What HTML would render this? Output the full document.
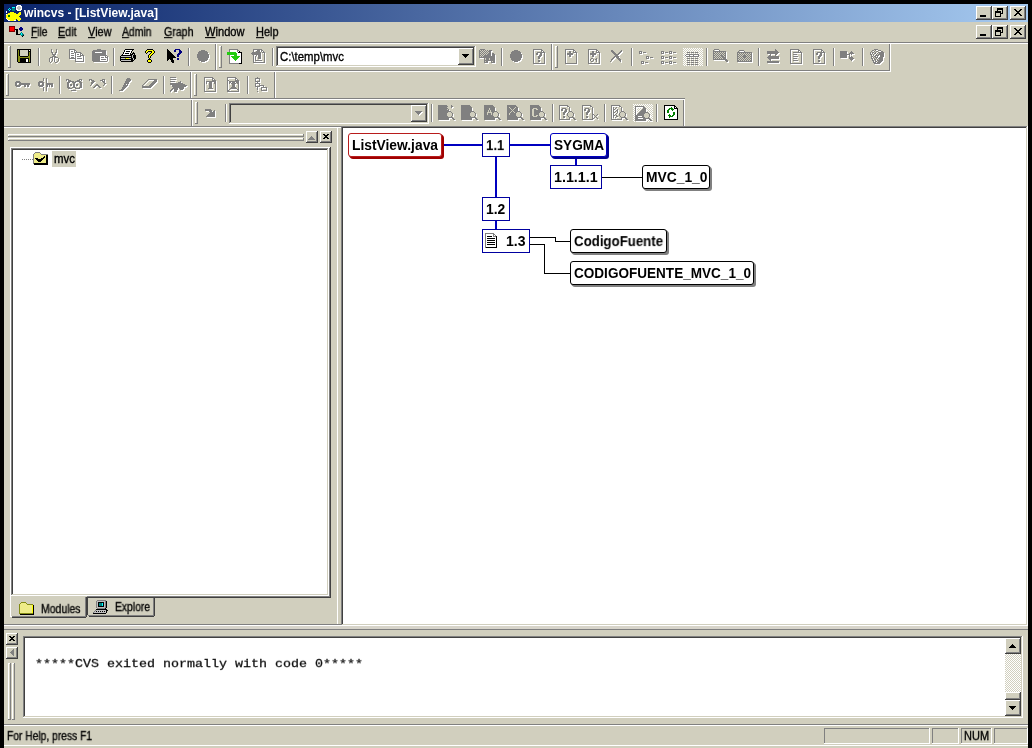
<!DOCTYPE html>
<html><head><meta charset="utf-8"><title>wincvs - [ListView.java]</title>
<style>
html,body{margin:0;padding:0}
body{width:1032px;height:748px;background:#d1cfbe;position:relative;overflow:hidden;font:11px/1 "Liberation Sans",sans-serif}
div{position:absolute;box-sizing:border-box}
svg{position:absolute;overflow:visible}
u{text-decoration:underline}
.t{will-change:transform}
.s{-webkit-text-stroke:0.3px currentColor}
</style></head><body>
<div style="left:0px;top:0px;width:1032px;height:4px;background:#000;"></div>
<div style="left:0px;top:0px;width:4px;height:748px;background:#000;"></div>
<div style="left:1028px;top:0px;width:4px;height:748px;background:#000;"></div>
<div style="left:4px;top:4px;width:1024px;height:18px;background:linear-gradient(to right,#0a246a,#a6caf0);"></div>
<div class="t" style="left:24px;top:6.69px;font:bold 11px/13px 'Liberation Sans',sans-serif;color:#fff;white-space:pre;transform:scale(1.0959,1.0900);transform-origin:0 10.31px;">wincvs - [ListView.java]</div>
<svg style="left:6px;top:5px" width="16" height="16" viewBox="0 0 16 16" shape-rendering="crispEdges" ><rect x="11" y="0" width="4" height="1" fill="#fff"/><rect x="10" y="1" width="2" height="1" fill="#fff"/><rect x="12" y="1" width="2" height="1" fill="#c0c0c0"/><rect x="14" y="1" width="2" height="1" fill="#fff"/><rect x="6" y="2" width="3" height="1" fill="#00ffff"/><rect x="10" y="2" width="1" height="1" fill="#fff"/><rect x="11" y="2" width="4" height="1" fill="#c0c0c0"/><rect x="15" y="2" width="1" height="1" fill="#fff"/><rect x="3" y="3" width="1" height="1" fill="#00ffff"/><rect x="6" y="3" width="3" height="1" fill="#008080"/><rect x="10" y="3" width="1" height="1" fill="#fff"/><rect x="11" y="3" width="4" height="1" fill="#c0c0c0"/><rect x="15" y="3" width="1" height="1" fill="#fff"/><rect x="2" y="4" width="1" height="1" fill="#00ffff"/><rect x="4" y="4" width="1" height="1" fill="#00ffff"/><rect x="6" y="4" width="3" height="1" fill="#008080"/><rect x="10" y="4" width="2" height="1" fill="#fff"/><rect x="12" y="4" width="2" height="1" fill="#c0c0c0"/><rect x="14" y="4" width="2" height="1" fill="#fff"/><rect x="3" y="5" width="1" height="1" fill="#00ffff"/><rect x="6" y="5" width="3" height="1" fill="#008080"/><rect x="11" y="5" width="4" height="1" fill="#fff"/><rect x="0" y="6" width="1" height="1" fill="#fff"/><rect x="0" y="7" width="1" height="1" fill="#fff"/><rect x="4" y="7" width="4" height="1" fill="#ffff00"/><rect x="13" y="7" width="2" height="1" fill="#ffff00"/><rect x="2" y="8" width="8" height="1" fill="#ffff00"/><rect x="12" y="8" width="3" height="1" fill="#ffff00"/><rect x="0" y="9" width="1" height="1" fill="#fff"/><rect x="1" y="9" width="14" height="1" fill="#ffff00"/><rect x="0" y="10" width="2" height="1" fill="#ffff00"/><rect x="2" y="10" width="2" height="1" fill="#008000"/><rect x="4" y="10" width="10" height="1" fill="#ffff00"/><rect x="0" y="11" width="2" height="1" fill="#ffff00"/><rect x="2" y="11" width="2" height="1" fill="#008000"/><rect x="4" y="11" width="9" height="1" fill="#ffff00"/><rect x="0" y="12" width="14" height="1" fill="#ffff00"/><rect x="0" y="13" width="1" height="1" fill="#fff"/><rect x="1" y="13" width="14" height="1" fill="#ffff00"/><rect x="1" y="14" width="1" height="1" fill="#fff"/><rect x="2" y="14" width="8" height="1" fill="#ffff00"/><rect x="11" y="14" width="4" height="1" fill="#ffff00"/><rect x="2" y="15" width="2" height="1" fill="#fff"/><rect x="4" y="15" width="4" height="1" fill="#ffff00"/><rect x="8" y="15" width="2" height="1" fill="#fff"/><rect x="12" y="15" width="2" height="1" fill="#ffff00"/></svg>
<div style="left:976px;top:6px;width:16px;height:14px;background:#d1cfbe;"></div>
<div style="left:976px;top:6px;width:15px;height:1px;background:#ffffff;"></div>
<div style="left:976px;top:6px;width:1px;height:13px;background:#ffffff;"></div>
<div style="left:976px;top:19px;width:16px;height:1px;background:#404040;"></div>
<div style="left:991px;top:6px;width:1px;height:14px;background:#404040;"></div>
<div style="left:977px;top:18px;width:14px;height:1px;background:#808080;"></div>
<div style="left:990px;top:7px;width:1px;height:12px;background:#808080;"></div>
<div style="left:980px;top:15px;width:6px;height:2px;background:#000;"></div>
<div style="left:992px;top:6px;width:16px;height:14px;background:#d1cfbe;"></div>
<div style="left:992px;top:6px;width:15px;height:1px;background:#ffffff;"></div>
<div style="left:992px;top:6px;width:1px;height:13px;background:#ffffff;"></div>
<div style="left:992px;top:19px;width:16px;height:1px;background:#404040;"></div>
<div style="left:1007px;top:6px;width:1px;height:14px;background:#404040;"></div>
<div style="left:993px;top:18px;width:14px;height:1px;background:#808080;"></div>
<div style="left:1006px;top:7px;width:1px;height:12px;background:#808080;"></div>
<svg style="left:995px;top:8px" width="8" height="9" viewBox="0 0 8 9" shape-rendering="crispEdges" ><rect x="2" y="0" width="6" height="1" fill="#000"/><rect x="2" y="1" width="6" height="1" fill="#000"/><rect x="2" y="2" width="1" height="1" fill="#000"/><rect x="7" y="2" width="1" height="1" fill="#000"/><rect x="0" y="3" width="6" height="1" fill="#000"/><rect x="7" y="3" width="1" height="1" fill="#000"/><rect x="0" y="4" width="6" height="1" fill="#000"/><rect x="7" y="4" width="1" height="1" fill="#000"/><rect x="0" y="5" width="1" height="1" fill="#000"/><rect x="5" y="5" width="3" height="1" fill="#000"/><rect x="0" y="6" width="1" height="1" fill="#000"/><rect x="5" y="6" width="1" height="1" fill="#000"/><rect x="0" y="7" width="1" height="1" fill="#000"/><rect x="5" y="7" width="1" height="1" fill="#000"/><rect x="0" y="8" width="6" height="1" fill="#000"/></svg>
<div style="left:1010px;top:6px;width:16px;height:14px;background:#d1cfbe;"></div>
<div style="left:1010px;top:6px;width:15px;height:1px;background:#ffffff;"></div>
<div style="left:1010px;top:6px;width:1px;height:13px;background:#ffffff;"></div>
<div style="left:1010px;top:19px;width:16px;height:1px;background:#404040;"></div>
<div style="left:1025px;top:6px;width:1px;height:14px;background:#404040;"></div>
<div style="left:1011px;top:18px;width:14px;height:1px;background:#808080;"></div>
<div style="left:1024px;top:7px;width:1px;height:12px;background:#808080;"></div>
<svg style="left:1014px;top:9px" width="8" height="7" viewBox="0 0 8 7" shape-rendering="crispEdges" ><rect x="0" y="0" width="2" height="1" fill="#000"/><rect x="6" y="0" width="2" height="1" fill="#000"/><rect x="1" y="1" width="2" height="1" fill="#000"/><rect x="5" y="1" width="2" height="1" fill="#000"/><rect x="2" y="2" width="4" height="1" fill="#000"/><rect x="3" y="3" width="2" height="1" fill="#000"/><rect x="2" y="4" width="4" height="1" fill="#000"/><rect x="1" y="5" width="2" height="1" fill="#000"/><rect x="5" y="5" width="2" height="1" fill="#000"/><rect x="0" y="6" width="2" height="1" fill="#000"/><rect x="6" y="6" width="2" height="1" fill="#000"/></svg>
<div style="left:976px;top:25px;width:16px;height:14px;background:#d1cfbe;"></div>
<div style="left:976px;top:25px;width:15px;height:1px;background:#ffffff;"></div>
<div style="left:976px;top:25px;width:1px;height:13px;background:#ffffff;"></div>
<div style="left:976px;top:38px;width:16px;height:1px;background:#404040;"></div>
<div style="left:991px;top:25px;width:1px;height:14px;background:#404040;"></div>
<div style="left:977px;top:37px;width:14px;height:1px;background:#808080;"></div>
<div style="left:990px;top:26px;width:1px;height:12px;background:#808080;"></div>
<div style="left:980px;top:34px;width:6px;height:2px;background:#000;"></div>
<div style="left:992px;top:25px;width:16px;height:14px;background:#d1cfbe;"></div>
<div style="left:992px;top:25px;width:15px;height:1px;background:#ffffff;"></div>
<div style="left:992px;top:25px;width:1px;height:13px;background:#ffffff;"></div>
<div style="left:992px;top:38px;width:16px;height:1px;background:#404040;"></div>
<div style="left:1007px;top:25px;width:1px;height:14px;background:#404040;"></div>
<div style="left:993px;top:37px;width:14px;height:1px;background:#808080;"></div>
<div style="left:1006px;top:26px;width:1px;height:12px;background:#808080;"></div>
<svg style="left:995px;top:27px" width="8" height="9" viewBox="0 0 8 9" shape-rendering="crispEdges" ><rect x="2" y="0" width="6" height="1" fill="#000"/><rect x="2" y="1" width="6" height="1" fill="#000"/><rect x="2" y="2" width="1" height="1" fill="#000"/><rect x="7" y="2" width="1" height="1" fill="#000"/><rect x="0" y="3" width="6" height="1" fill="#000"/><rect x="7" y="3" width="1" height="1" fill="#000"/><rect x="0" y="4" width="6" height="1" fill="#000"/><rect x="7" y="4" width="1" height="1" fill="#000"/><rect x="0" y="5" width="1" height="1" fill="#000"/><rect x="5" y="5" width="3" height="1" fill="#000"/><rect x="0" y="6" width="1" height="1" fill="#000"/><rect x="5" y="6" width="1" height="1" fill="#000"/><rect x="0" y="7" width="1" height="1" fill="#000"/><rect x="5" y="7" width="1" height="1" fill="#000"/><rect x="0" y="8" width="6" height="1" fill="#000"/></svg>
<div style="left:1010px;top:25px;width:16px;height:14px;background:#d1cfbe;"></div>
<div style="left:1010px;top:25px;width:15px;height:1px;background:#ffffff;"></div>
<div style="left:1010px;top:25px;width:1px;height:13px;background:#ffffff;"></div>
<div style="left:1010px;top:38px;width:16px;height:1px;background:#404040;"></div>
<div style="left:1025px;top:25px;width:1px;height:14px;background:#404040;"></div>
<div style="left:1011px;top:37px;width:14px;height:1px;background:#808080;"></div>
<div style="left:1024px;top:26px;width:1px;height:12px;background:#808080;"></div>
<svg style="left:1014px;top:28px" width="8" height="7" viewBox="0 0 8 7" shape-rendering="crispEdges" ><rect x="0" y="0" width="2" height="1" fill="#000"/><rect x="6" y="0" width="2" height="1" fill="#000"/><rect x="1" y="1" width="2" height="1" fill="#000"/><rect x="5" y="1" width="2" height="1" fill="#000"/><rect x="2" y="2" width="4" height="1" fill="#000"/><rect x="3" y="3" width="2" height="1" fill="#000"/><rect x="2" y="4" width="4" height="1" fill="#000"/><rect x="1" y="5" width="2" height="1" fill="#000"/><rect x="5" y="5" width="2" height="1" fill="#000"/><rect x="0" y="6" width="2" height="1" fill="#000"/><rect x="6" y="6" width="2" height="1" fill="#000"/></svg>
<svg style="left:8px;top:25px" width="16" height="12" viewBox="0 0 16 12" shape-rendering="crispEdges" ><rect x="1" y="1" width="6" height="1" fill="#800000"/><rect x="1" y="2" width="1" height="1" fill="#800000"/><rect x="2" y="2" width="4" height="1" fill="#ff0000"/><rect x="6" y="2" width="1" height="1" fill="#800000"/><rect x="12" y="2" width="2" height="1" fill="#000080"/><rect x="1" y="3" width="1" height="1" fill="#800000"/><rect x="2" y="3" width="4" height="1" fill="#ff0000"/><rect x="6" y="3" width="1" height="1" fill="#800000"/><rect x="11" y="3" width="4" height="1" fill="#000080"/><rect x="1" y="4" width="1" height="1" fill="#800000"/><rect x="2" y="4" width="4" height="1" fill="#ff0000"/><rect x="6" y="4" width="1" height="1" fill="#800000"/><rect x="7" y="4" width="3" height="1" fill="#000"/><rect x="11" y="4" width="4" height="1" fill="#000080"/><rect x="1" y="5" width="1" height="1" fill="#800000"/><rect x="2" y="5" width="4" height="1" fill="#ff0000"/><rect x="6" y="5" width="1" height="1" fill="#800000"/><rect x="8" y="5" width="2" height="1" fill="#000"/><rect x="12" y="5" width="2" height="1" fill="#000080"/><rect x="1" y="6" width="6" height="1" fill="#800000"/><rect x="8" y="6" width="2" height="1" fill="#000"/><rect x="8" y="7" width="2" height="1" fill="#000"/><rect x="13" y="7" width="1" height="1" fill="#008080"/><rect x="8" y="8" width="2" height="1" fill="#000"/><rect x="12" y="8" width="1" height="1" fill="#008080"/><rect x="13" y="8" width="1" height="1" fill="#00ffff"/><rect x="14" y="8" width="1" height="1" fill="#008080"/><rect x="8" y="9" width="4" height="1" fill="#000"/><rect x="12" y="9" width="1" height="1" fill="#008080"/><rect x="13" y="9" width="1" height="1" fill="#00ffff"/><rect x="14" y="9" width="2" height="1" fill="#008080"/><rect x="13" y="10" width="2" height="1" fill="#008080"/><rect x="15" y="10" width="1" height="1" fill="#000"/><rect x="14" y="11" width="1" height="1" fill="#000"/></svg>
<div class="t s" style="left:31px;top:25.69px;font:11px/13px 'Liberation Sans',sans-serif;color:#000;white-space:pre;transform:scale(0.9310,1.0900);transform-origin:0 10.31px;"><u>F</u>ile</div>
<div class="t s" style="left:58px;top:25.69px;font:11px/13px 'Liberation Sans',sans-serif;color:#000;white-space:pre;transform:scale(0.9760,1.0900);transform-origin:0 10.31px;"><u>E</u>dit</div>
<div class="t s" style="left:88px;top:25.69px;font:11px/13px 'Liberation Sans',sans-serif;color:#000;white-space:pre;transform:scale(0.9940,1.0900);transform-origin:0 10.31px;"><u>V</u>iew</div>
<div class="t s" style="left:122px;top:25.69px;font:11px/13px 'Liberation Sans',sans-serif;color:#000;white-space:pre;transform:scale(0.9461,1.0900);transform-origin:0 10.31px;"><u>A</u>dmin</div>
<div class="t s" style="left:164px;top:25.69px;font:11px/13px 'Liberation Sans',sans-serif;color:#000;white-space:pre;transform:scale(0.9649,1.0900);transform-origin:0 10.31px;"><u>G</u>raph</div>
<div class="t s" style="left:205px;top:25.69px;font:11px/13px 'Liberation Sans',sans-serif;color:#000;white-space:pre;transform:scale(1.0097,1.0900);transform-origin:0 10.31px;"><u>W</u>indow</div>
<div class="t s" style="left:256px;top:25.69px;font:11px/13px 'Liberation Sans',sans-serif;color:#000;white-space:pre;transform:scale(0.9946,1.0900);transform-origin:0 10.31px;"><u>H</u>elp</div>
<div style="left:4px;top:42px;width:1024px;height:1px;background:#808080;"></div>
<div style="left:4px;top:43px;width:1024px;height:1px;background:#ffffff;"></div>
<div style="left:4px;top:70px;width:887px;height:1px;background:#808080;"></div>
<div style="left:4px;top:71px;width:887px;height:1px;background:#ffffff;"></div>
<div style="left:4px;top:98px;width:681px;height:1px;background:#808080;"></div>
<div style="left:4px;top:99px;width:681px;height:1px;background:#ffffff;"></div>
<div style="left:4px;top:126px;width:1024px;height:1px;background:#808080;"></div>
<div style="left:4px;top:127px;width:1024px;height:1px;background:#ffffff;"></div>
<div style="left:8px;top:46px;width:3px;height:1px;background:#ffffff;"></div>
<div style="left:8px;top:46px;width:1px;height:22px;background:#ffffff;"></div>
<div style="left:8px;top:67px;width:3px;height:1px;background:#808080;"></div>
<div style="left:10px;top:46px;width:1px;height:22px;background:#808080;"></div>
<svg style="left:16px;top:49px" width="15" height="14" viewBox="0 0 15 14" shape-rendering="crispEdges" ><rect x="1" y="0" width="14" height="1" fill="#000"/><rect x="1" y="1" width="1" height="1" fill="#000"/><rect x="2" y="1" width="1" height="1" fill="#848c14"/><rect x="3" y="1" width="1" height="1" fill="#000"/><rect x="4" y="1" width="8" height="1" fill="#d1cfbe"/><rect x="12" y="1" width="1" height="1" fill="#000"/><rect x="13" y="1" width="1" height="1" fill="#fff"/><rect x="14" y="1" width="1" height="1" fill="#000"/><rect x="1" y="2" width="1" height="1" fill="#000"/><rect x="2" y="2" width="1" height="1" fill="#848c14"/><rect x="3" y="2" width="1" height="1" fill="#000"/><rect x="4" y="2" width="8" height="1" fill="#d1cfbe"/><rect x="12" y="2" width="3" height="1" fill="#000"/><rect x="1" y="3" width="1" height="1" fill="#000"/><rect x="2" y="3" width="1" height="1" fill="#848c14"/><rect x="3" y="3" width="1" height="1" fill="#000"/><rect x="4" y="3" width="8" height="1" fill="#d1cfbe"/><rect x="12" y="3" width="1" height="1" fill="#000"/><rect x="13" y="3" width="1" height="1" fill="#848c14"/><rect x="14" y="3" width="1" height="1" fill="#000"/><rect x="1" y="4" width="1" height="1" fill="#000"/><rect x="2" y="4" width="1" height="1" fill="#848c14"/><rect x="3" y="4" width="1" height="1" fill="#000"/><rect x="4" y="4" width="8" height="1" fill="#d1cfbe"/><rect x="12" y="4" width="1" height="1" fill="#000"/><rect x="13" y="4" width="1" height="1" fill="#848c14"/><rect x="14" y="4" width="1" height="1" fill="#000"/><rect x="1" y="5" width="1" height="1" fill="#000"/><rect x="2" y="5" width="1" height="1" fill="#848c14"/><rect x="3" y="5" width="1" height="1" fill="#000"/><rect x="4" y="5" width="8" height="1" fill="#d1cfbe"/><rect x="12" y="5" width="1" height="1" fill="#000"/><rect x="13" y="5" width="1" height="1" fill="#848c14"/><rect x="14" y="5" width="1" height="1" fill="#000"/><rect x="1" y="6" width="1" height="1" fill="#000"/><rect x="2" y="6" width="1" height="1" fill="#848c14"/><rect x="3" y="6" width="1" height="1" fill="#000"/><rect x="4" y="6" width="8" height="1" fill="#d1cfbe"/><rect x="12" y="6" width="1" height="1" fill="#000"/><rect x="13" y="6" width="1" height="1" fill="#848c14"/><rect x="14" y="6" width="1" height="1" fill="#000"/><rect x="1" y="7" width="1" height="1" fill="#000"/><rect x="2" y="7" width="2" height="1" fill="#848c14"/><rect x="4" y="7" width="8" height="1" fill="#000"/><rect x="12" y="7" width="2" height="1" fill="#848c14"/><rect x="14" y="7" width="1" height="1" fill="#000"/><rect x="1" y="8" width="1" height="1" fill="#000"/><rect x="2" y="8" width="12" height="1" fill="#848c14"/><rect x="14" y="8" width="1" height="1" fill="#000"/><rect x="1" y="9" width="1" height="1" fill="#000"/><rect x="2" y="9" width="2" height="1" fill="#848c14"/><rect x="4" y="9" width="9" height="1" fill="#000"/><rect x="13" y="9" width="1" height="1" fill="#848c14"/><rect x="14" y="9" width="1" height="1" fill="#000"/><rect x="1" y="10" width="1" height="1" fill="#000"/><rect x="2" y="10" width="2" height="1" fill="#848c14"/><rect x="4" y="10" width="6" height="1" fill="#000"/><rect x="10" y="10" width="2" height="1" fill="#fff"/><rect x="12" y="10" width="1" height="1" fill="#000"/><rect x="13" y="10" width="1" height="1" fill="#848c14"/><rect x="14" y="10" width="1" height="1" fill="#000"/><rect x="1" y="11" width="1" height="1" fill="#000"/><rect x="2" y="11" width="2" height="1" fill="#848c14"/><rect x="4" y="11" width="6" height="1" fill="#000"/><rect x="10" y="11" width="2" height="1" fill="#fff"/><rect x="12" y="11" width="1" height="1" fill="#000"/><rect x="13" y="11" width="1" height="1" fill="#848c14"/><rect x="14" y="11" width="1" height="1" fill="#000"/><rect x="1" y="12" width="1" height="1" fill="#000"/><rect x="2" y="12" width="2" height="1" fill="#848c14"/><rect x="4" y="12" width="6" height="1" fill="#000"/><rect x="10" y="12" width="2" height="1" fill="#fff"/><rect x="12" y="12" width="1" height="1" fill="#000"/><rect x="13" y="12" width="1" height="1" fill="#848c14"/><rect x="14" y="12" width="1" height="1" fill="#000"/><rect x="2" y="13" width="13" height="1" fill="#000"/></svg>
<div style="left:38px;top:48px;width:1px;height:18px;background:#808080;"></div>
<div style="left:39px;top:48px;width:1px;height:18px;background:#ffffff;"></div>
<svg style="left:45px;top:49px" width="15" height="15" viewBox="0 0 15 15" shape-rendering="crispEdges" ><rect x="6" y="0" width="1" height="1" fill="#808080"/><rect x="11" y="0" width="1" height="1" fill="#808080"/><rect x="6" y="1" width="1" height="1" fill="#808080"/><rect x="7" y="1" width="1" height="1" fill="#fff"/><rect x="11" y="1" width="1" height="1" fill="#808080"/><rect x="12" y="1" width="1" height="1" fill="#fff"/><rect x="6" y="2" width="1" height="1" fill="#808080"/><rect x="7" y="2" width="1" height="1" fill="#fff"/><rect x="11" y="2" width="1" height="1" fill="#808080"/><rect x="12" y="2" width="1" height="1" fill="#fff"/><rect x="6" y="3" width="2" height="1" fill="#808080"/><rect x="10" y="3" width="2" height="1" fill="#808080"/><rect x="12" y="3" width="1" height="1" fill="#fff"/><rect x="7" y="4" width="1" height="1" fill="#808080"/><rect x="8" y="4" width="1" height="1" fill="#fff"/><rect x="10" y="4" width="1" height="1" fill="#808080"/><rect x="11" y="4" width="2" height="1" fill="#fff"/><rect x="7" y="5" width="4" height="1" fill="#808080"/><rect x="11" y="5" width="1" height="1" fill="#fff"/><rect x="8" y="6" width="2" height="1" fill="#808080"/><rect x="10" y="6" width="2" height="1" fill="#fff"/><rect x="7" y="7" width="4" height="1" fill="#808080"/><rect x="5" y="8" width="3" height="1" fill="#808080"/><rect x="8" y="8" width="1" height="1" fill="#fff"/><rect x="9" y="8" width="4" height="1" fill="#808080"/><rect x="4" y="9" width="1" height="1" fill="#808080"/><rect x="6" y="9" width="1" height="1" fill="#fff"/><rect x="7" y="9" width="1" height="1" fill="#808080"/><rect x="8" y="9" width="1" height="1" fill="#fff"/><rect x="9" y="9" width="1" height="1" fill="#808080"/><rect x="10" y="9" width="3" height="1" fill="#fff"/><rect x="13" y="9" width="1" height="1" fill="#808080"/><rect x="4" y="10" width="1" height="1" fill="#808080"/><rect x="5" y="10" width="1" height="1" fill="#fff"/><rect x="7" y="10" width="1" height="1" fill="#808080"/><rect x="8" y="10" width="1" height="1" fill="#fff"/><rect x="9" y="10" width="1" height="1" fill="#808080"/><rect x="10" y="10" width="1" height="1" fill="#fff"/><rect x="13" y="10" width="1" height="1" fill="#808080"/><rect x="14" y="10" width="1" height="1" fill="#fff"/><rect x="4" y="11" width="1" height="1" fill="#808080"/><rect x="5" y="11" width="1" height="1" fill="#fff"/><rect x="7" y="11" width="1" height="1" fill="#808080"/><rect x="8" y="11" width="1" height="1" fill="#fff"/><rect x="9" y="11" width="1" height="1" fill="#808080"/><rect x="10" y="11" width="1" height="1" fill="#fff"/><rect x="13" y="11" width="1" height="1" fill="#808080"/><rect x="14" y="11" width="1" height="1" fill="#fff"/><rect x="4" y="12" width="1" height="1" fill="#808080"/><rect x="5" y="12" width="1" height="1" fill="#fff"/><rect x="6" y="12" width="1" height="1" fill="#808080"/><rect x="8" y="12" width="1" height="1" fill="#fff"/><rect x="9" y="12" width="1" height="1" fill="#808080"/><rect x="10" y="12" width="1" height="1" fill="#fff"/><rect x="12" y="12" width="1" height="1" fill="#808080"/><rect x="14" y="12" width="1" height="1" fill="#fff"/><rect x="5" y="13" width="1" height="1" fill="#808080"/><rect x="7" y="13" width="1" height="1" fill="#fff"/><rect x="10" y="13" width="2" height="1" fill="#808080"/><rect x="13" y="13" width="1" height="1" fill="#fff"/><rect x="6" y="14" width="1" height="1" fill="#fff"/><rect x="11" y="14" width="2" height="1" fill="#fff"/></svg>
<svg style="left:68px;top:49px" width="17" height="14" viewBox="0 0 17 14" shape-rendering="crispEdges" ><rect x="1" y="0" width="6" height="1" fill="#808080"/><rect x="1" y="1" width="1" height="1" fill="#808080"/><rect x="2" y="1" width="4" height="1" fill="#fff"/><rect x="6" y="1" width="2" height="1" fill="#808080"/><rect x="1" y="2" width="1" height="1" fill="#808080"/><rect x="2" y="2" width="1" height="1" fill="#fff"/><rect x="3" y="2" width="2" height="1" fill="#808080"/><rect x="5" y="2" width="1" height="1" fill="#fff"/><rect x="6" y="2" width="1" height="1" fill="#808080"/><rect x="7" y="2" width="1" height="1" fill="#fff"/><rect x="8" y="2" width="1" height="1" fill="#808080"/><rect x="1" y="3" width="1" height="1" fill="#808080"/><rect x="2" y="3" width="4" height="1" fill="#fff"/><rect x="6" y="3" width="7" height="1" fill="#808080"/><rect x="1" y="4" width="1" height="1" fill="#808080"/><rect x="2" y="4" width="1" height="1" fill="#fff"/><rect x="3" y="4" width="3" height="1" fill="#808080"/><rect x="6" y="4" width="1" height="1" fill="#fff"/><rect x="7" y="4" width="1" height="1" fill="#808080"/><rect x="8" y="4" width="4" height="1" fill="#fff"/><rect x="12" y="4" width="2" height="1" fill="#808080"/><rect x="1" y="5" width="1" height="1" fill="#808080"/><rect x="2" y="5" width="5" height="1" fill="#fff"/><rect x="7" y="5" width="1" height="1" fill="#808080"/><rect x="8" y="5" width="1" height="1" fill="#fff"/><rect x="9" y="5" width="2" height="1" fill="#808080"/><rect x="11" y="5" width="1" height="1" fill="#fff"/><rect x="12" y="5" width="1" height="1" fill="#808080"/><rect x="13" y="5" width="1" height="1" fill="#fff"/><rect x="14" y="5" width="1" height="1" fill="#808080"/><rect x="1" y="6" width="1" height="1" fill="#808080"/><rect x="2" y="6" width="1" height="1" fill="#fff"/><rect x="3" y="6" width="3" height="1" fill="#808080"/><rect x="6" y="6" width="1" height="1" fill="#fff"/><rect x="7" y="6" width="1" height="1" fill="#808080"/><rect x="8" y="6" width="4" height="1" fill="#fff"/><rect x="12" y="6" width="4" height="1" fill="#808080"/><rect x="1" y="7" width="1" height="1" fill="#808080"/><rect x="2" y="7" width="5" height="1" fill="#fff"/><rect x="7" y="7" width="1" height="1" fill="#808080"/><rect x="8" y="7" width="1" height="1" fill="#fff"/><rect x="9" y="7" width="4" height="1" fill="#808080"/><rect x="13" y="7" width="2" height="1" fill="#fff"/><rect x="15" y="7" width="1" height="1" fill="#808080"/><rect x="16" y="7" width="1" height="1" fill="#fff"/><rect x="1" y="8" width="1" height="1" fill="#808080"/><rect x="2" y="8" width="1" height="1" fill="#fff"/><rect x="3" y="8" width="3" height="1" fill="#808080"/><rect x="6" y="8" width="1" height="1" fill="#fff"/><rect x="7" y="8" width="1" height="1" fill="#808080"/><rect x="8" y="8" width="7" height="1" fill="#fff"/><rect x="15" y="8" width="1" height="1" fill="#808080"/><rect x="16" y="8" width="1" height="1" fill="#fff"/><rect x="1" y="9" width="7" height="1" fill="#808080"/><rect x="8" y="9" width="1" height="1" fill="#fff"/><rect x="9" y="9" width="5" height="1" fill="#808080"/><rect x="14" y="9" width="1" height="1" fill="#fff"/><rect x="15" y="9" width="1" height="1" fill="#808080"/><rect x="16" y="9" width="1" height="1" fill="#fff"/><rect x="2" y="10" width="5" height="1" fill="#fff"/><rect x="7" y="10" width="1" height="1" fill="#808080"/><rect x="8" y="10" width="7" height="1" fill="#fff"/><rect x="15" y="10" width="1" height="1" fill="#808080"/><rect x="16" y="10" width="1" height="1" fill="#fff"/><rect x="7" y="11" width="1" height="1" fill="#808080"/><rect x="8" y="11" width="7" height="1" fill="#fff"/><rect x="15" y="11" width="1" height="1" fill="#808080"/><rect x="16" y="11" width="1" height="1" fill="#fff"/><rect x="7" y="12" width="9" height="1" fill="#808080"/><rect x="16" y="12" width="1" height="1" fill="#fff"/><rect x="8" y="13" width="9" height="1" fill="#fff"/></svg>
<svg style="left:91px;top:49px" width="18" height="14" viewBox="0 0 18 14" shape-rendering="crispEdges" ><rect x="6" y="0" width="4" height="1" fill="#808080"/><rect x="2" y="1" width="13" height="1" fill="#808080"/><rect x="1" y="2" width="14" height="1" fill="#808080"/><rect x="15" y="2" width="1" height="1" fill="#fff"/><rect x="1" y="3" width="3" height="1" fill="#808080"/><rect x="4" y="3" width="7" height="1" fill="#fff"/><rect x="11" y="3" width="4" height="1" fill="#808080"/><rect x="15" y="3" width="1" height="1" fill="#fff"/><rect x="1" y="4" width="14" height="1" fill="#808080"/><rect x="15" y="4" width="1" height="1" fill="#fff"/><rect x="1" y="5" width="14" height="1" fill="#808080"/><rect x="15" y="5" width="1" height="1" fill="#fff"/><rect x="1" y="6" width="15" height="1" fill="#808080"/><rect x="1" y="7" width="8" height="1" fill="#808080"/><rect x="9" y="7" width="5" height="1" fill="#fff"/><rect x="14" y="7" width="1" height="1" fill="#808080"/><rect x="15" y="7" width="1" height="1" fill="#fff"/><rect x="16" y="7" width="1" height="1" fill="#808080"/><rect x="1" y="8" width="8" height="1" fill="#808080"/><rect x="9" y="8" width="1" height="1" fill="#fff"/><rect x="10" y="8" width="3" height="1" fill="#808080"/><rect x="13" y="8" width="1" height="1" fill="#fff"/><rect x="14" y="8" width="3" height="1" fill="#808080"/><rect x="17" y="8" width="1" height="1" fill="#fff"/><rect x="1" y="9" width="8" height="1" fill="#808080"/><rect x="9" y="9" width="7" height="1" fill="#fff"/><rect x="16" y="9" width="1" height="1" fill="#808080"/><rect x="17" y="9" width="1" height="1" fill="#fff"/><rect x="1" y="10" width="8" height="1" fill="#808080"/><rect x="9" y="10" width="1" height="1" fill="#fff"/><rect x="10" y="10" width="5" height="1" fill="#808080"/><rect x="15" y="10" width="1" height="1" fill="#fff"/><rect x="16" y="10" width="1" height="1" fill="#808080"/><rect x="17" y="10" width="1" height="1" fill="#fff"/><rect x="1" y="11" width="8" height="1" fill="#808080"/><rect x="9" y="11" width="7" height="1" fill="#fff"/><rect x="16" y="11" width="1" height="1" fill="#808080"/><rect x="17" y="11" width="1" height="1" fill="#fff"/><rect x="2" y="12" width="14" height="1" fill="#808080"/><rect x="17" y="12" width="1" height="1" fill="#fff"/><rect x="3" y="13" width="14" height="1" fill="#fff"/></svg>
<div style="left:113px;top:48px;width:1px;height:18px;background:#808080;"></div>
<div style="left:114px;top:48px;width:1px;height:18px;background:#ffffff;"></div>
<svg style="left:120px;top:49px" width="16" height="13" viewBox="0 0 16 13" shape-rendering="crispEdges" ><rect x="5" y="0" width="9" height="1" fill="#000"/><rect x="4" y="1" width="1" height="1" fill="#000"/><rect x="5" y="1" width="7" height="1" fill="#fff"/><rect x="12" y="1" width="1" height="1" fill="#000"/><rect x="4" y="2" width="1" height="1" fill="#000"/><rect x="5" y="2" width="1" height="1" fill="#fff"/><rect x="6" y="2" width="4" height="1" fill="#000"/><rect x="10" y="2" width="1" height="1" fill="#fff"/><rect x="11" y="2" width="1" height="1" fill="#000"/><rect x="3" y="3" width="1" height="1" fill="#000"/><rect x="4" y="3" width="7" height="1" fill="#fff"/><rect x="11" y="3" width="1" height="1" fill="#000"/><rect x="13" y="3" width="1" height="1" fill="#000"/><rect x="3" y="4" width="1" height="1" fill="#000"/><rect x="4" y="4" width="1" height="1" fill="#fff"/><rect x="5" y="4" width="4" height="1" fill="#000"/><rect x="9" y="4" width="1" height="1" fill="#fff"/><rect x="10" y="4" width="1" height="1" fill="#000"/><rect x="12" y="4" width="3" height="1" fill="#000"/><rect x="2" y="5" width="1" height="1" fill="#000"/><rect x="3" y="5" width="7" height="1" fill="#fff"/><rect x="10" y="5" width="3" height="1" fill="#000"/><rect x="13" y="5" width="1" height="1" fill="#c0c0c0"/><rect x="14" y="5" width="1" height="1" fill="#000"/><rect x="1" y="6" width="11" height="1" fill="#000"/><rect x="12" y="6" width="1" height="1" fill="#c0c0c0"/><rect x="13" y="6" width="3" height="1" fill="#000"/><rect x="0" y="7" width="1" height="1" fill="#000"/><rect x="1" y="7" width="10" height="1" fill="#c0c0c0"/><rect x="11" y="7" width="1" height="1" fill="#000"/><rect x="12" y="7" width="1" height="1" fill="#c0c0c0"/><rect x="13" y="7" width="3" height="1" fill="#000"/><rect x="0" y="8" width="12" height="1" fill="#000"/><rect x="12" y="8" width="1" height="1" fill="#c0c0c0"/><rect x="13" y="8" width="3" height="1" fill="#000"/><rect x="0" y="9" width="1" height="1" fill="#000"/><rect x="1" y="9" width="4" height="1" fill="#c0c0c0"/><rect x="5" y="9" width="1" height="1" fill="#848c14"/><rect x="6" y="9" width="3" height="1" fill="#ffff00"/><rect x="9" y="9" width="2" height="1" fill="#c0c0c0"/><rect x="11" y="9" width="2" height="1" fill="#000"/><rect x="13" y="9" width="1" height="1" fill="#c0c0c0"/><rect x="14" y="9" width="2" height="1" fill="#000"/><rect x="0" y="10" width="13" height="1" fill="#000"/><rect x="13" y="10" width="1" height="1" fill="#c0c0c0"/><rect x="14" y="10" width="1" height="1" fill="#000"/><rect x="0" y="11" width="1" height="1" fill="#000"/><rect x="1" y="11" width="10" height="1" fill="#c0c0c0"/><rect x="11" y="11" width="3" height="1" fill="#000"/><rect x="1" y="12" width="12" height="1" fill="#000"/></svg>
<svg style="left:143px;top:49px" width="12" height="14" viewBox="0 0 12 14" shape-rendering="crispEdges" ><rect x="4" y="0" width="6" height="1" fill="#000"/><rect x="3" y="1" width="1" height="1" fill="#000"/><rect x="4" y="1" width="6" height="1" fill="#ffff00"/><rect x="10" y="1" width="1" height="1" fill="#000"/><rect x="2" y="2" width="1" height="1" fill="#000"/><rect x="3" y="2" width="2" height="1" fill="#ffff00"/><rect x="5" y="2" width="4" height="1" fill="#000"/><rect x="9" y="2" width="2" height="1" fill="#ffff00"/><rect x="11" y="2" width="1" height="1" fill="#000"/><rect x="2" y="3" width="1" height="1" fill="#000"/><rect x="3" y="3" width="1" height="1" fill="#ffff00"/><rect x="4" y="3" width="1" height="1" fill="#000"/><rect x="8" y="3" width="1" height="1" fill="#000"/><rect x="9" y="3" width="2" height="1" fill="#ffff00"/><rect x="11" y="3" width="1" height="1" fill="#000"/><rect x="3" y="4" width="1" height="1" fill="#000"/><rect x="7" y="4" width="1" height="1" fill="#000"/><rect x="8" y="4" width="2" height="1" fill="#ffff00"/><rect x="10" y="4" width="1" height="1" fill="#000"/><rect x="6" y="5" width="1" height="1" fill="#000"/><rect x="7" y="5" width="2" height="1" fill="#ffff00"/><rect x="9" y="5" width="1" height="1" fill="#000"/><rect x="5" y="6" width="1" height="1" fill="#000"/><rect x="6" y="6" width="2" height="1" fill="#ffff00"/><rect x="8" y="6" width="1" height="1" fill="#000"/><rect x="5" y="7" width="1" height="1" fill="#000"/><rect x="6" y="7" width="1" height="1" fill="#ffff00"/><rect x="7" y="7" width="1" height="1" fill="#000"/><rect x="5" y="8" width="1" height="1" fill="#000"/><rect x="6" y="8" width="1" height="1" fill="#ffff00"/><rect x="7" y="8" width="1" height="1" fill="#000"/><rect x="6" y="9" width="1" height="1" fill="#000"/><rect x="5" y="10" width="3" height="1" fill="#000"/><rect x="4" y="11" width="1" height="1" fill="#000"/><rect x="5" y="11" width="3" height="1" fill="#ffff00"/><rect x="8" y="11" width="1" height="1" fill="#000"/><rect x="4" y="12" width="1" height="1" fill="#000"/><rect x="5" y="12" width="3" height="1" fill="#ffff00"/><rect x="8" y="12" width="1" height="1" fill="#000"/><rect x="5" y="13" width="3" height="1" fill="#000"/></svg>
<svg style="left:166px;top:49px" width="16" height="14" viewBox="0 0 16 14" shape-rendering="crispEdges" ><rect x="1" y="0" width="1" height="1" fill="#000"/><rect x="9" y="0" width="5" height="1" fill="#000080"/><rect x="1" y="1" width="2" height="1" fill="#000"/><rect x="8" y="1" width="2" height="1" fill="#000080"/><rect x="13" y="1" width="2" height="1" fill="#000080"/><rect x="1" y="2" width="3" height="1" fill="#000"/><rect x="8" y="2" width="2" height="1" fill="#000080"/><rect x="13" y="2" width="3" height="1" fill="#000080"/><rect x="1" y="3" width="4" height="1" fill="#000"/><rect x="13" y="3" width="3" height="1" fill="#000080"/><rect x="1" y="4" width="5" height="1" fill="#000"/><rect x="12" y="4" width="3" height="1" fill="#000080"/><rect x="1" y="5" width="6" height="1" fill="#000"/><rect x="11" y="5" width="3" height="1" fill="#000080"/><rect x="1" y="6" width="7" height="1" fill="#000"/><rect x="11" y="6" width="2" height="1" fill="#000080"/><rect x="1" y="7" width="8" height="1" fill="#000"/><rect x="11" y="7" width="2" height="1" fill="#000080"/><rect x="1" y="8" width="9" height="1" fill="#000"/><rect x="1" y="9" width="6" height="1" fill="#000"/><rect x="11" y="9" width="2" height="1" fill="#000080"/><rect x="1" y="10" width="2" height="1" fill="#000"/><rect x="4" y="10" width="3" height="1" fill="#000"/><rect x="11" y="10" width="2" height="1" fill="#000080"/><rect x="1" y="11" width="1" height="1" fill="#000"/><rect x="5" y="11" width="3" height="1" fill="#000"/><rect x="5" y="12" width="3" height="1" fill="#000"/><rect x="6" y="13" width="2" height="1" fill="#000"/></svg>
<div style="left:188px;top:48px;width:1px;height:18px;background:#808080;"></div>
<div style="left:189px;top:48px;width:1px;height:18px;background:#ffffff;"></div>
<svg style="left:195px;top:49px" width="15" height="14" viewBox="0 0 15 14" shape-rendering="crispEdges" ><rect x="6" y="1" width="4" height="1" fill="#808080"/><rect x="4" y="2" width="8" height="1" fill="#808080"/><rect x="3" y="3" width="10" height="1" fill="#808080"/><rect x="3" y="4" width="10" height="1" fill="#808080"/><rect x="13" y="4" width="1" height="1" fill="#fff"/><rect x="2" y="5" width="12" height="1" fill="#808080"/><rect x="2" y="6" width="12" height="1" fill="#808080"/><rect x="14" y="6" width="1" height="1" fill="#fff"/><rect x="2" y="7" width="12" height="1" fill="#808080"/><rect x="14" y="7" width="1" height="1" fill="#fff"/><rect x="2" y="8" width="12" height="1" fill="#808080"/><rect x="14" y="8" width="1" height="1" fill="#fff"/><rect x="3" y="9" width="10" height="1" fill="#808080"/><rect x="13" y="9" width="2" height="1" fill="#fff"/><rect x="3" y="10" width="10" height="1" fill="#808080"/><rect x="13" y="10" width="1" height="1" fill="#fff"/><rect x="4" y="11" width="8" height="1" fill="#808080"/><rect x="12" y="11" width="2" height="1" fill="#fff"/><rect x="5" y="12" width="1" height="1" fill="#fff"/><rect x="6" y="12" width="4" height="1" fill="#808080"/><rect x="10" y="12" width="3" height="1" fill="#fff"/><rect x="7" y="13" width="4" height="1" fill="#fff"/></svg>
<div style="left:215px;top:44px;width:1px;height:26px;background:#808080;"></div>
<div style="left:216px;top:44px;width:1px;height:26px;background:#ffffff;"></div>
<div style="left:219px;top:46px;width:3px;height:1px;background:#ffffff;"></div>
<div style="left:219px;top:46px;width:1px;height:22px;background:#ffffff;"></div>
<div style="left:219px;top:67px;width:3px;height:1px;background:#808080;"></div>
<div style="left:221px;top:46px;width:1px;height:22px;background:#808080;"></div>
<svg style="left:227px;top:49px" width="15" height="15" viewBox="0 0 15 15" shape-rendering="crispEdges" ><rect x="2" y="0" width="9" height="1" fill="#808080"/><rect x="2" y="1" width="1" height="1" fill="#808080"/><rect x="3" y="1" width="7" height="1" fill="#fff"/><rect x="10" y="1" width="2" height="1" fill="#808080"/><rect x="2" y="2" width="1" height="1" fill="#808080"/><rect x="3" y="2" width="7" height="1" fill="#fff"/><rect x="10" y="2" width="1" height="1" fill="#808080"/><rect x="11" y="2" width="1" height="1" fill="#fff"/><rect x="12" y="2" width="1" height="1" fill="#000"/><rect x="0" y="3" width="9" height="1" fill="#22cc10"/><rect x="9" y="3" width="2" height="1" fill="#fff"/><rect x="11" y="3" width="4" height="1" fill="#000"/><rect x="0" y="4" width="10" height="1" fill="#22cc10"/><rect x="10" y="4" width="4" height="1" fill="#fff"/><rect x="14" y="4" width="1" height="1" fill="#000"/><rect x="0" y="5" width="10" height="1" fill="#22cc10"/><rect x="10" y="5" width="4" height="1" fill="#fff"/><rect x="14" y="5" width="1" height="1" fill="#000"/><rect x="2" y="6" width="1" height="1" fill="#808080"/><rect x="3" y="6" width="4" height="1" fill="#fff"/><rect x="7" y="6" width="3" height="1" fill="#22cc10"/><rect x="10" y="6" width="4" height="1" fill="#fff"/><rect x="14" y="6" width="1" height="1" fill="#000"/><rect x="2" y="7" width="1" height="1" fill="#808080"/><rect x="3" y="7" width="1" height="1" fill="#fff"/><rect x="4" y="7" width="9" height="1" fill="#22cc10"/><rect x="13" y="7" width="1" height="1" fill="#fff"/><rect x="14" y="7" width="1" height="1" fill="#000"/><rect x="2" y="8" width="1" height="1" fill="#808080"/><rect x="3" y="8" width="2" height="1" fill="#fff"/><rect x="5" y="8" width="7" height="1" fill="#22cc10"/><rect x="12" y="8" width="2" height="1" fill="#fff"/><rect x="14" y="8" width="1" height="1" fill="#000"/><rect x="2" y="9" width="1" height="1" fill="#808080"/><rect x="3" y="9" width="3" height="1" fill="#fff"/><rect x="6" y="9" width="5" height="1" fill="#22cc10"/><rect x="11" y="9" width="3" height="1" fill="#fff"/><rect x="14" y="9" width="1" height="1" fill="#000"/><rect x="2" y="10" width="1" height="1" fill="#808080"/><rect x="3" y="10" width="4" height="1" fill="#fff"/><rect x="7" y="10" width="3" height="1" fill="#22cc10"/><rect x="10" y="10" width="4" height="1" fill="#fff"/><rect x="14" y="10" width="1" height="1" fill="#000"/><rect x="2" y="11" width="1" height="1" fill="#808080"/><rect x="3" y="11" width="5" height="1" fill="#fff"/><rect x="8" y="11" width="1" height="1" fill="#22cc10"/><rect x="9" y="11" width="5" height="1" fill="#fff"/><rect x="14" y="11" width="1" height="1" fill="#000"/><rect x="2" y="12" width="1" height="1" fill="#808080"/><rect x="3" y="12" width="11" height="1" fill="#fff"/><rect x="14" y="12" width="1" height="1" fill="#000"/><rect x="2" y="13" width="1" height="1" fill="#808080"/><rect x="3" y="13" width="11" height="1" fill="#fff"/><rect x="14" y="13" width="1" height="1" fill="#000"/><rect x="2" y="14" width="10" height="1" fill="#808080"/><rect x="12" y="14" width="3" height="1" fill="#000"/></svg>
<svg style="left:250px;top:49px" width="16" height="15" viewBox="0 0 16 15" shape-rendering="crispEdges" ><rect x="3" y="0" width="9" height="1" fill="#808080"/><rect x="3" y="1" width="1" height="1" fill="#808080"/><rect x="4" y="1" width="3" height="1" fill="#fff"/><rect x="7" y="1" width="3" height="1" fill="#808080"/><rect x="10" y="1" width="1" height="1" fill="#fff"/><rect x="11" y="1" width="2" height="1" fill="#808080"/><rect x="3" y="2" width="1" height="1" fill="#808080"/><rect x="4" y="2" width="1" height="1" fill="#fff"/><rect x="6" y="2" width="4" height="1" fill="#808080"/><rect x="10" y="2" width="1" height="1" fill="#fff"/><rect x="11" y="2" width="1" height="1" fill="#808080"/><rect x="12" y="2" width="1" height="1" fill="#fff"/><rect x="13" y="2" width="1" height="1" fill="#808080"/><rect x="2" y="3" width="9" height="1" fill="#808080"/><rect x="12" y="3" width="3" height="1" fill="#808080"/><rect x="1" y="4" width="10" height="1" fill="#808080"/><rect x="11" y="4" width="1" height="1" fill="#fff"/><rect x="13" y="4" width="1" height="1" fill="#fff"/><rect x="14" y="4" width="1" height="1" fill="#808080"/><rect x="15" y="4" width="1" height="1" fill="#fff"/><rect x="2" y="5" width="9" height="1" fill="#808080"/><rect x="11" y="5" width="1" height="1" fill="#fff"/><rect x="14" y="5" width="1" height="1" fill="#808080"/><rect x="15" y="5" width="1" height="1" fill="#fff"/><rect x="3" y="6" width="1" height="1" fill="#808080"/><rect x="4" y="6" width="2" height="1" fill="#fff"/><rect x="6" y="6" width="1" height="1" fill="#808080"/><rect x="7" y="6" width="1" height="1" fill="#fff"/><rect x="8" y="6" width="3" height="1" fill="#808080"/><rect x="11" y="6" width="1" height="1" fill="#fff"/><rect x="14" y="6" width="1" height="1" fill="#808080"/><rect x="15" y="6" width="1" height="1" fill="#fff"/><rect x="3" y="7" width="1" height="1" fill="#808080"/><rect x="4" y="7" width="1" height="1" fill="#fff"/><rect x="5" y="7" width="1" height="1" fill="#808080"/><rect x="7" y="7" width="1" height="1" fill="#fff"/><rect x="8" y="7" width="3" height="1" fill="#808080"/><rect x="11" y="7" width="1" height="1" fill="#fff"/><rect x="14" y="7" width="1" height="1" fill="#808080"/><rect x="15" y="7" width="1" height="1" fill="#fff"/><rect x="3" y="8" width="1" height="1" fill="#808080"/><rect x="4" y="8" width="1" height="1" fill="#fff"/><rect x="5" y="8" width="1" height="1" fill="#808080"/><rect x="6" y="8" width="1" height="1" fill="#fff"/><rect x="8" y="8" width="3" height="1" fill="#808080"/><rect x="11" y="8" width="1" height="1" fill="#fff"/><rect x="14" y="8" width="1" height="1" fill="#808080"/><rect x="15" y="8" width="1" height="1" fill="#fff"/><rect x="3" y="9" width="1" height="1" fill="#808080"/><rect x="4" y="9" width="1" height="1" fill="#fff"/><rect x="5" y="9" width="1" height="1" fill="#808080"/><rect x="6" y="9" width="1" height="1" fill="#fff"/><rect x="8" y="9" width="3" height="1" fill="#808080"/><rect x="11" y="9" width="1" height="1" fill="#fff"/><rect x="14" y="9" width="1" height="1" fill="#808080"/><rect x="15" y="9" width="1" height="1" fill="#fff"/><rect x="3" y="10" width="1" height="1" fill="#808080"/><rect x="4" y="10" width="1" height="1" fill="#fff"/><rect x="5" y="10" width="1" height="1" fill="#808080"/><rect x="6" y="10" width="1" height="1" fill="#fff"/><rect x="9" y="10" width="3" height="1" fill="#fff"/><rect x="14" y="10" width="1" height="1" fill="#808080"/><rect x="15" y="10" width="1" height="1" fill="#fff"/><rect x="3" y="11" width="1" height="1" fill="#808080"/><rect x="4" y="11" width="1" height="1" fill="#fff"/><rect x="5" y="11" width="7" height="1" fill="#808080"/><rect x="14" y="11" width="1" height="1" fill="#808080"/><rect x="15" y="11" width="1" height="1" fill="#fff"/><rect x="3" y="12" width="1" height="1" fill="#808080"/><rect x="4" y="12" width="1" height="1" fill="#fff"/><rect x="6" y="12" width="7" height="1" fill="#fff"/><rect x="14" y="12" width="1" height="1" fill="#808080"/><rect x="15" y="12" width="1" height="1" fill="#fff"/><rect x="3" y="13" width="12" height="1" fill="#808080"/><rect x="15" y="13" width="1" height="1" fill="#fff"/><rect x="4" y="14" width="12" height="1" fill="#fff"/></svg>
<div style="left:272px;top:48px;width:1px;height:18px;background:#808080;"></div>
<div style="left:273px;top:48px;width:1px;height:18px;background:#ffffff;"></div>
<div style="left:276px;top:46px;width:200px;height:21px;background:#fff;"></div>
<div style="left:276px;top:46px;width:200px;height:1px;background:#808080;"></div>
<div style="left:276px;top:46px;width:1px;height:21px;background:#808080;"></div>
<div style="left:276px;top:66px;width:200px;height:1px;background:#ffffff;"></div>
<div style="left:475px;top:46px;width:1px;height:21px;background:#ffffff;"></div>
<div style="left:277px;top:47px;width:198px;height:1px;background:#404040;"></div>
<div style="left:277px;top:47px;width:1px;height:19px;background:#404040;"></div>
<div style="left:277px;top:65px;width:198px;height:1px;background:#d1cfbe;"></div>
<div style="left:474px;top:47px;width:1px;height:19px;background:#d1cfbe;"></div>
<div style="left:458px;top:48px;width:16px;height:17px;background:#d1cfbe;"></div>
<div style="left:458px;top:48px;width:15px;height:1px;background:#ffffff;"></div>
<div style="left:458px;top:48px;width:1px;height:16px;background:#ffffff;"></div>
<div style="left:458px;top:64px;width:16px;height:1px;background:#404040;"></div>
<div style="left:473px;top:48px;width:1px;height:17px;background:#404040;"></div>
<div style="left:459px;top:63px;width:14px;height:1px;background:#808080;"></div>
<div style="left:472px;top:49px;width:1px;height:15px;background:#808080;"></div>
<svg style="left:462px;top:54px" width="7" height="4" viewBox="0 0 7 4" shape-rendering="crispEdges" ><rect x="0" y="0" width="7" height="1" fill="#000"/><rect x="1" y="1" width="5" height="1" fill="#000"/><rect x="2" y="2" width="3" height="1" fill="#000"/><rect x="3" y="3" width="1" height="1" fill="#000"/></svg>
<div class="t s" style="left:280px;top:50.69px;font:11px/13px 'Liberation Sans',sans-serif;color:#000;white-space:pre;transform:scale(1.0367,1.0900);transform-origin:0 10.31px;">C:\temp\mvc</div>
<svg style="left:479px;top:49px" width="17" height="15" viewBox="0 0 17 15" shape-rendering="crispEdges" ><rect x="1" y="0" width="5" height="1" fill="#808080"/><rect x="0" y="1" width="1" height="1" fill="#808080"/><rect x="1" y="1" width="1" height="1" fill="#d1cfbe"/><rect x="2" y="1" width="1" height="1" fill="#808080"/><rect x="3" y="1" width="1" height="1" fill="#d1cfbe"/><rect x="4" y="1" width="1" height="1" fill="#808080"/><rect x="5" y="1" width="1" height="1" fill="#d1cfbe"/><rect x="6" y="1" width="1" height="1" fill="#808080"/><rect x="7" y="1" width="1" height="1" fill="#d1cfbe"/><rect x="8" y="1" width="1" height="1" fill="#808080"/><rect x="9" y="1" width="1" height="1" fill="#d1cfbe"/><rect x="10" y="1" width="3" height="1" fill="#808080"/><rect x="0" y="2" width="2" height="1" fill="#808080"/><rect x="2" y="2" width="1" height="1" fill="#d1cfbe"/><rect x="3" y="2" width="1" height="1" fill="#808080"/><rect x="4" y="2" width="1" height="1" fill="#d1cfbe"/><rect x="5" y="2" width="1" height="1" fill="#808080"/><rect x="6" y="2" width="1" height="1" fill="#d1cfbe"/><rect x="7" y="2" width="1" height="1" fill="#808080"/><rect x="8" y="2" width="1" height="1" fill="#d1cfbe"/><rect x="9" y="2" width="3" height="1" fill="#808080"/><rect x="12" y="2" width="2" height="1" fill="#fff"/><rect x="0" y="3" width="1" height="1" fill="#808080"/><rect x="1" y="3" width="1" height="1" fill="#d1cfbe"/><rect x="2" y="3" width="1" height="1" fill="#808080"/><rect x="3" y="3" width="1" height="1" fill="#d1cfbe"/><rect x="4" y="3" width="1" height="1" fill="#808080"/><rect x="5" y="3" width="1" height="1" fill="#d1cfbe"/><rect x="6" y="3" width="1" height="1" fill="#808080"/><rect x="7" y="3" width="1" height="1" fill="#d1cfbe"/><rect x="8" y="3" width="1" height="1" fill="#808080"/><rect x="9" y="3" width="1" height="1" fill="#d1cfbe"/><rect x="10" y="3" width="2" height="1" fill="#808080"/><rect x="12" y="3" width="1" height="1" fill="#fff"/><rect x="0" y="4" width="2" height="1" fill="#808080"/><rect x="2" y="4" width="1" height="1" fill="#d1cfbe"/><rect x="3" y="4" width="1" height="1" fill="#808080"/><rect x="4" y="4" width="1" height="1" fill="#d1cfbe"/><rect x="5" y="4" width="1" height="1" fill="#808080"/><rect x="6" y="4" width="1" height="1" fill="#d1cfbe"/><rect x="7" y="4" width="1" height="1" fill="#808080"/><rect x="8" y="4" width="1" height="1" fill="#d1cfbe"/><rect x="9" y="4" width="3" height="1" fill="#808080"/><rect x="12" y="4" width="1" height="1" fill="#fff"/><rect x="13" y="4" width="2" height="1" fill="#808080"/><rect x="0" y="5" width="1" height="1" fill="#808080"/><rect x="1" y="5" width="1" height="1" fill="#d1cfbe"/><rect x="2" y="5" width="1" height="1" fill="#808080"/><rect x="3" y="5" width="1" height="1" fill="#d1cfbe"/><rect x="4" y="5" width="1" height="1" fill="#808080"/><rect x="5" y="5" width="1" height="1" fill="#d1cfbe"/><rect x="6" y="5" width="1" height="1" fill="#808080"/><rect x="7" y="5" width="1" height="1" fill="#d1cfbe"/><rect x="8" y="5" width="4" height="1" fill="#808080"/><rect x="12" y="5" width="1" height="1" fill="#fff"/><rect x="13" y="5" width="3" height="1" fill="#808080"/><rect x="0" y="6" width="2" height="1" fill="#808080"/><rect x="2" y="6" width="1" height="1" fill="#d1cfbe"/><rect x="3" y="6" width="1" height="1" fill="#808080"/><rect x="4" y="6" width="1" height="1" fill="#d1cfbe"/><rect x="5" y="6" width="7" height="1" fill="#808080"/><rect x="12" y="6" width="1" height="1" fill="#fff"/><rect x="13" y="6" width="3" height="1" fill="#808080"/><rect x="16" y="6" width="1" height="1" fill="#fff"/><rect x="0" y="7" width="1" height="1" fill="#808080"/><rect x="1" y="7" width="1" height="1" fill="#d1cfbe"/><rect x="2" y="7" width="1" height="1" fill="#808080"/><rect x="3" y="7" width="1" height="1" fill="#d1cfbe"/><rect x="4" y="7" width="12" height="1" fill="#808080"/><rect x="16" y="7" width="1" height="1" fill="#fff"/><rect x="0" y="8" width="16" height="1" fill="#808080"/><rect x="16" y="8" width="1" height="1" fill="#fff"/><rect x="1" y="9" width="4" height="1" fill="#fff"/><rect x="5" y="9" width="1" height="1" fill="#808080"/><rect x="6" y="9" width="1" height="1" fill="#d1cfbe"/><rect x="7" y="9" width="3" height="1" fill="#808080"/><rect x="10" y="9" width="1" height="1" fill="#d1cfbe"/><rect x="11" y="9" width="5" height="1" fill="#808080"/><rect x="16" y="9" width="1" height="1" fill="#fff"/><rect x="5" y="10" width="1" height="1" fill="#808080"/><rect x="6" y="10" width="1" height="1" fill="#d1cfbe"/><rect x="7" y="10" width="3" height="1" fill="#808080"/><rect x="10" y="10" width="1" height="1" fill="#d1cfbe"/><rect x="11" y="10" width="5" height="1" fill="#808080"/><rect x="16" y="10" width="1" height="1" fill="#fff"/><rect x="5" y="11" width="11" height="1" fill="#808080"/><rect x="16" y="11" width="1" height="1" fill="#fff"/><rect x="5" y="12" width="1" height="1" fill="#808080"/><rect x="6" y="12" width="1" height="1" fill="#d1cfbe"/><rect x="7" y="12" width="2" height="1" fill="#808080"/><rect x="9" y="12" width="3" height="1" fill="#fff"/><rect x="12" y="12" width="1" height="1" fill="#808080"/><rect x="13" y="12" width="1" height="1" fill="#d1cfbe"/><rect x="14" y="12" width="2" height="1" fill="#808080"/><rect x="16" y="12" width="1" height="1" fill="#fff"/><rect x="5" y="13" width="4" height="1" fill="#808080"/><rect x="9" y="13" width="1" height="1" fill="#fff"/><rect x="12" y="13" width="4" height="1" fill="#808080"/><rect x="16" y="13" width="1" height="1" fill="#fff"/><rect x="6" y="14" width="4" height="1" fill="#fff"/><rect x="13" y="14" width="4" height="1" fill="#fff"/></svg>
<div style="left:501px;top:48px;width:1px;height:18px;background:#808080;"></div>
<div style="left:502px;top:48px;width:1px;height:18px;background:#ffffff;"></div>
<svg style="left:508px;top:49px" width="15" height="14" viewBox="0 0 15 14" shape-rendering="crispEdges" ><rect x="6" y="1" width="4" height="1" fill="#808080"/><rect x="4" y="2" width="8" height="1" fill="#808080"/><rect x="3" y="3" width="10" height="1" fill="#808080"/><rect x="3" y="4" width="10" height="1" fill="#808080"/><rect x="13" y="4" width="1" height="1" fill="#fff"/><rect x="2" y="5" width="12" height="1" fill="#808080"/><rect x="2" y="6" width="12" height="1" fill="#808080"/><rect x="14" y="6" width="1" height="1" fill="#fff"/><rect x="2" y="7" width="12" height="1" fill="#808080"/><rect x="14" y="7" width="1" height="1" fill="#fff"/><rect x="2" y="8" width="12" height="1" fill="#808080"/><rect x="14" y="8" width="1" height="1" fill="#fff"/><rect x="3" y="9" width="10" height="1" fill="#808080"/><rect x="13" y="9" width="2" height="1" fill="#fff"/><rect x="3" y="10" width="10" height="1" fill="#808080"/><rect x="13" y="10" width="1" height="1" fill="#fff"/><rect x="4" y="11" width="8" height="1" fill="#808080"/><rect x="12" y="11" width="2" height="1" fill="#fff"/><rect x="5" y="12" width="1" height="1" fill="#fff"/><rect x="6" y="12" width="4" height="1" fill="#808080"/><rect x="10" y="12" width="3" height="1" fill="#fff"/><rect x="7" y="13" width="4" height="1" fill="#fff"/></svg>
<svg style="left:531px;top:49px" width="15" height="16" viewBox="0 0 15 16" shape-rendering="crispEdges" ><rect x="2" y="0" width="9" height="1" fill="#808080"/><rect x="2" y="1" width="1" height="1" fill="#808080"/><rect x="3" y="1" width="7" height="1" fill="#fff"/><rect x="10" y="1" width="2" height="1" fill="#808080"/><rect x="2" y="2" width="1" height="1" fill="#808080"/><rect x="3" y="2" width="1" height="1" fill="#fff"/><rect x="10" y="2" width="1" height="1" fill="#808080"/><rect x="11" y="2" width="1" height="1" fill="#fff"/><rect x="12" y="2" width="1" height="1" fill="#808080"/><rect x="2" y="3" width="1" height="1" fill="#808080"/><rect x="3" y="3" width="1" height="1" fill="#fff"/><rect x="6" y="3" width="8" height="1" fill="#808080"/><rect x="2" y="4" width="1" height="1" fill="#808080"/><rect x="3" y="4" width="1" height="1" fill="#fff"/><rect x="5" y="4" width="2" height="1" fill="#808080"/><rect x="7" y="4" width="2" height="1" fill="#fff"/><rect x="9" y="4" width="2" height="1" fill="#808080"/><rect x="11" y="4" width="2" height="1" fill="#fff"/><rect x="13" y="4" width="1" height="1" fill="#808080"/><rect x="14" y="4" width="1" height="1" fill="#fff"/><rect x="2" y="5" width="1" height="1" fill="#808080"/><rect x="3" y="5" width="1" height="1" fill="#fff"/><rect x="5" y="5" width="2" height="1" fill="#808080"/><rect x="7" y="5" width="1" height="1" fill="#fff"/><rect x="9" y="5" width="2" height="1" fill="#808080"/><rect x="11" y="5" width="1" height="1" fill="#fff"/><rect x="13" y="5" width="1" height="1" fill="#808080"/><rect x="14" y="5" width="1" height="1" fill="#fff"/><rect x="2" y="6" width="1" height="1" fill="#808080"/><rect x="3" y="6" width="1" height="1" fill="#fff"/><rect x="6" y="6" width="2" height="1" fill="#fff"/><rect x="8" y="6" width="3" height="1" fill="#808080"/><rect x="11" y="6" width="1" height="1" fill="#fff"/><rect x="13" y="6" width="1" height="1" fill="#808080"/><rect x="14" y="6" width="1" height="1" fill="#fff"/><rect x="2" y="7" width="1" height="1" fill="#808080"/><rect x="3" y="7" width="1" height="1" fill="#fff"/><rect x="7" y="7" width="3" height="1" fill="#808080"/><rect x="10" y="7" width="2" height="1" fill="#fff"/><rect x="13" y="7" width="1" height="1" fill="#808080"/><rect x="14" y="7" width="1" height="1" fill="#fff"/><rect x="2" y="8" width="1" height="1" fill="#808080"/><rect x="3" y="8" width="1" height="1" fill="#fff"/><rect x="7" y="8" width="2" height="1" fill="#808080"/><rect x="9" y="8" width="2" height="1" fill="#fff"/><rect x="13" y="8" width="1" height="1" fill="#808080"/><rect x="14" y="8" width="1" height="1" fill="#fff"/><rect x="2" y="9" width="1" height="1" fill="#808080"/><rect x="3" y="9" width="1" height="1" fill="#fff"/><rect x="7" y="9" width="2" height="1" fill="#808080"/><rect x="9" y="9" width="1" height="1" fill="#fff"/><rect x="13" y="9" width="1" height="1" fill="#808080"/><rect x="14" y="9" width="1" height="1" fill="#fff"/><rect x="2" y="10" width="1" height="1" fill="#808080"/><rect x="3" y="10" width="1" height="1" fill="#fff"/><rect x="8" y="10" width="2" height="1" fill="#fff"/><rect x="13" y="10" width="1" height="1" fill="#808080"/><rect x="14" y="10" width="1" height="1" fill="#fff"/><rect x="2" y="11" width="1" height="1" fill="#808080"/><rect x="3" y="11" width="1" height="1" fill="#fff"/><rect x="7" y="11" width="2" height="1" fill="#808080"/><rect x="13" y="11" width="1" height="1" fill="#808080"/><rect x="14" y="11" width="1" height="1" fill="#fff"/><rect x="2" y="12" width="1" height="1" fill="#808080"/><rect x="3" y="12" width="1" height="1" fill="#fff"/><rect x="7" y="12" width="2" height="1" fill="#808080"/><rect x="9" y="12" width="1" height="1" fill="#fff"/><rect x="13" y="12" width="1" height="1" fill="#808080"/><rect x="14" y="12" width="1" height="1" fill="#fff"/><rect x="2" y="13" width="1" height="1" fill="#808080"/><rect x="3" y="13" width="1" height="1" fill="#fff"/><rect x="8" y="13" width="2" height="1" fill="#fff"/><rect x="13" y="13" width="1" height="1" fill="#808080"/><rect x="14" y="13" width="1" height="1" fill="#fff"/><rect x="2" y="14" width="12" height="1" fill="#808080"/><rect x="14" y="14" width="1" height="1" fill="#fff"/><rect x="3" y="15" width="12" height="1" fill="#fff"/></svg>
<div style="left:551px;top:44px;width:1px;height:26px;background:#808080;"></div>
<div style="left:552px;top:44px;width:1px;height:26px;background:#ffffff;"></div>
<div style="left:555px;top:46px;width:3px;height:1px;background:#ffffff;"></div>
<div style="left:555px;top:46px;width:1px;height:22px;background:#ffffff;"></div>
<div style="left:555px;top:67px;width:3px;height:1px;background:#808080;"></div>
<div style="left:557px;top:46px;width:1px;height:22px;background:#808080;"></div>
<svg style="left:563px;top:49px" width="15" height="16" viewBox="0 0 15 16" shape-rendering="crispEdges" ><rect x="2" y="0" width="9" height="1" fill="#808080"/><rect x="2" y="1" width="1" height="1" fill="#808080"/><rect x="3" y="1" width="7" height="1" fill="#fff"/><rect x="10" y="1" width="2" height="1" fill="#808080"/><rect x="2" y="2" width="1" height="1" fill="#808080"/><rect x="3" y="2" width="1" height="1" fill="#fff"/><rect x="6" y="2" width="2" height="1" fill="#808080"/><rect x="10" y="2" width="1" height="1" fill="#808080"/><rect x="11" y="2" width="1" height="1" fill="#fff"/><rect x="12" y="2" width="1" height="1" fill="#808080"/><rect x="2" y="3" width="1" height="1" fill="#808080"/><rect x="3" y="3" width="1" height="1" fill="#fff"/><rect x="6" y="3" width="2" height="1" fill="#808080"/><rect x="8" y="3" width="1" height="1" fill="#fff"/><rect x="10" y="3" width="4" height="1" fill="#808080"/><rect x="2" y="4" width="1" height="1" fill="#808080"/><rect x="3" y="4" width="1" height="1" fill="#fff"/><rect x="4" y="4" width="6" height="1" fill="#808080"/><rect x="11" y="4" width="2" height="1" fill="#fff"/><rect x="13" y="4" width="1" height="1" fill="#808080"/><rect x="14" y="4" width="1" height="1" fill="#fff"/><rect x="2" y="5" width="1" height="1" fill="#808080"/><rect x="3" y="5" width="1" height="1" fill="#fff"/><rect x="4" y="5" width="6" height="1" fill="#808080"/><rect x="10" y="5" width="1" height="1" fill="#fff"/><rect x="13" y="5" width="1" height="1" fill="#808080"/><rect x="14" y="5" width="1" height="1" fill="#fff"/><rect x="2" y="6" width="1" height="1" fill="#808080"/><rect x="3" y="6" width="1" height="1" fill="#fff"/><rect x="5" y="6" width="1" height="1" fill="#fff"/><rect x="6" y="6" width="2" height="1" fill="#808080"/><rect x="8" y="6" width="3" height="1" fill="#fff"/><rect x="13" y="6" width="1" height="1" fill="#808080"/><rect x="14" y="6" width="1" height="1" fill="#fff"/><rect x="2" y="7" width="1" height="1" fill="#808080"/><rect x="3" y="7" width="1" height="1" fill="#fff"/><rect x="6" y="7" width="2" height="1" fill="#808080"/><rect x="8" y="7" width="1" height="1" fill="#fff"/><rect x="13" y="7" width="1" height="1" fill="#808080"/><rect x="14" y="7" width="1" height="1" fill="#fff"/><rect x="2" y="8" width="1" height="1" fill="#808080"/><rect x="3" y="8" width="1" height="1" fill="#fff"/><rect x="7" y="8" width="2" height="1" fill="#fff"/><rect x="13" y="8" width="1" height="1" fill="#808080"/><rect x="14" y="8" width="1" height="1" fill="#fff"/><rect x="2" y="9" width="1" height="1" fill="#808080"/><rect x="3" y="9" width="1" height="1" fill="#fff"/><rect x="13" y="9" width="1" height="1" fill="#808080"/><rect x="14" y="9" width="1" height="1" fill="#fff"/><rect x="2" y="10" width="1" height="1" fill="#808080"/><rect x="3" y="10" width="1" height="1" fill="#fff"/><rect x="13" y="10" width="1" height="1" fill="#808080"/><rect x="14" y="10" width="1" height="1" fill="#fff"/><rect x="2" y="11" width="1" height="1" fill="#808080"/><rect x="3" y="11" width="1" height="1" fill="#fff"/><rect x="13" y="11" width="1" height="1" fill="#808080"/><rect x="14" y="11" width="1" height="1" fill="#fff"/><rect x="2" y="12" width="1" height="1" fill="#808080"/><rect x="3" y="12" width="1" height="1" fill="#fff"/><rect x="13" y="12" width="1" height="1" fill="#808080"/><rect x="14" y="12" width="1" height="1" fill="#fff"/><rect x="2" y="13" width="1" height="1" fill="#808080"/><rect x="3" y="13" width="1" height="1" fill="#fff"/><rect x="13" y="13" width="1" height="1" fill="#808080"/><rect x="14" y="13" width="1" height="1" fill="#fff"/><rect x="2" y="14" width="12" height="1" fill="#808080"/><rect x="14" y="14" width="1" height="1" fill="#fff"/><rect x="3" y="15" width="12" height="1" fill="#fff"/></svg>
<svg style="left:586px;top:49px" width="15" height="16" viewBox="0 0 15 16" shape-rendering="crispEdges" ><rect x="2" y="0" width="9" height="1" fill="#808080"/><rect x="2" y="1" width="1" height="1" fill="#808080"/><rect x="3" y="1" width="7" height="1" fill="#fff"/><rect x="10" y="1" width="2" height="1" fill="#808080"/><rect x="2" y="2" width="1" height="1" fill="#808080"/><rect x="3" y="2" width="1" height="1" fill="#fff"/><rect x="6" y="2" width="2" height="1" fill="#808080"/><rect x="10" y="2" width="1" height="1" fill="#808080"/><rect x="11" y="2" width="1" height="1" fill="#fff"/><rect x="12" y="2" width="1" height="1" fill="#808080"/><rect x="2" y="3" width="1" height="1" fill="#808080"/><rect x="3" y="3" width="1" height="1" fill="#fff"/><rect x="6" y="3" width="2" height="1" fill="#808080"/><rect x="8" y="3" width="1" height="1" fill="#fff"/><rect x="10" y="3" width="4" height="1" fill="#808080"/><rect x="2" y="4" width="1" height="1" fill="#808080"/><rect x="3" y="4" width="1" height="1" fill="#fff"/><rect x="4" y="4" width="6" height="1" fill="#808080"/><rect x="11" y="4" width="2" height="1" fill="#fff"/><rect x="13" y="4" width="1" height="1" fill="#808080"/><rect x="14" y="4" width="1" height="1" fill="#fff"/><rect x="2" y="5" width="1" height="1" fill="#808080"/><rect x="3" y="5" width="1" height="1" fill="#fff"/><rect x="4" y="5" width="6" height="1" fill="#808080"/><rect x="10" y="5" width="1" height="1" fill="#fff"/><rect x="13" y="5" width="1" height="1" fill="#808080"/><rect x="14" y="5" width="1" height="1" fill="#fff"/><rect x="2" y="6" width="1" height="1" fill="#808080"/><rect x="3" y="6" width="1" height="1" fill="#fff"/><rect x="5" y="6" width="1" height="1" fill="#fff"/><rect x="6" y="6" width="2" height="1" fill="#808080"/><rect x="8" y="6" width="3" height="1" fill="#fff"/><rect x="13" y="6" width="1" height="1" fill="#808080"/><rect x="14" y="6" width="1" height="1" fill="#fff"/><rect x="2" y="7" width="1" height="1" fill="#808080"/><rect x="3" y="7" width="1" height="1" fill="#fff"/><rect x="6" y="7" width="2" height="1" fill="#808080"/><rect x="8" y="7" width="1" height="1" fill="#fff"/><rect x="13" y="7" width="1" height="1" fill="#808080"/><rect x="14" y="7" width="1" height="1" fill="#fff"/><rect x="2" y="8" width="1" height="1" fill="#808080"/><rect x="3" y="8" width="1" height="1" fill="#fff"/><rect x="7" y="8" width="2" height="1" fill="#fff"/><rect x="13" y="8" width="1" height="1" fill="#808080"/><rect x="14" y="8" width="1" height="1" fill="#fff"/><rect x="2" y="9" width="1" height="1" fill="#808080"/><rect x="3" y="9" width="1" height="1" fill="#fff"/><rect x="5" y="9" width="2" height="1" fill="#808080"/><rect x="10" y="9" width="1" height="1" fill="#808080"/><rect x="13" y="9" width="1" height="1" fill="#808080"/><rect x="14" y="9" width="1" height="1" fill="#fff"/><rect x="2" y="10" width="1" height="1" fill="#808080"/><rect x="3" y="10" width="1" height="1" fill="#fff"/><rect x="4" y="10" width="1" height="1" fill="#808080"/><rect x="6" y="10" width="1" height="1" fill="#fff"/><rect x="7" y="10" width="1" height="1" fill="#808080"/><rect x="9" y="10" width="2" height="1" fill="#808080"/><rect x="11" y="10" width="1" height="1" fill="#fff"/><rect x="13" y="10" width="1" height="1" fill="#808080"/><rect x="14" y="10" width="1" height="1" fill="#fff"/><rect x="2" y="11" width="1" height="1" fill="#808080"/><rect x="3" y="11" width="1" height="1" fill="#fff"/><rect x="4" y="11" width="1" height="1" fill="#808080"/><rect x="5" y="11" width="1" height="1" fill="#fff"/><rect x="7" y="11" width="1" height="1" fill="#808080"/><rect x="8" y="11" width="1" height="1" fill="#fff"/><rect x="10" y="11" width="1" height="1" fill="#808080"/><rect x="11" y="11" width="1" height="1" fill="#fff"/><rect x="13" y="11" width="1" height="1" fill="#808080"/><rect x="14" y="11" width="1" height="1" fill="#fff"/><rect x="2" y="12" width="1" height="1" fill="#808080"/><rect x="3" y="12" width="1" height="1" fill="#fff"/><rect x="5" y="12" width="2" height="1" fill="#808080"/><rect x="8" y="12" width="1" height="1" fill="#fff"/><rect x="10" y="12" width="1" height="1" fill="#808080"/><rect x="11" y="12" width="1" height="1" fill="#fff"/><rect x="13" y="12" width="1" height="1" fill="#808080"/><rect x="14" y="12" width="1" height="1" fill="#fff"/><rect x="2" y="13" width="1" height="1" fill="#808080"/><rect x="3" y="13" width="1" height="1" fill="#fff"/><rect x="6" y="13" width="2" height="1" fill="#fff"/><rect x="11" y="13" width="1" height="1" fill="#fff"/><rect x="13" y="13" width="1" height="1" fill="#808080"/><rect x="14" y="13" width="1" height="1" fill="#fff"/><rect x="2" y="14" width="12" height="1" fill="#808080"/><rect x="14" y="14" width="1" height="1" fill="#fff"/><rect x="3" y="15" width="12" height="1" fill="#fff"/></svg>
<svg style="left:609px;top:49px" width="14" height="14" viewBox="0 0 14 14" shape-rendering="crispEdges" ><rect x="2" y="1" width="2" height="1" fill="#808080"/><rect x="12" y="1" width="1" height="1" fill="#808080"/><rect x="2" y="2" width="3" height="1" fill="#808080"/><rect x="11" y="2" width="2" height="1" fill="#808080"/><rect x="13" y="2" width="1" height="1" fill="#fff"/><rect x="3" y="3" width="3" height="1" fill="#808080"/><rect x="10" y="3" width="2" height="1" fill="#808080"/><rect x="12" y="3" width="2" height="1" fill="#fff"/><rect x="4" y="4" width="3" height="1" fill="#808080"/><rect x="9" y="4" width="2" height="1" fill="#808080"/><rect x="11" y="4" width="2" height="1" fill="#fff"/><rect x="5" y="5" width="5" height="1" fill="#808080"/><rect x="10" y="5" width="2" height="1" fill="#fff"/><rect x="6" y="6" width="3" height="1" fill="#808080"/><rect x="9" y="6" width="2" height="1" fill="#fff"/><rect x="5" y="7" width="5" height="1" fill="#808080"/><rect x="4" y="8" width="2" height="1" fill="#808080"/><rect x="6" y="8" width="1" height="1" fill="#fff"/><rect x="7" y="8" width="3" height="1" fill="#808080"/><rect x="10" y="8" width="1" height="1" fill="#fff"/><rect x="3" y="9" width="2" height="1" fill="#808080"/><rect x="5" y="9" width="2" height="1" fill="#fff"/><rect x="8" y="9" width="3" height="1" fill="#808080"/><rect x="2" y="10" width="2" height="1" fill="#808080"/><rect x="4" y="10" width="2" height="1" fill="#fff"/><rect x="9" y="10" width="3" height="1" fill="#808080"/><rect x="2" y="11" width="1" height="1" fill="#808080"/><rect x="3" y="11" width="2" height="1" fill="#fff"/><rect x="10" y="11" width="2" height="1" fill="#808080"/><rect x="12" y="11" width="1" height="1" fill="#fff"/><rect x="1" y="12" width="1" height="1" fill="#808080"/><rect x="3" y="12" width="1" height="1" fill="#fff"/><rect x="11" y="12" width="1" height="1" fill="#808080"/><rect x="12" y="12" width="1" height="1" fill="#fff"/><rect x="2" y="13" width="1" height="1" fill="#fff"/><rect x="12" y="13" width="1" height="1" fill="#fff"/></svg>
<div style="left:631px;top:48px;width:1px;height:18px;background:#808080;"></div>
<div style="left:632px;top:48px;width:1px;height:18px;background:#ffffff;"></div>
<svg style="left:638px;top:49px" width="16" height="16" viewBox="0 0 16 16" shape-rendering="crispEdges" ><rect x="1" y="2" width="3" height="1" fill="#808080"/><rect x="1" y="3" width="1" height="1" fill="#808080"/><rect x="2" y="3" width="1" height="1" fill="#fff"/><rect x="3" y="3" width="1" height="1" fill="#808080"/><rect x="4" y="3" width="1" height="1" fill="#fff"/><rect x="5" y="3" width="3" height="1" fill="#808080"/><rect x="1" y="4" width="3" height="1" fill="#808080"/><rect x="4" y="4" width="1" height="1" fill="#fff"/><rect x="6" y="4" width="3" height="1" fill="#fff"/><rect x="2" y="5" width="3" height="1" fill="#fff"/><rect x="8" y="7" width="3" height="1" fill="#808080"/><rect x="8" y="8" width="1" height="1" fill="#808080"/><rect x="9" y="8" width="1" height="1" fill="#fff"/><rect x="10" y="8" width="1" height="1" fill="#808080"/><rect x="11" y="8" width="1" height="1" fill="#fff"/><rect x="12" y="8" width="3" height="1" fill="#808080"/><rect x="8" y="9" width="3" height="1" fill="#808080"/><rect x="11" y="9" width="1" height="1" fill="#fff"/><rect x="13" y="9" width="3" height="1" fill="#fff"/><rect x="9" y="10" width="3" height="1" fill="#fff"/><rect x="3" y="12" width="3" height="1" fill="#808080"/><rect x="3" y="13" width="1" height="1" fill="#808080"/><rect x="4" y="13" width="1" height="1" fill="#fff"/><rect x="5" y="13" width="1" height="1" fill="#808080"/><rect x="6" y="13" width="1" height="1" fill="#fff"/><rect x="7" y="13" width="3" height="1" fill="#808080"/><rect x="3" y="14" width="3" height="1" fill="#808080"/><rect x="6" y="14" width="1" height="1" fill="#fff"/><rect x="8" y="14" width="3" height="1" fill="#fff"/><rect x="4" y="15" width="3" height="1" fill="#fff"/></svg>
<svg style="left:661px;top:49px" width="16" height="16" viewBox="0 0 16 16" shape-rendering="crispEdges" ><rect x="0" y="2" width="3" height="1" fill="#808080"/><rect x="8" y="2" width="3" height="1" fill="#808080"/><rect x="0" y="3" width="1" height="1" fill="#808080"/><rect x="1" y="3" width="1" height="1" fill="#fff"/><rect x="2" y="3" width="1" height="1" fill="#808080"/><rect x="3" y="3" width="1" height="1" fill="#fff"/><rect x="4" y="3" width="3" height="1" fill="#808080"/><rect x="8" y="3" width="1" height="1" fill="#808080"/><rect x="9" y="3" width="1" height="1" fill="#fff"/><rect x="10" y="3" width="1" height="1" fill="#808080"/><rect x="11" y="3" width="1" height="1" fill="#fff"/><rect x="12" y="3" width="3" height="1" fill="#808080"/><rect x="0" y="4" width="3" height="1" fill="#808080"/><rect x="3" y="4" width="1" height="1" fill="#fff"/><rect x="5" y="4" width="3" height="1" fill="#fff"/><rect x="8" y="4" width="3" height="1" fill="#808080"/><rect x="11" y="4" width="1" height="1" fill="#fff"/><rect x="13" y="4" width="3" height="1" fill="#fff"/><rect x="1" y="5" width="3" height="1" fill="#fff"/><rect x="9" y="5" width="3" height="1" fill="#fff"/><rect x="0" y="7" width="3" height="1" fill="#808080"/><rect x="8" y="7" width="3" height="1" fill="#808080"/><rect x="0" y="8" width="1" height="1" fill="#808080"/><rect x="1" y="8" width="1" height="1" fill="#fff"/><rect x="2" y="8" width="1" height="1" fill="#808080"/><rect x="3" y="8" width="1" height="1" fill="#fff"/><rect x="4" y="8" width="3" height="1" fill="#808080"/><rect x="8" y="8" width="1" height="1" fill="#808080"/><rect x="9" y="8" width="1" height="1" fill="#fff"/><rect x="10" y="8" width="1" height="1" fill="#808080"/><rect x="11" y="8" width="1" height="1" fill="#fff"/><rect x="12" y="8" width="3" height="1" fill="#808080"/><rect x="0" y="9" width="3" height="1" fill="#808080"/><rect x="3" y="9" width="1" height="1" fill="#fff"/><rect x="5" y="9" width="3" height="1" fill="#fff"/><rect x="8" y="9" width="3" height="1" fill="#808080"/><rect x="11" y="9" width="1" height="1" fill="#fff"/><rect x="13" y="9" width="3" height="1" fill="#fff"/><rect x="1" y="10" width="3" height="1" fill="#fff"/><rect x="9" y="10" width="3" height="1" fill="#fff"/><rect x="0" y="12" width="3" height="1" fill="#808080"/><rect x="8" y="12" width="3" height="1" fill="#808080"/><rect x="0" y="13" width="1" height="1" fill="#808080"/><rect x="1" y="13" width="1" height="1" fill="#fff"/><rect x="2" y="13" width="1" height="1" fill="#808080"/><rect x="3" y="13" width="1" height="1" fill="#fff"/><rect x="4" y="13" width="3" height="1" fill="#808080"/><rect x="8" y="13" width="1" height="1" fill="#808080"/><rect x="9" y="13" width="1" height="1" fill="#fff"/><rect x="10" y="13" width="1" height="1" fill="#808080"/><rect x="11" y="13" width="1" height="1" fill="#fff"/><rect x="12" y="13" width="3" height="1" fill="#808080"/><rect x="0" y="14" width="3" height="1" fill="#808080"/><rect x="3" y="14" width="1" height="1" fill="#fff"/><rect x="5" y="14" width="3" height="1" fill="#fff"/><rect x="8" y="14" width="3" height="1" fill="#808080"/><rect x="11" y="14" width="1" height="1" fill="#fff"/><rect x="13" y="14" width="3" height="1" fill="#fff"/><rect x="1" y="15" width="3" height="1" fill="#fff"/><rect x="9" y="15" width="3" height="1" fill="#fff"/></svg>
<svg style="left:683px;top:48px" width="20" height="18" shape-rendering="crispEdges"><defs><pattern id="dz681" width="2" height="2" patternUnits="userSpaceOnUse"><rect width="2" height="2" fill="#d1cfbe"/><rect width="1" height="1" fill="#fff"/><rect x="1" y="1" width="1" height="1" fill="#fff"/></pattern></defs><rect width="20" height="18" fill="url(#dz681)"/></svg>
<svg style="left:685px;top:50px" width="14" height="15" viewBox="0 0 14 15" shape-rendering="crispEdges" ><rect x="2" y="2" width="3" height="1" fill="#808080"/><rect x="6" y="2" width="3" height="1" fill="#808080"/><rect x="10" y="2" width="3" height="1" fill="#808080"/><rect x="1" y="4" width="13" height="1" fill="#808080"/><rect x="0" y="5" width="1" height="1" fill="#808080"/><rect x="1" y="5" width="3" height="1" fill="#fff"/><rect x="4" y="5" width="1" height="1" fill="#808080"/><rect x="5" y="5" width="3" height="1" fill="#fff"/><rect x="8" y="5" width="1" height="1" fill="#808080"/><rect x="9" y="5" width="4" height="1" fill="#fff"/><rect x="13" y="5" width="1" height="1" fill="#808080"/><rect x="1" y="6" width="13" height="1" fill="#808080"/><rect x="2" y="8" width="3" height="1" fill="#808080"/><rect x="6" y="8" width="3" height="1" fill="#808080"/><rect x="10" y="8" width="3" height="1" fill="#808080"/><rect x="2" y="10" width="3" height="1" fill="#808080"/><rect x="6" y="10" width="3" height="1" fill="#808080"/><rect x="10" y="10" width="3" height="1" fill="#808080"/><rect x="2" y="12" width="3" height="1" fill="#808080"/><rect x="6" y="12" width="3" height="1" fill="#808080"/><rect x="10" y="12" width="3" height="1" fill="#808080"/><rect x="2" y="14" width="3" height="1" fill="#808080"/><rect x="6" y="14" width="3" height="1" fill="#808080"/><rect x="10" y="14" width="3" height="1" fill="#808080"/></svg>
<div style="left:706px;top:48px;width:1px;height:18px;background:#808080;"></div>
<div style="left:707px;top:48px;width:1px;height:18px;background:#ffffff;"></div>
<svg style="left:713px;top:49px" width="16" height="14" viewBox="0 0 16 14" shape-rendering="crispEdges" ><rect x="1" y="0" width="5" height="1" fill="#808080"/><rect x="0" y="1" width="1" height="1" fill="#808080"/><rect x="2" y="1" width="4" height="1" fill="#fff"/><rect x="6" y="1" width="1" height="1" fill="#808080"/><rect x="0" y="2" width="13" height="1" fill="#808080"/><rect x="0" y="3" width="1" height="1" fill="#808080"/><rect x="1" y="3" width="1" height="1" fill="#d1cfbe"/><rect x="2" y="3" width="1" height="1" fill="#808080"/><rect x="3" y="3" width="1" height="1" fill="#d1cfbe"/><rect x="4" y="3" width="1" height="1" fill="#808080"/><rect x="5" y="3" width="1" height="1" fill="#d1cfbe"/><rect x="6" y="3" width="1" height="1" fill="#808080"/><rect x="7" y="3" width="1" height="1" fill="#d1cfbe"/><rect x="8" y="3" width="1" height="1" fill="#808080"/><rect x="9" y="3" width="1" height="1" fill="#d1cfbe"/><rect x="10" y="3" width="1" height="1" fill="#808080"/><rect x="11" y="3" width="1" height="1" fill="#d1cfbe"/><rect x="12" y="3" width="1" height="1" fill="#808080"/><rect x="13" y="3" width="1" height="1" fill="#fff"/><rect x="0" y="4" width="2" height="1" fill="#808080"/><rect x="2" y="4" width="1" height="1" fill="#d1cfbe"/><rect x="3" y="4" width="1" height="1" fill="#808080"/><rect x="4" y="4" width="1" height="1" fill="#d1cfbe"/><rect x="5" y="4" width="1" height="1" fill="#808080"/><rect x="6" y="4" width="1" height="1" fill="#d1cfbe"/><rect x="7" y="4" width="1" height="1" fill="#808080"/><rect x="8" y="4" width="1" height="1" fill="#d1cfbe"/><rect x="9" y="4" width="1" height="1" fill="#808080"/><rect x="10" y="4" width="1" height="1" fill="#d1cfbe"/><rect x="11" y="4" width="2" height="1" fill="#808080"/><rect x="13" y="4" width="1" height="1" fill="#fff"/><rect x="0" y="5" width="1" height="1" fill="#808080"/><rect x="1" y="5" width="1" height="1" fill="#d1cfbe"/><rect x="2" y="5" width="1" height="1" fill="#808080"/><rect x="3" y="5" width="1" height="1" fill="#d1cfbe"/><rect x="4" y="5" width="1" height="1" fill="#808080"/><rect x="5" y="5" width="1" height="1" fill="#d1cfbe"/><rect x="6" y="5" width="1" height="1" fill="#808080"/><rect x="7" y="5" width="1" height="1" fill="#d1cfbe"/><rect x="8" y="5" width="1" height="1" fill="#808080"/><rect x="9" y="5" width="1" height="1" fill="#d1cfbe"/><rect x="10" y="5" width="1" height="1" fill="#808080"/><rect x="11" y="5" width="1" height="1" fill="#d1cfbe"/><rect x="12" y="5" width="1" height="1" fill="#808080"/><rect x="13" y="5" width="1" height="1" fill="#fff"/><rect x="0" y="6" width="2" height="1" fill="#808080"/><rect x="2" y="6" width="1" height="1" fill="#d1cfbe"/><rect x="3" y="6" width="1" height="1" fill="#808080"/><rect x="4" y="6" width="1" height="1" fill="#d1cfbe"/><rect x="5" y="6" width="1" height="1" fill="#808080"/><rect x="6" y="6" width="1" height="1" fill="#d1cfbe"/><rect x="7" y="6" width="3" height="1" fill="#808080"/><rect x="10" y="6" width="1" height="1" fill="#d1cfbe"/><rect x="11" y="6" width="2" height="1" fill="#808080"/><rect x="13" y="6" width="1" height="1" fill="#fff"/><rect x="0" y="7" width="1" height="1" fill="#808080"/><rect x="1" y="7" width="1" height="1" fill="#d1cfbe"/><rect x="2" y="7" width="1" height="1" fill="#808080"/><rect x="3" y="7" width="1" height="1" fill="#d1cfbe"/><rect x="4" y="7" width="1" height="1" fill="#808080"/><rect x="5" y="7" width="1" height="1" fill="#d1cfbe"/><rect x="6" y="7" width="1" height="1" fill="#808080"/><rect x="7" y="7" width="1" height="1" fill="#d1cfbe"/><rect x="8" y="7" width="3" height="1" fill="#808080"/><rect x="11" y="7" width="1" height="1" fill="#d1cfbe"/><rect x="12" y="7" width="1" height="1" fill="#808080"/><rect x="13" y="7" width="1" height="1" fill="#fff"/><rect x="0" y="8" width="2" height="1" fill="#808080"/><rect x="2" y="8" width="1" height="1" fill="#d1cfbe"/><rect x="3" y="8" width="1" height="1" fill="#808080"/><rect x="4" y="8" width="1" height="1" fill="#d1cfbe"/><rect x="5" y="8" width="1" height="1" fill="#808080"/><rect x="6" y="8" width="1" height="1" fill="#d1cfbe"/><rect x="7" y="8" width="1" height="1" fill="#808080"/><rect x="8" y="8" width="1" height="1" fill="#d1cfbe"/><rect x="9" y="8" width="4" height="1" fill="#808080"/><rect x="13" y="8" width="1" height="1" fill="#fff"/><rect x="0" y="9" width="1" height="1" fill="#808080"/><rect x="1" y="9" width="1" height="1" fill="#d1cfbe"/><rect x="2" y="9" width="1" height="1" fill="#808080"/><rect x="3" y="9" width="1" height="1" fill="#d1cfbe"/><rect x="4" y="9" width="1" height="1" fill="#808080"/><rect x="5" y="9" width="1" height="1" fill="#d1cfbe"/><rect x="6" y="9" width="1" height="1" fill="#808080"/><rect x="7" y="9" width="1" height="1" fill="#d1cfbe"/><rect x="8" y="9" width="1" height="1" fill="#808080"/><rect x="9" y="9" width="1" height="1" fill="#d1cfbe"/><rect x="10" y="9" width="3" height="1" fill="#808080"/><rect x="13" y="9" width="1" height="1" fill="#fff"/><rect x="0" y="10" width="14" height="1" fill="#808080"/><rect x="1" y="11" width="11" height="1" fill="#fff"/><rect x="12" y="11" width="3" height="1" fill="#808080"/><rect x="13" y="12" width="2" height="1" fill="#808080"/><rect x="15" y="12" width="1" height="1" fill="#fff"/><rect x="14" y="13" width="2" height="1" fill="#fff"/></svg>
<svg style="left:736px;top:49px" width="17" height="14" viewBox="0 0 17 14" shape-rendering="crispEdges" ><rect x="3" y="1" width="5" height="1" fill="#808080"/><rect x="2" y="2" width="1" height="1" fill="#808080"/><rect x="4" y="2" width="4" height="1" fill="#fff"/><rect x="8" y="2" width="1" height="1" fill="#808080"/><rect x="1" y="3" width="15" height="1" fill="#808080"/><rect x="1" y="4" width="1" height="1" fill="#808080"/><rect x="2" y="4" width="1" height="1" fill="#d1cfbe"/><rect x="3" y="4" width="1" height="1" fill="#808080"/><rect x="4" y="4" width="1" height="1" fill="#d1cfbe"/><rect x="5" y="4" width="1" height="1" fill="#808080"/><rect x="6" y="4" width="1" height="1" fill="#d1cfbe"/><rect x="7" y="4" width="1" height="1" fill="#808080"/><rect x="8" y="4" width="1" height="1" fill="#d1cfbe"/><rect x="9" y="4" width="1" height="1" fill="#808080"/><rect x="10" y="4" width="1" height="1" fill="#d1cfbe"/><rect x="11" y="4" width="1" height="1" fill="#808080"/><rect x="12" y="4" width="1" height="1" fill="#d1cfbe"/><rect x="13" y="4" width="1" height="1" fill="#808080"/><rect x="14" y="4" width="1" height="1" fill="#d1cfbe"/><rect x="15" y="4" width="1" height="1" fill="#808080"/><rect x="16" y="4" width="1" height="1" fill="#fff"/><rect x="1" y="5" width="2" height="1" fill="#808080"/><rect x="3" y="5" width="1" height="1" fill="#d1cfbe"/><rect x="4" y="5" width="1" height="1" fill="#808080"/><rect x="5" y="5" width="1" height="1" fill="#d1cfbe"/><rect x="6" y="5" width="1" height="1" fill="#808080"/><rect x="7" y="5" width="1" height="1" fill="#d1cfbe"/><rect x="8" y="5" width="1" height="1" fill="#808080"/><rect x="9" y="5" width="1" height="1" fill="#d1cfbe"/><rect x="10" y="5" width="1" height="1" fill="#808080"/><rect x="11" y="5" width="1" height="1" fill="#d1cfbe"/><rect x="12" y="5" width="1" height="1" fill="#808080"/><rect x="13" y="5" width="1" height="1" fill="#d1cfbe"/><rect x="14" y="5" width="2" height="1" fill="#808080"/><rect x="16" y="5" width="1" height="1" fill="#fff"/><rect x="1" y="6" width="1" height="1" fill="#808080"/><rect x="2" y="6" width="1" height="1" fill="#d1cfbe"/><rect x="3" y="6" width="1" height="1" fill="#808080"/><rect x="4" y="6" width="1" height="1" fill="#d1cfbe"/><rect x="5" y="6" width="1" height="1" fill="#808080"/><rect x="6" y="6" width="1" height="1" fill="#d1cfbe"/><rect x="7" y="6" width="3" height="1" fill="#808080"/><rect x="10" y="6" width="1" height="1" fill="#d1cfbe"/><rect x="11" y="6" width="1" height="1" fill="#808080"/><rect x="12" y="6" width="1" height="1" fill="#d1cfbe"/><rect x="13" y="6" width="1" height="1" fill="#808080"/><rect x="14" y="6" width="1" height="1" fill="#d1cfbe"/><rect x="15" y="6" width="1" height="1" fill="#808080"/><rect x="16" y="6" width="1" height="1" fill="#fff"/><rect x="1" y="7" width="2" height="1" fill="#808080"/><rect x="3" y="7" width="1" height="1" fill="#d1cfbe"/><rect x="4" y="7" width="1" height="1" fill="#808080"/><rect x="5" y="7" width="1" height="1" fill="#d1cfbe"/><rect x="6" y="7" width="5" height="1" fill="#808080"/><rect x="11" y="7" width="1" height="1" fill="#d1cfbe"/><rect x="12" y="7" width="1" height="1" fill="#808080"/><rect x="13" y="7" width="1" height="1" fill="#d1cfbe"/><rect x="14" y="7" width="2" height="1" fill="#808080"/><rect x="16" y="7" width="1" height="1" fill="#fff"/><rect x="1" y="8" width="1" height="1" fill="#808080"/><rect x="2" y="8" width="1" height="1" fill="#d1cfbe"/><rect x="3" y="8" width="1" height="1" fill="#808080"/><rect x="4" y="8" width="1" height="1" fill="#d1cfbe"/><rect x="5" y="8" width="1" height="1" fill="#808080"/><rect x="6" y="8" width="1" height="1" fill="#d1cfbe"/><rect x="7" y="8" width="3" height="1" fill="#808080"/><rect x="10" y="8" width="1" height="1" fill="#d1cfbe"/><rect x="11" y="8" width="1" height="1" fill="#808080"/><rect x="12" y="8" width="1" height="1" fill="#d1cfbe"/><rect x="13" y="8" width="1" height="1" fill="#808080"/><rect x="14" y="8" width="1" height="1" fill="#d1cfbe"/><rect x="15" y="8" width="1" height="1" fill="#808080"/><rect x="16" y="8" width="1" height="1" fill="#fff"/><rect x="1" y="9" width="2" height="1" fill="#808080"/><rect x="3" y="9" width="1" height="1" fill="#d1cfbe"/><rect x="4" y="9" width="1" height="1" fill="#808080"/><rect x="5" y="9" width="1" height="1" fill="#d1cfbe"/><rect x="6" y="9" width="1" height="1" fill="#808080"/><rect x="7" y="9" width="1" height="1" fill="#d1cfbe"/><rect x="8" y="9" width="1" height="1" fill="#808080"/><rect x="9" y="9" width="1" height="1" fill="#d1cfbe"/><rect x="10" y="9" width="1" height="1" fill="#808080"/><rect x="11" y="9" width="1" height="1" fill="#d1cfbe"/><rect x="12" y="9" width="1" height="1" fill="#808080"/><rect x="13" y="9" width="1" height="1" fill="#d1cfbe"/><rect x="14" y="9" width="2" height="1" fill="#808080"/><rect x="16" y="9" width="1" height="1" fill="#fff"/><rect x="1" y="10" width="1" height="1" fill="#808080"/><rect x="2" y="10" width="1" height="1" fill="#d1cfbe"/><rect x="3" y="10" width="1" height="1" fill="#808080"/><rect x="4" y="10" width="1" height="1" fill="#d1cfbe"/><rect x="5" y="10" width="1" height="1" fill="#808080"/><rect x="6" y="10" width="1" height="1" fill="#d1cfbe"/><rect x="7" y="10" width="1" height="1" fill="#808080"/><rect x="8" y="10" width="1" height="1" fill="#d1cfbe"/><rect x="9" y="10" width="1" height="1" fill="#808080"/><rect x="10" y="10" width="1" height="1" fill="#d1cfbe"/><rect x="11" y="10" width="1" height="1" fill="#808080"/><rect x="12" y="10" width="1" height="1" fill="#d1cfbe"/><rect x="13" y="10" width="1" height="1" fill="#808080"/><rect x="14" y="10" width="1" height="1" fill="#d1cfbe"/><rect x="15" y="10" width="1" height="1" fill="#808080"/><rect x="16" y="10" width="1" height="1" fill="#fff"/><rect x="1" y="11" width="2" height="1" fill="#808080"/><rect x="3" y="11" width="1" height="1" fill="#d1cfbe"/><rect x="4" y="11" width="1" height="1" fill="#808080"/><rect x="5" y="11" width="1" height="1" fill="#d1cfbe"/><rect x="6" y="11" width="1" height="1" fill="#808080"/><rect x="7" y="11" width="1" height="1" fill="#d1cfbe"/><rect x="8" y="11" width="1" height="1" fill="#808080"/><rect x="9" y="11" width="1" height="1" fill="#d1cfbe"/><rect x="10" y="11" width="1" height="1" fill="#808080"/><rect x="11" y="11" width="1" height="1" fill="#d1cfbe"/><rect x="12" y="11" width="1" height="1" fill="#808080"/><rect x="13" y="11" width="1" height="1" fill="#d1cfbe"/><rect x="14" y="11" width="2" height="1" fill="#808080"/><rect x="16" y="11" width="1" height="1" fill="#fff"/><rect x="1" y="12" width="15" height="1" fill="#808080"/><rect x="16" y="12" width="1" height="1" fill="#fff"/><rect x="2" y="13" width="15" height="1" fill="#fff"/></svg>
<div style="left:758px;top:48px;width:1px;height:18px;background:#808080;"></div>
<div style="left:759px;top:48px;width:1px;height:18px;background:#ffffff;"></div>
<svg style="left:765px;top:49px" width="15" height="15" viewBox="0 0 15 15" shape-rendering="crispEdges" ><rect x="10" y="0" width="1" height="1" fill="#808080"/><rect x="10" y="1" width="2" height="1" fill="#808080"/><rect x="2" y="2" width="11" height="1" fill="#808080"/><rect x="2" y="3" width="12" height="1" fill="#808080"/><rect x="2" y="4" width="11" height="1" fill="#808080"/><rect x="13" y="4" width="2" height="1" fill="#fff"/><rect x="3" y="5" width="2" height="1" fill="#fff"/><rect x="5" y="5" width="1" height="1" fill="#808080"/><rect x="6" y="5" width="4" height="1" fill="#fff"/><rect x="10" y="5" width="2" height="1" fill="#808080"/><rect x="12" y="5" width="2" height="1" fill="#fff"/><rect x="4" y="6" width="2" height="1" fill="#808080"/><rect x="6" y="6" width="1" height="1" fill="#fff"/><rect x="10" y="6" width="1" height="1" fill="#808080"/><rect x="11" y="6" width="2" height="1" fill="#fff"/><rect x="3" y="7" width="11" height="1" fill="#808080"/><rect x="2" y="8" width="12" height="1" fill="#808080"/><rect x="14" y="8" width="1" height="1" fill="#fff"/><rect x="3" y="9" width="11" height="1" fill="#808080"/><rect x="14" y="9" width="1" height="1" fill="#fff"/><rect x="4" y="10" width="2" height="1" fill="#808080"/><rect x="6" y="10" width="9" height="1" fill="#fff"/><rect x="5" y="11" width="1" height="1" fill="#808080"/><rect x="6" y="11" width="1" height="1" fill="#fff"/><rect x="2" y="12" width="12" height="1" fill="#808080"/><rect x="2" y="13" width="12" height="1" fill="#808080"/><rect x="14" y="13" width="1" height="1" fill="#fff"/><rect x="3" y="14" width="12" height="1" fill="#fff"/></svg>
<svg style="left:788px;top:49px" width="15" height="16" viewBox="0 0 15 16" shape-rendering="crispEdges" ><rect x="2" y="0" width="9" height="1" fill="#808080"/><rect x="2" y="1" width="1" height="1" fill="#808080"/><rect x="3" y="1" width="7" height="1" fill="#fff"/><rect x="10" y="1" width="2" height="1" fill="#808080"/><rect x="2" y="2" width="1" height="1" fill="#808080"/><rect x="3" y="2" width="1" height="1" fill="#fff"/><rect x="10" y="2" width="1" height="1" fill="#808080"/><rect x="11" y="2" width="1" height="1" fill="#fff"/><rect x="12" y="2" width="1" height="1" fill="#808080"/><rect x="2" y="3" width="1" height="1" fill="#808080"/><rect x="3" y="3" width="1" height="1" fill="#fff"/><rect x="5" y="3" width="9" height="1" fill="#808080"/><rect x="2" y="4" width="1" height="1" fill="#808080"/><rect x="3" y="4" width="1" height="1" fill="#fff"/><rect x="6" y="4" width="7" height="1" fill="#fff"/><rect x="13" y="4" width="1" height="1" fill="#808080"/><rect x="14" y="4" width="1" height="1" fill="#fff"/><rect x="2" y="5" width="1" height="1" fill="#808080"/><rect x="3" y="5" width="1" height="1" fill="#fff"/><rect x="5" y="5" width="4" height="1" fill="#808080"/><rect x="13" y="5" width="1" height="1" fill="#808080"/><rect x="14" y="5" width="1" height="1" fill="#fff"/><rect x="2" y="6" width="1" height="1" fill="#808080"/><rect x="3" y="6" width="1" height="1" fill="#fff"/><rect x="6" y="6" width="4" height="1" fill="#fff"/><rect x="13" y="6" width="1" height="1" fill="#808080"/><rect x="14" y="6" width="1" height="1" fill="#fff"/><rect x="2" y="7" width="1" height="1" fill="#808080"/><rect x="3" y="7" width="1" height="1" fill="#fff"/><rect x="5" y="7" width="5" height="1" fill="#808080"/><rect x="13" y="7" width="1" height="1" fill="#808080"/><rect x="14" y="7" width="1" height="1" fill="#fff"/><rect x="2" y="8" width="1" height="1" fill="#808080"/><rect x="3" y="8" width="1" height="1" fill="#fff"/><rect x="6" y="8" width="5" height="1" fill="#fff"/><rect x="13" y="8" width="1" height="1" fill="#808080"/><rect x="14" y="8" width="1" height="1" fill="#fff"/><rect x="2" y="9" width="1" height="1" fill="#808080"/><rect x="3" y="9" width="1" height="1" fill="#fff"/><rect x="5" y="9" width="4" height="1" fill="#808080"/><rect x="13" y="9" width="1" height="1" fill="#808080"/><rect x="14" y="9" width="1" height="1" fill="#fff"/><rect x="2" y="10" width="1" height="1" fill="#808080"/><rect x="3" y="10" width="1" height="1" fill="#fff"/><rect x="6" y="10" width="4" height="1" fill="#fff"/><rect x="13" y="10" width="1" height="1" fill="#808080"/><rect x="14" y="10" width="1" height="1" fill="#fff"/><rect x="2" y="11" width="1" height="1" fill="#808080"/><rect x="3" y="11" width="1" height="1" fill="#fff"/><rect x="5" y="11" width="5" height="1" fill="#808080"/><rect x="13" y="11" width="1" height="1" fill="#808080"/><rect x="14" y="11" width="1" height="1" fill="#fff"/><rect x="2" y="12" width="1" height="1" fill="#808080"/><rect x="3" y="12" width="1" height="1" fill="#fff"/><rect x="6" y="12" width="5" height="1" fill="#fff"/><rect x="13" y="12" width="1" height="1" fill="#808080"/><rect x="14" y="12" width="1" height="1" fill="#fff"/><rect x="2" y="13" width="1" height="1" fill="#808080"/><rect x="3" y="13" width="1" height="1" fill="#fff"/><rect x="13" y="13" width="1" height="1" fill="#808080"/><rect x="14" y="13" width="1" height="1" fill="#fff"/><rect x="2" y="14" width="12" height="1" fill="#808080"/><rect x="14" y="14" width="1" height="1" fill="#fff"/><rect x="3" y="15" width="12" height="1" fill="#fff"/></svg>
<svg style="left:811px;top:49px" width="15" height="16" viewBox="0 0 15 16" shape-rendering="crispEdges" ><rect x="2" y="0" width="9" height="1" fill="#808080"/><rect x="2" y="1" width="1" height="1" fill="#808080"/><rect x="3" y="1" width="7" height="1" fill="#fff"/><rect x="10" y="1" width="2" height="1" fill="#808080"/><rect x="2" y="2" width="1" height="1" fill="#808080"/><rect x="3" y="2" width="1" height="1" fill="#fff"/><rect x="10" y="2" width="1" height="1" fill="#808080"/><rect x="11" y="2" width="1" height="1" fill="#fff"/><rect x="12" y="2" width="1" height="1" fill="#808080"/><rect x="2" y="3" width="1" height="1" fill="#808080"/><rect x="3" y="3" width="1" height="1" fill="#fff"/><rect x="6" y="3" width="8" height="1" fill="#808080"/><rect x="2" y="4" width="1" height="1" fill="#808080"/><rect x="3" y="4" width="1" height="1" fill="#fff"/><rect x="5" y="4" width="2" height="1" fill="#808080"/><rect x="7" y="4" width="2" height="1" fill="#fff"/><rect x="9" y="4" width="2" height="1" fill="#808080"/><rect x="11" y="4" width="2" height="1" fill="#fff"/><rect x="13" y="4" width="1" height="1" fill="#808080"/><rect x="14" y="4" width="1" height="1" fill="#fff"/><rect x="2" y="5" width="1" height="1" fill="#808080"/><rect x="3" y="5" width="1" height="1" fill="#fff"/><rect x="5" y="5" width="2" height="1" fill="#808080"/><rect x="7" y="5" width="1" height="1" fill="#fff"/><rect x="9" y="5" width="2" height="1" fill="#808080"/><rect x="11" y="5" width="1" height="1" fill="#fff"/><rect x="13" y="5" width="1" height="1" fill="#808080"/><rect x="14" y="5" width="1" height="1" fill="#fff"/><rect x="2" y="6" width="1" height="1" fill="#808080"/><rect x="3" y="6" width="1" height="1" fill="#fff"/><rect x="6" y="6" width="2" height="1" fill="#fff"/><rect x="8" y="6" width="3" height="1" fill="#808080"/><rect x="11" y="6" width="1" height="1" fill="#fff"/><rect x="13" y="6" width="1" height="1" fill="#808080"/><rect x="14" y="6" width="1" height="1" fill="#fff"/><rect x="2" y="7" width="1" height="1" fill="#808080"/><rect x="3" y="7" width="1" height="1" fill="#fff"/><rect x="7" y="7" width="3" height="1" fill="#808080"/><rect x="10" y="7" width="2" height="1" fill="#fff"/><rect x="13" y="7" width="1" height="1" fill="#808080"/><rect x="14" y="7" width="1" height="1" fill="#fff"/><rect x="2" y="8" width="1" height="1" fill="#808080"/><rect x="3" y="8" width="1" height="1" fill="#fff"/><rect x="7" y="8" width="2" height="1" fill="#808080"/><rect x="9" y="8" width="2" height="1" fill="#fff"/><rect x="13" y="8" width="1" height="1" fill="#808080"/><rect x="14" y="8" width="1" height="1" fill="#fff"/><rect x="2" y="9" width="1" height="1" fill="#808080"/><rect x="3" y="9" width="1" height="1" fill="#fff"/><rect x="7" y="9" width="2" height="1" fill="#808080"/><rect x="9" y="9" width="1" height="1" fill="#fff"/><rect x="13" y="9" width="1" height="1" fill="#808080"/><rect x="14" y="9" width="1" height="1" fill="#fff"/><rect x="2" y="10" width="1" height="1" fill="#808080"/><rect x="3" y="10" width="1" height="1" fill="#fff"/><rect x="8" y="10" width="2" height="1" fill="#fff"/><rect x="13" y="10" width="1" height="1" fill="#808080"/><rect x="14" y="10" width="1" height="1" fill="#fff"/><rect x="2" y="11" width="1" height="1" fill="#808080"/><rect x="3" y="11" width="1" height="1" fill="#fff"/><rect x="7" y="11" width="2" height="1" fill="#808080"/><rect x="13" y="11" width="1" height="1" fill="#808080"/><rect x="14" y="11" width="1" height="1" fill="#fff"/><rect x="2" y="12" width="1" height="1" fill="#808080"/><rect x="3" y="12" width="1" height="1" fill="#fff"/><rect x="7" y="12" width="2" height="1" fill="#808080"/><rect x="9" y="12" width="1" height="1" fill="#fff"/><rect x="13" y="12" width="1" height="1" fill="#808080"/><rect x="14" y="12" width="1" height="1" fill="#fff"/><rect x="2" y="13" width="1" height="1" fill="#808080"/><rect x="3" y="13" width="1" height="1" fill="#fff"/><rect x="8" y="13" width="2" height="1" fill="#fff"/><rect x="13" y="13" width="1" height="1" fill="#808080"/><rect x="14" y="13" width="1" height="1" fill="#fff"/><rect x="2" y="14" width="12" height="1" fill="#808080"/><rect x="14" y="14" width="1" height="1" fill="#fff"/><rect x="3" y="15" width="12" height="1" fill="#fff"/></svg>
<div style="left:833px;top:48px;width:1px;height:18px;background:#808080;"></div>
<div style="left:834px;top:48px;width:1px;height:18px;background:#ffffff;"></div>
<svg style="left:840px;top:49px" width="15" height="13" viewBox="0 0 15 13" shape-rendering="crispEdges" ><rect x="0" y="2" width="7" height="1" fill="#808080"/><rect x="11" y="2" width="1" height="1" fill="#808080"/><rect x="0" y="3" width="7" height="1" fill="#808080"/><rect x="7" y="3" width="1" height="1" fill="#fff"/><rect x="10" y="3" width="3" height="1" fill="#808080"/><rect x="0" y="4" width="7" height="1" fill="#808080"/><rect x="7" y="4" width="1" height="1" fill="#fff"/><rect x="9" y="4" width="5" height="1" fill="#808080"/><rect x="0" y="5" width="10" height="1" fill="#808080"/><rect x="10" y="5" width="1" height="1" fill="#fff"/><rect x="11" y="5" width="1" height="1" fill="#808080"/><rect x="12" y="5" width="3" height="1" fill="#fff"/><rect x="0" y="6" width="7" height="1" fill="#808080"/><rect x="7" y="6" width="2" height="1" fill="#fff"/><rect x="9" y="6" width="1" height="1" fill="#808080"/><rect x="10" y="6" width="1" height="1" fill="#fff"/><rect x="12" y="6" width="1" height="1" fill="#fff"/><rect x="0" y="7" width="7" height="1" fill="#808080"/><rect x="7" y="7" width="1" height="1" fill="#fff"/><rect x="9" y="7" width="1" height="1" fill="#808080"/><rect x="10" y="7" width="1" height="1" fill="#fff"/><rect x="11" y="7" width="1" height="1" fill="#808080"/><rect x="0" y="8" width="7" height="1" fill="#808080"/><rect x="7" y="8" width="1" height="1" fill="#fff"/><rect x="9" y="8" width="4" height="1" fill="#808080"/><rect x="1" y="9" width="7" height="1" fill="#fff"/><rect x="9" y="9" width="5" height="1" fill="#808080"/><rect x="10" y="10" width="3" height="1" fill="#808080"/><rect x="13" y="10" width="2" height="1" fill="#fff"/><rect x="11" y="11" width="1" height="1" fill="#808080"/><rect x="12" y="11" width="2" height="1" fill="#fff"/><rect x="12" y="12" width="1" height="1" fill="#fff"/></svg>
<div style="left:862px;top:48px;width:1px;height:18px;background:#808080;"></div>
<div style="left:863px;top:48px;width:1px;height:18px;background:#ffffff;"></div>
<svg style="left:869px;top:49px" width="16" height="16" viewBox="0 0 16 16" shape-rendering="crispEdges" ><rect x="5" y="0" width="4" height="1" fill="#808080"/><rect x="3" y="1" width="2" height="1" fill="#808080"/><rect x="6" y="1" width="1" height="1" fill="#808080"/><rect x="7" y="1" width="2" height="1" fill="#fff"/><rect x="9" y="1" width="3" height="1" fill="#808080"/><rect x="2" y="2" width="1" height="1" fill="#808080"/><rect x="4" y="2" width="1" height="1" fill="#fff"/><rect x="5" y="2" width="1" height="1" fill="#808080"/><rect x="7" y="2" width="2" height="1" fill="#808080"/><rect x="10" y="2" width="2" height="1" fill="#fff"/><rect x="12" y="2" width="2" height="1" fill="#808080"/><rect x="1" y="3" width="1" height="1" fill="#808080"/><rect x="3" y="3" width="2" height="1" fill="#808080"/><rect x="6" y="3" width="1" height="1" fill="#808080"/><rect x="8" y="3" width="1" height="1" fill="#fff"/><rect x="9" y="3" width="6" height="1" fill="#808080"/><rect x="1" y="4" width="1" height="1" fill="#808080"/><rect x="2" y="4" width="1" height="1" fill="#fff"/><rect x="3" y="4" width="1" height="1" fill="#808080"/><rect x="4" y="4" width="1" height="1" fill="#fff"/><rect x="5" y="4" width="2" height="1" fill="#808080"/><rect x="7" y="4" width="1" height="1" fill="#fff"/><rect x="8" y="4" width="1" height="1" fill="#808080"/><rect x="10" y="4" width="5" height="1" fill="#808080"/><rect x="15" y="4" width="1" height="1" fill="#fff"/><rect x="1" y="5" width="2" height="1" fill="#808080"/><rect x="4" y="5" width="1" height="1" fill="#808080"/><rect x="6" y="5" width="1" height="1" fill="#fff"/><rect x="7" y="5" width="1" height="1" fill="#808080"/><rect x="9" y="5" width="6" height="1" fill="#808080"/><rect x="15" y="5" width="1" height="1" fill="#fff"/><rect x="2" y="6" width="1" height="1" fill="#808080"/><rect x="3" y="6" width="1" height="1" fill="#fff"/><rect x="4" y="6" width="1" height="1" fill="#808080"/><rect x="5" y="6" width="1" height="1" fill="#fff"/><rect x="6" y="6" width="4" height="1" fill="#808080"/><rect x="10" y="6" width="1" height="1" fill="#fff"/><rect x="11" y="6" width="4" height="1" fill="#808080"/><rect x="15" y="6" width="1" height="1" fill="#fff"/><rect x="2" y="7" width="2" height="1" fill="#808080"/><rect x="5" y="7" width="2" height="1" fill="#808080"/><rect x="7" y="7" width="1" height="1" fill="#fff"/><rect x="8" y="7" width="1" height="1" fill="#808080"/><rect x="9" y="7" width="2" height="1" fill="#fff"/><rect x="11" y="7" width="4" height="1" fill="#808080"/><rect x="15" y="7" width="1" height="1" fill="#fff"/><rect x="2" y="8" width="1" height="1" fill="#808080"/><rect x="3" y="8" width="1" height="1" fill="#fff"/><rect x="4" y="8" width="1" height="1" fill="#808080"/><rect x="6" y="8" width="3" height="1" fill="#808080"/><rect x="9" y="8" width="1" height="1" fill="#fff"/><rect x="10" y="8" width="4" height="1" fill="#808080"/><rect x="14" y="8" width="2" height="1" fill="#fff"/><rect x="2" y="9" width="2" height="1" fill="#808080"/><rect x="5" y="9" width="1" height="1" fill="#808080"/><rect x="7" y="9" width="1" height="1" fill="#808080"/><rect x="8" y="9" width="1" height="1" fill="#fff"/><rect x="9" y="9" width="5" height="1" fill="#808080"/><rect x="14" y="9" width="1" height="1" fill="#fff"/><rect x="3" y="10" width="1" height="1" fill="#808080"/><rect x="4" y="10" width="1" height="1" fill="#fff"/><rect x="5" y="10" width="2" height="1" fill="#808080"/><rect x="8" y="10" width="1" height="1" fill="#808080"/><rect x="10" y="10" width="4" height="1" fill="#808080"/><rect x="14" y="10" width="1" height="1" fill="#fff"/><rect x="3" y="11" width="2" height="1" fill="#808080"/><rect x="6" y="11" width="1" height="1" fill="#808080"/><rect x="7" y="11" width="1" height="1" fill="#fff"/><rect x="8" y="11" width="6" height="1" fill="#808080"/><rect x="14" y="11" width="1" height="1" fill="#fff"/><rect x="4" y="12" width="1" height="1" fill="#808080"/><rect x="5" y="12" width="1" height="1" fill="#fff"/><rect x="6" y="12" width="2" height="1" fill="#808080"/><rect x="9" y="12" width="4" height="1" fill="#808080"/><rect x="13" y="12" width="2" height="1" fill="#fff"/><rect x="4" y="13" width="3" height="1" fill="#808080"/><rect x="7" y="13" width="1" height="1" fill="#fff"/><rect x="8" y="13" width="4" height="1" fill="#808080"/><rect x="12" y="13" width="2" height="1" fill="#fff"/><rect x="5" y="14" width="6" height="1" fill="#808080"/><rect x="11" y="14" width="2" height="1" fill="#fff"/><rect x="6" y="15" width="6" height="1" fill="#fff"/></svg>
<div style="left:889px;top:44px;width:1px;height:27px;background:#808080;"></div>
<div style="left:890px;top:44px;width:1px;height:27px;background:#ffffff;"></div>
<div style="left:6px;top:74px;width:3px;height:1px;background:#ffffff;"></div>
<div style="left:6px;top:74px;width:1px;height:22px;background:#ffffff;"></div>
<div style="left:6px;top:95px;width:3px;height:1px;background:#808080;"></div>
<div style="left:8px;top:74px;width:1px;height:22px;background:#808080;"></div>
<svg style="left:14px;top:77px" width="17" height="11" viewBox="0 0 17 11" shape-rendering="crispEdges" ><rect x="2" y="4" width="4" height="1" fill="#808080"/><rect x="1" y="5" width="6" height="1" fill="#808080"/><rect x="1" y="6" width="2" height="1" fill="#808080"/><rect x="3" y="6" width="2" height="1" fill="#fff"/><rect x="5" y="6" width="11" height="1" fill="#808080"/><rect x="1" y="7" width="2" height="1" fill="#808080"/><rect x="3" y="7" width="1" height="1" fill="#fff"/><rect x="5" y="7" width="11" height="1" fill="#808080"/><rect x="16" y="7" width="1" height="1" fill="#fff"/><rect x="1" y="8" width="6" height="1" fill="#808080"/><rect x="7" y="8" width="3" height="1" fill="#fff"/><rect x="10" y="8" width="2" height="1" fill="#808080"/><rect x="12" y="8" width="1" height="1" fill="#fff"/><rect x="13" y="8" width="2" height="1" fill="#808080"/><rect x="15" y="8" width="2" height="1" fill="#fff"/><rect x="2" y="9" width="4" height="1" fill="#808080"/><rect x="6" y="9" width="2" height="1" fill="#fff"/><rect x="10" y="9" width="2" height="1" fill="#808080"/><rect x="12" y="9" width="1" height="1" fill="#fff"/><rect x="13" y="9" width="2" height="1" fill="#808080"/><rect x="15" y="9" width="1" height="1" fill="#fff"/><rect x="3" y="10" width="4" height="1" fill="#fff"/><rect x="11" y="10" width="2" height="1" fill="#fff"/><rect x="14" y="10" width="2" height="1" fill="#fff"/></svg>
<svg style="left:37px;top:77px" width="17" height="15" viewBox="0 0 17 15" shape-rendering="crispEdges" ><rect x="6" y="1" width="1" height="1" fill="#808080"/><rect x="9" y="1" width="1" height="1" fill="#808080"/><rect x="6" y="2" width="1" height="1" fill="#808080"/><rect x="7" y="2" width="1" height="1" fill="#fff"/><rect x="9" y="2" width="1" height="1" fill="#808080"/><rect x="10" y="2" width="1" height="1" fill="#fff"/><rect x="6" y="3" width="1" height="1" fill="#808080"/><rect x="7" y="3" width="1" height="1" fill="#fff"/><rect x="9" y="3" width="1" height="1" fill="#808080"/><rect x="10" y="3" width="1" height="1" fill="#fff"/><rect x="2" y="4" width="4" height="1" fill="#808080"/><rect x="7" y="4" width="1" height="1" fill="#fff"/><rect x="9" y="4" width="1" height="1" fill="#808080"/><rect x="10" y="4" width="1" height="1" fill="#fff"/><rect x="1" y="5" width="6" height="1" fill="#808080"/><rect x="9" y="5" width="1" height="1" fill="#808080"/><rect x="10" y="5" width="1" height="1" fill="#fff"/><rect x="1" y="6" width="2" height="1" fill="#808080"/><rect x="3" y="6" width="2" height="1" fill="#fff"/><rect x="5" y="6" width="2" height="1" fill="#808080"/><rect x="7" y="6" width="1" height="1" fill="#fff"/><rect x="9" y="6" width="7" height="1" fill="#808080"/><rect x="1" y="7" width="2" height="1" fill="#808080"/><rect x="3" y="7" width="1" height="1" fill="#fff"/><rect x="5" y="7" width="2" height="1" fill="#808080"/><rect x="7" y="7" width="1" height="1" fill="#fff"/><rect x="9" y="7" width="7" height="1" fill="#808080"/><rect x="16" y="7" width="1" height="1" fill="#fff"/><rect x="1" y="8" width="6" height="1" fill="#808080"/><rect x="7" y="8" width="1" height="1" fill="#fff"/><rect x="9" y="8" width="2" height="1" fill="#808080"/><rect x="11" y="8" width="1" height="1" fill="#fff"/><rect x="12" y="8" width="1" height="1" fill="#808080"/><rect x="13" y="8" width="1" height="1" fill="#fff"/><rect x="14" y="8" width="2" height="1" fill="#808080"/><rect x="16" y="8" width="1" height="1" fill="#fff"/><rect x="2" y="9" width="4" height="1" fill="#808080"/><rect x="6" y="9" width="2" height="1" fill="#fff"/><rect x="9" y="9" width="2" height="1" fill="#808080"/><rect x="11" y="9" width="1" height="1" fill="#fff"/><rect x="12" y="9" width="1" height="1" fill="#808080"/><rect x="13" y="9" width="1" height="1" fill="#fff"/><rect x="14" y="9" width="2" height="1" fill="#808080"/><rect x="16" y="9" width="1" height="1" fill="#fff"/><rect x="3" y="10" width="3" height="1" fill="#fff"/><rect x="6" y="10" width="1" height="1" fill="#808080"/><rect x="9" y="10" width="1" height="1" fill="#808080"/><rect x="10" y="10" width="2" height="1" fill="#fff"/><rect x="13" y="10" width="1" height="1" fill="#fff"/><rect x="15" y="10" width="2" height="1" fill="#fff"/><rect x="6" y="11" width="1" height="1" fill="#808080"/><rect x="7" y="11" width="1" height="1" fill="#fff"/><rect x="9" y="11" width="1" height="1" fill="#808080"/><rect x="10" y="11" width="1" height="1" fill="#fff"/><rect x="6" y="12" width="1" height="1" fill="#808080"/><rect x="7" y="12" width="1" height="1" fill="#fff"/><rect x="9" y="12" width="1" height="1" fill="#808080"/><rect x="10" y="12" width="1" height="1" fill="#fff"/><rect x="6" y="13" width="1" height="1" fill="#808080"/><rect x="7" y="13" width="1" height="1" fill="#fff"/><rect x="9" y="13" width="1" height="1" fill="#808080"/><rect x="10" y="13" width="1" height="1" fill="#fff"/><rect x="7" y="14" width="1" height="1" fill="#fff"/><rect x="10" y="14" width="1" height="1" fill="#fff"/></svg>
<div style="left:59px;top:76px;width:1px;height:18px;background:#808080;"></div>
<div style="left:60px;top:76px;width:1px;height:18px;background:#ffffff;"></div>
<svg style="left:66px;top:77px" width="17" height="15" viewBox="0 0 17 15" shape-rendering="crispEdges" ><rect x="0" y="2" width="3" height="1" fill="#808080"/><rect x="13" y="2" width="3" height="1" fill="#808080"/><rect x="0" y="3" width="1" height="1" fill="#808080"/><rect x="1" y="3" width="1" height="1" fill="#fff"/><rect x="2" y="3" width="3" height="1" fill="#808080"/><rect x="11" y="3" width="3" height="1" fill="#808080"/><rect x="14" y="3" width="1" height="1" fill="#fff"/><rect x="15" y="3" width="1" height="1" fill="#808080"/><rect x="16" y="3" width="1" height="1" fill="#fff"/><rect x="1" y="4" width="1" height="1" fill="#fff"/><rect x="2" y="4" width="6" height="1" fill="#808080"/><rect x="9" y="4" width="6" height="1" fill="#808080"/><rect x="16" y="4" width="1" height="1" fill="#fff"/><rect x="1" y="5" width="3" height="1" fill="#808080"/><rect x="4" y="5" width="2" height="1" fill="#fff"/><rect x="6" y="5" width="4" height="1" fill="#808080"/><rect x="10" y="5" width="3" height="1" fill="#fff"/><rect x="13" y="5" width="3" height="1" fill="#808080"/><rect x="1" y="6" width="2" height="1" fill="#808080"/><rect x="3" y="6" width="2" height="1" fill="#fff"/><rect x="7" y="6" width="2" height="1" fill="#808080"/><rect x="9" y="6" width="2" height="1" fill="#fff"/><rect x="14" y="6" width="2" height="1" fill="#808080"/><rect x="16" y="6" width="1" height="1" fill="#fff"/><rect x="1" y="7" width="2" height="1" fill="#808080"/><rect x="3" y="7" width="1" height="1" fill="#fff"/><rect x="4" y="7" width="2" height="1" fill="#808080"/><rect x="7" y="7" width="2" height="1" fill="#808080"/><rect x="9" y="7" width="1" height="1" fill="#fff"/><rect x="10" y="7" width="2" height="1" fill="#808080"/><rect x="14" y="7" width="2" height="1" fill="#808080"/><rect x="16" y="7" width="1" height="1" fill="#fff"/><rect x="1" y="8" width="2" height="1" fill="#808080"/><rect x="3" y="8" width="1" height="1" fill="#fff"/><rect x="4" y="8" width="2" height="1" fill="#808080"/><rect x="6" y="8" width="1" height="1" fill="#fff"/><rect x="7" y="8" width="2" height="1" fill="#808080"/><rect x="9" y="8" width="1" height="1" fill="#fff"/><rect x="10" y="8" width="2" height="1" fill="#808080"/><rect x="12" y="8" width="1" height="1" fill="#fff"/><rect x="14" y="8" width="2" height="1" fill="#808080"/><rect x="16" y="8" width="1" height="1" fill="#fff"/><rect x="1" y="9" width="2" height="1" fill="#808080"/><rect x="3" y="9" width="1" height="1" fill="#fff"/><rect x="5" y="9" width="2" height="1" fill="#fff"/><rect x="7" y="9" width="2" height="1" fill="#808080"/><rect x="9" y="9" width="1" height="1" fill="#fff"/><rect x="11" y="9" width="2" height="1" fill="#fff"/><rect x="14" y="9" width="2" height="1" fill="#808080"/><rect x="16" y="9" width="1" height="1" fill="#fff"/><rect x="1" y="10" width="3" height="1" fill="#808080"/><rect x="6" y="10" width="4" height="1" fill="#808080"/><rect x="13" y="10" width="3" height="1" fill="#808080"/><rect x="16" y="10" width="1" height="1" fill="#fff"/><rect x="2" y="11" width="4" height="1" fill="#808080"/><rect x="7" y="11" width="2" height="1" fill="#fff"/><rect x="9" y="11" width="5" height="1" fill="#808080"/><rect x="14" y="11" width="3" height="1" fill="#fff"/><rect x="3" y="12" width="4" height="1" fill="#fff"/><rect x="10" y="12" width="5" height="1" fill="#fff"/><rect x="5" y="13" width="5" height="1" fill="#808080"/><rect x="6" y="14" width="5" height="1" fill="#fff"/></svg>
<svg style="left:89px;top:77px" width="18" height="12" viewBox="0 0 18 12" shape-rendering="crispEdges" ><rect x="0" y="2" width="3" height="1" fill="#808080"/><rect x="13" y="2" width="3" height="1" fill="#808080"/><rect x="0" y="3" width="1" height="1" fill="#808080"/><rect x="1" y="3" width="1" height="1" fill="#fff"/><rect x="2" y="3" width="3" height="1" fill="#808080"/><rect x="11" y="3" width="3" height="1" fill="#808080"/><rect x="14" y="3" width="1" height="1" fill="#fff"/><rect x="15" y="3" width="1" height="1" fill="#808080"/><rect x="16" y="3" width="1" height="1" fill="#fff"/><rect x="1" y="4" width="1" height="1" fill="#fff"/><rect x="3" y="4" width="3" height="1" fill="#808080"/><rect x="12" y="4" width="1" height="1" fill="#fff"/><rect x="13" y="4" width="3" height="1" fill="#808080"/><rect x="16" y="4" width="1" height="1" fill="#fff"/><rect x="2" y="5" width="3" height="1" fill="#808080"/><rect x="5" y="5" width="2" height="1" fill="#fff"/><rect x="14" y="5" width="2" height="1" fill="#808080"/><rect x="16" y="5" width="1" height="1" fill="#fff"/><rect x="2" y="6" width="2" height="1" fill="#808080"/><rect x="4" y="6" width="2" height="1" fill="#fff"/><rect x="15" y="6" width="2" height="1" fill="#808080"/><rect x="2" y="7" width="1" height="1" fill="#808080"/><rect x="3" y="7" width="2" height="1" fill="#fff"/><rect x="7" y="7" width="2" height="1" fill="#808080"/><rect x="15" y="7" width="1" height="1" fill="#808080"/><rect x="16" y="7" width="2" height="1" fill="#fff"/><rect x="1" y="8" width="1" height="1" fill="#808080"/><rect x="3" y="8" width="1" height="1" fill="#fff"/><rect x="6" y="8" width="4" height="1" fill="#808080"/><rect x="14" y="8" width="1" height="1" fill="#808080"/><rect x="16" y="8" width="1" height="1" fill="#fff"/><rect x="2" y="9" width="1" height="1" fill="#fff"/><rect x="5" y="9" width="2" height="1" fill="#808080"/><rect x="7" y="9" width="2" height="1" fill="#fff"/><rect x="9" y="9" width="2" height="1" fill="#808080"/><rect x="15" y="9" width="1" height="1" fill="#fff"/><rect x="4" y="10" width="2" height="1" fill="#808080"/><rect x="6" y="10" width="2" height="1" fill="#fff"/><rect x="10" y="10" width="2" height="1" fill="#808080"/><rect x="5" y="11" width="2" height="1" fill="#fff"/><rect x="11" y="11" width="2" height="1" fill="#fff"/></svg>
<div style="left:111px;top:76px;width:1px;height:18px;background:#808080;"></div>
<div style="left:112px;top:76px;width:1px;height:18px;background:#ffffff;"></div>
<svg style="left:118px;top:77px" width="14" height="15" viewBox="0 0 14 15" shape-rendering="crispEdges" ><rect x="9" y="1" width="3" height="1" fill="#808080"/><rect x="8" y="2" width="5" height="1" fill="#808080"/><rect x="8" y="3" width="5" height="1" fill="#808080"/><rect x="13" y="3" width="1" height="1" fill="#fff"/><rect x="7" y="4" width="5" height="1" fill="#808080"/><rect x="12" y="4" width="2" height="1" fill="#fff"/><rect x="7" y="5" width="4" height="1" fill="#808080"/><rect x="11" y="5" width="2" height="1" fill="#fff"/><rect x="6" y="6" width="5" height="1" fill="#808080"/><rect x="11" y="6" width="1" height="1" fill="#fff"/><rect x="6" y="7" width="2" height="1" fill="#808080"/><rect x="8" y="7" width="1" height="1" fill="#fff"/><rect x="9" y="7" width="1" height="1" fill="#808080"/><rect x="10" y="7" width="2" height="1" fill="#fff"/><rect x="5" y="8" width="5" height="1" fill="#808080"/><rect x="10" y="8" width="1" height="1" fill="#fff"/><rect x="5" y="9" width="4" height="1" fill="#808080"/><rect x="9" y="9" width="2" height="1" fill="#fff"/><rect x="4" y="10" width="4" height="1" fill="#808080"/><rect x="8" y="10" width="2" height="1" fill="#fff"/><rect x="4" y="11" width="3" height="1" fill="#808080"/><rect x="7" y="11" width="2" height="1" fill="#fff"/><rect x="3" y="12" width="3" height="1" fill="#808080"/><rect x="6" y="12" width="2" height="1" fill="#fff"/><rect x="1" y="13" width="4" height="1" fill="#808080"/><rect x="5" y="13" width="2" height="1" fill="#fff"/><rect x="2" y="14" width="4" height="1" fill="#fff"/></svg>
<svg style="left:141px;top:77px" width="17" height="12" viewBox="0 0 17 12" shape-rendering="crispEdges" ><rect x="7" y="2" width="9" height="1" fill="#808080"/><rect x="6" y="3" width="1" height="1" fill="#808080"/><rect x="8" y="3" width="5" height="1" fill="#fff"/><rect x="13" y="3" width="3" height="1" fill="#808080"/><rect x="16" y="3" width="1" height="1" fill="#fff"/><rect x="5" y="4" width="1" height="1" fill="#808080"/><rect x="7" y="4" width="1" height="1" fill="#fff"/><rect x="12" y="4" width="4" height="1" fill="#808080"/><rect x="16" y="4" width="1" height="1" fill="#fff"/><rect x="4" y="5" width="1" height="1" fill="#808080"/><rect x="6" y="5" width="1" height="1" fill="#fff"/><rect x="11" y="5" width="4" height="1" fill="#808080"/><rect x="15" y="5" width="2" height="1" fill="#fff"/><rect x="3" y="6" width="1" height="1" fill="#808080"/><rect x="5" y="6" width="1" height="1" fill="#fff"/><rect x="10" y="6" width="4" height="1" fill="#808080"/><rect x="14" y="6" width="2" height="1" fill="#fff"/><rect x="2" y="7" width="1" height="1" fill="#808080"/><rect x="4" y="7" width="1" height="1" fill="#fff"/><rect x="9" y="7" width="4" height="1" fill="#808080"/><rect x="13" y="7" width="2" height="1" fill="#fff"/><rect x="1" y="8" width="1" height="1" fill="#808080"/><rect x="3" y="8" width="1" height="1" fill="#fff"/><rect x="8" y="8" width="4" height="1" fill="#808080"/><rect x="12" y="8" width="2" height="1" fill="#fff"/><rect x="1" y="9" width="10" height="1" fill="#808080"/><rect x="11" y="9" width="2" height="1" fill="#fff"/><rect x="1" y="10" width="9" height="1" fill="#808080"/><rect x="10" y="10" width="2" height="1" fill="#fff"/><rect x="2" y="11" width="9" height="1" fill="#fff"/></svg>
<div style="left:163px;top:76px;width:1px;height:18px;background:#808080;"></div>
<div style="left:164px;top:76px;width:1px;height:18px;background:#ffffff;"></div>
<svg style="left:170px;top:77px" width="18" height="16" viewBox="0 0 18 16" shape-rendering="crispEdges" ><rect x="0" y="0" width="6" height="1" fill="#808080"/><rect x="1" y="1" width="6" height="1" fill="#fff"/><rect x="0" y="2" width="6" height="1" fill="#808080"/><rect x="1" y="3" width="6" height="1" fill="#fff"/><rect x="0" y="4" width="5" height="1" fill="#808080"/><rect x="10" y="4" width="1" height="1" fill="#808080"/><rect x="1" y="5" width="5" height="1" fill="#fff"/><rect x="8" y="5" width="3" height="1" fill="#808080"/><rect x="11" y="5" width="1" height="1" fill="#fff"/><rect x="0" y="6" width="13" height="1" fill="#808080"/><rect x="0" y="7" width="15" height="1" fill="#808080"/><rect x="1" y="8" width="1" height="1" fill="#fff"/><rect x="2" y="8" width="15" height="1" fill="#808080"/><rect x="2" y="9" width="14" height="1" fill="#808080"/><rect x="16" y="9" width="2" height="1" fill="#fff"/><rect x="3" y="10" width="11" height="1" fill="#808080"/><rect x="14" y="10" width="3" height="1" fill="#fff"/><rect x="2" y="11" width="6" height="1" fill="#808080"/><rect x="8" y="11" width="1" height="1" fill="#fff"/><rect x="9" y="11" width="5" height="1" fill="#808080"/><rect x="14" y="11" width="1" height="1" fill="#fff"/><rect x="1" y="12" width="2" height="1" fill="#808080"/><rect x="3" y="12" width="1" height="1" fill="#fff"/><rect x="4" y="12" width="4" height="1" fill="#808080"/><rect x="8" y="12" width="1" height="1" fill="#fff"/><rect x="10" y="12" width="3" height="1" fill="#808080"/><rect x="13" y="12" width="2" height="1" fill="#fff"/><rect x="0" y="13" width="2" height="1" fill="#808080"/><rect x="2" y="13" width="2" height="1" fill="#fff"/><rect x="4" y="13" width="3" height="1" fill="#808080"/><rect x="7" y="13" width="2" height="1" fill="#fff"/><rect x="11" y="13" width="3" height="1" fill="#fff"/><rect x="0" y="14" width="1" height="1" fill="#808080"/><rect x="1" y="14" width="2" height="1" fill="#fff"/><rect x="4" y="14" width="3" height="1" fill="#808080"/><rect x="7" y="14" width="1" height="1" fill="#fff"/><rect x="1" y="15" width="1" height="1" fill="#fff"/><rect x="5" y="15" width="3" height="1" fill="#fff"/></svg>
<div style="left:190px;top:72px;width:1px;height:26px;background:#808080;"></div>
<div style="left:191px;top:72px;width:1px;height:26px;background:#ffffff;"></div>
<div style="left:194px;top:74px;width:3px;height:1px;background:#ffffff;"></div>
<div style="left:194px;top:74px;width:1px;height:22px;background:#ffffff;"></div>
<div style="left:194px;top:95px;width:3px;height:1px;background:#808080;"></div>
<div style="left:196px;top:74px;width:1px;height:22px;background:#808080;"></div>
<svg style="left:202px;top:77px" width="15" height="16" viewBox="0 0 15 16" shape-rendering="crispEdges" ><rect x="2" y="0" width="9" height="1" fill="#808080"/><rect x="2" y="1" width="1" height="1" fill="#808080"/><rect x="3" y="1" width="7" height="1" fill="#fff"/><rect x="10" y="1" width="2" height="1" fill="#808080"/><rect x="2" y="2" width="1" height="1" fill="#808080"/><rect x="3" y="2" width="1" height="1" fill="#fff"/><rect x="10" y="2" width="1" height="1" fill="#808080"/><rect x="11" y="2" width="1" height="1" fill="#fff"/><rect x="12" y="2" width="1" height="1" fill="#808080"/><rect x="2" y="3" width="1" height="1" fill="#808080"/><rect x="3" y="3" width="1" height="1" fill="#fff"/><rect x="10" y="3" width="4" height="1" fill="#808080"/><rect x="2" y="4" width="1" height="1" fill="#808080"/><rect x="3" y="4" width="1" height="1" fill="#fff"/><rect x="4" y="4" width="10" height="1" fill="#808080"/><rect x="14" y="4" width="1" height="1" fill="#fff"/><rect x="2" y="5" width="1" height="1" fill="#808080"/><rect x="3" y="5" width="1" height="1" fill="#fff"/><rect x="4" y="5" width="1" height="1" fill="#808080"/><rect x="5" y="5" width="2" height="1" fill="#fff"/><rect x="7" y="5" width="3" height="1" fill="#808080"/><rect x="10" y="5" width="2" height="1" fill="#fff"/><rect x="12" y="5" width="2" height="1" fill="#808080"/><rect x="14" y="5" width="1" height="1" fill="#fff"/><rect x="2" y="6" width="1" height="1" fill="#808080"/><rect x="3" y="6" width="1" height="1" fill="#fff"/><rect x="4" y="6" width="1" height="1" fill="#808080"/><rect x="5" y="6" width="1" height="1" fill="#fff"/><rect x="7" y="6" width="3" height="1" fill="#808080"/><rect x="10" y="6" width="1" height="1" fill="#fff"/><rect x="12" y="6" width="2" height="1" fill="#808080"/><rect x="14" y="6" width="1" height="1" fill="#fff"/><rect x="2" y="7" width="1" height="1" fill="#808080"/><rect x="3" y="7" width="1" height="1" fill="#fff"/><rect x="5" y="7" width="1" height="1" fill="#fff"/><rect x="7" y="7" width="3" height="1" fill="#808080"/><rect x="10" y="7" width="1" height="1" fill="#fff"/><rect x="13" y="7" width="1" height="1" fill="#808080"/><rect x="14" y="7" width="1" height="1" fill="#fff"/><rect x="2" y="8" width="1" height="1" fill="#808080"/><rect x="3" y="8" width="1" height="1" fill="#fff"/><rect x="7" y="8" width="3" height="1" fill="#808080"/><rect x="10" y="8" width="1" height="1" fill="#fff"/><rect x="13" y="8" width="1" height="1" fill="#808080"/><rect x="14" y="8" width="1" height="1" fill="#fff"/><rect x="2" y="9" width="1" height="1" fill="#808080"/><rect x="3" y="9" width="1" height="1" fill="#fff"/><rect x="7" y="9" width="3" height="1" fill="#808080"/><rect x="10" y="9" width="1" height="1" fill="#fff"/><rect x="13" y="9" width="1" height="1" fill="#808080"/><rect x="14" y="9" width="1" height="1" fill="#fff"/><rect x="2" y="10" width="1" height="1" fill="#808080"/><rect x="3" y="10" width="1" height="1" fill="#fff"/><rect x="7" y="10" width="3" height="1" fill="#808080"/><rect x="10" y="10" width="1" height="1" fill="#fff"/><rect x="13" y="10" width="1" height="1" fill="#808080"/><rect x="14" y="10" width="1" height="1" fill="#fff"/><rect x="2" y="11" width="1" height="1" fill="#808080"/><rect x="3" y="11" width="1" height="1" fill="#fff"/><rect x="6" y="11" width="5" height="1" fill="#808080"/><rect x="13" y="11" width="1" height="1" fill="#808080"/><rect x="14" y="11" width="1" height="1" fill="#fff"/><rect x="2" y="12" width="1" height="1" fill="#808080"/><rect x="3" y="12" width="1" height="1" fill="#fff"/><rect x="7" y="12" width="5" height="1" fill="#fff"/><rect x="13" y="12" width="1" height="1" fill="#808080"/><rect x="14" y="12" width="1" height="1" fill="#fff"/><rect x="2" y="13" width="1" height="1" fill="#808080"/><rect x="3" y="13" width="1" height="1" fill="#fff"/><rect x="13" y="13" width="1" height="1" fill="#808080"/><rect x="14" y="13" width="1" height="1" fill="#fff"/><rect x="2" y="14" width="12" height="1" fill="#808080"/><rect x="14" y="14" width="1" height="1" fill="#fff"/><rect x="3" y="15" width="12" height="1" fill="#fff"/></svg>
<svg style="left:225px;top:77px" width="15" height="16" viewBox="0 0 15 16" shape-rendering="crispEdges" ><rect x="2" y="0" width="9" height="1" fill="#808080"/><rect x="2" y="1" width="1" height="1" fill="#808080"/><rect x="3" y="1" width="7" height="1" fill="#fff"/><rect x="10" y="1" width="2" height="1" fill="#808080"/><rect x="2" y="2" width="1" height="1" fill="#808080"/><rect x="3" y="2" width="1" height="1" fill="#fff"/><rect x="10" y="2" width="1" height="1" fill="#808080"/><rect x="11" y="2" width="1" height="1" fill="#fff"/><rect x="12" y="2" width="1" height="1" fill="#808080"/><rect x="2" y="3" width="2" height="1" fill="#808080"/><rect x="10" y="3" width="4" height="1" fill="#808080"/><rect x="2" y="4" width="1" height="1" fill="#808080"/><rect x="3" y="4" width="1" height="1" fill="#fff"/><rect x="4" y="4" width="10" height="1" fill="#808080"/><rect x="14" y="4" width="1" height="1" fill="#fff"/><rect x="2" y="5" width="1" height="1" fill="#808080"/><rect x="3" y="5" width="1" height="1" fill="#fff"/><rect x="4" y="5" width="2" height="1" fill="#808080"/><rect x="6" y="5" width="1" height="1" fill="#fff"/><rect x="7" y="5" width="3" height="1" fill="#808080"/><rect x="10" y="5" width="1" height="1" fill="#fff"/><rect x="11" y="5" width="3" height="1" fill="#808080"/><rect x="14" y="5" width="1" height="1" fill="#fff"/><rect x="2" y="6" width="1" height="1" fill="#808080"/><rect x="3" y="6" width="1" height="1" fill="#fff"/><rect x="4" y="6" width="1" height="1" fill="#808080"/><rect x="5" y="6" width="1" height="1" fill="#fff"/><rect x="6" y="6" width="5" height="1" fill="#808080"/><rect x="12" y="6" width="2" height="1" fill="#808080"/><rect x="14" y="6" width="1" height="1" fill="#fff"/><rect x="2" y="7" width="1" height="1" fill="#808080"/><rect x="3" y="7" width="1" height="1" fill="#fff"/><rect x="5" y="7" width="1" height="1" fill="#fff"/><rect x="7" y="7" width="3" height="1" fill="#808080"/><rect x="10" y="7" width="2" height="1" fill="#fff"/><rect x="13" y="7" width="1" height="1" fill="#808080"/><rect x="14" y="7" width="1" height="1" fill="#fff"/><rect x="2" y="8" width="1" height="1" fill="#808080"/><rect x="3" y="8" width="1" height="1" fill="#fff"/><rect x="7" y="8" width="3" height="1" fill="#808080"/><rect x="10" y="8" width="1" height="1" fill="#fff"/><rect x="13" y="8" width="1" height="1" fill="#808080"/><rect x="14" y="8" width="1" height="1" fill="#fff"/><rect x="2" y="9" width="1" height="1" fill="#808080"/><rect x="3" y="9" width="1" height="1" fill="#fff"/><rect x="7" y="9" width="3" height="1" fill="#808080"/><rect x="10" y="9" width="1" height="1" fill="#fff"/><rect x="13" y="9" width="1" height="1" fill="#808080"/><rect x="14" y="9" width="1" height="1" fill="#fff"/><rect x="2" y="10" width="1" height="1" fill="#808080"/><rect x="3" y="10" width="1" height="1" fill="#fff"/><rect x="6" y="10" width="5" height="1" fill="#808080"/><rect x="13" y="10" width="1" height="1" fill="#808080"/><rect x="14" y="10" width="1" height="1" fill="#fff"/><rect x="2" y="11" width="1" height="1" fill="#808080"/><rect x="3" y="11" width="1" height="1" fill="#fff"/><rect x="5" y="11" width="7" height="1" fill="#808080"/><rect x="13" y="11" width="1" height="1" fill="#808080"/><rect x="14" y="11" width="1" height="1" fill="#fff"/><rect x="2" y="12" width="1" height="1" fill="#808080"/><rect x="3" y="12" width="1" height="1" fill="#fff"/><rect x="4" y="12" width="1" height="1" fill="#808080"/><rect x="6" y="12" width="6" height="1" fill="#fff"/><rect x="12" y="12" width="2" height="1" fill="#808080"/><rect x="14" y="12" width="1" height="1" fill="#fff"/><rect x="2" y="13" width="2" height="1" fill="#808080"/><rect x="5" y="13" width="1" height="1" fill="#fff"/><rect x="13" y="13" width="1" height="1" fill="#808080"/><rect x="14" y="13" width="1" height="1" fill="#fff"/><rect x="2" y="14" width="12" height="1" fill="#808080"/><rect x="14" y="14" width="1" height="1" fill="#fff"/><rect x="3" y="15" width="12" height="1" fill="#fff"/></svg>
<div style="left:247px;top:76px;width:1px;height:18px;background:#808080;"></div>
<div style="left:248px;top:76px;width:1px;height:18px;background:#ffffff;"></div>
<svg style="left:254px;top:77px" width="14" height="16" viewBox="0 0 14 16" shape-rendering="crispEdges" ><rect x="3" y="0" width="1" height="1" fill="#808080"/><rect x="1" y="1" width="5" height="1" fill="#808080"/><rect x="1" y="2" width="1" height="1" fill="#808080"/><rect x="2" y="2" width="3" height="1" fill="#fff"/><rect x="5" y="2" width="1" height="1" fill="#808080"/><rect x="6" y="2" width="1" height="1" fill="#fff"/><rect x="1" y="3" width="1" height="1" fill="#808080"/><rect x="2" y="3" width="1" height="1" fill="#fff"/><rect x="5" y="3" width="1" height="1" fill="#808080"/><rect x="6" y="3" width="1" height="1" fill="#fff"/><rect x="1" y="4" width="5" height="1" fill="#808080"/><rect x="6" y="4" width="1" height="1" fill="#fff"/><rect x="2" y="5" width="1" height="1" fill="#fff"/><rect x="3" y="5" width="1" height="1" fill="#808080"/><rect x="4" y="5" width="3" height="1" fill="#fff"/><rect x="1" y="6" width="5" height="1" fill="#808080"/><rect x="1" y="7" width="1" height="1" fill="#808080"/><rect x="2" y="7" width="3" height="1" fill="#fff"/><rect x="5" y="7" width="1" height="1" fill="#808080"/><rect x="6" y="7" width="1" height="1" fill="#fff"/><rect x="1" y="8" width="1" height="1" fill="#808080"/><rect x="2" y="8" width="1" height="1" fill="#fff"/><rect x="5" y="8" width="5" height="1" fill="#808080"/><rect x="1" y="9" width="5" height="1" fill="#808080"/><rect x="6" y="9" width="3" height="1" fill="#fff"/><rect x="9" y="9" width="1" height="1" fill="#808080"/><rect x="10" y="9" width="1" height="1" fill="#fff"/><rect x="2" y="10" width="1" height="1" fill="#fff"/><rect x="3" y="10" width="1" height="1" fill="#808080"/><rect x="4" y="10" width="3" height="1" fill="#fff"/><rect x="7" y="10" width="6" height="1" fill="#808080"/><rect x="3" y="11" width="1" height="1" fill="#808080"/><rect x="4" y="11" width="1" height="1" fill="#fff"/><rect x="7" y="11" width="1" height="1" fill="#808080"/><rect x="8" y="11" width="4" height="1" fill="#fff"/><rect x="12" y="11" width="1" height="1" fill="#808080"/><rect x="13" y="11" width="1" height="1" fill="#fff"/><rect x="3" y="12" width="1" height="1" fill="#808080"/><rect x="4" y="12" width="1" height="1" fill="#fff"/><rect x="7" y="12" width="1" height="1" fill="#808080"/><rect x="8" y="12" width="1" height="1" fill="#fff"/><rect x="12" y="12" width="1" height="1" fill="#808080"/><rect x="13" y="12" width="1" height="1" fill="#fff"/><rect x="4" y="13" width="1" height="1" fill="#fff"/><rect x="7" y="13" width="6" height="1" fill="#808080"/><rect x="13" y="13" width="1" height="1" fill="#fff"/><rect x="3" y="14" width="1" height="1" fill="#808080"/><rect x="8" y="14" width="6" height="1" fill="#fff"/><rect x="4" y="15" width="1" height="1" fill="#fff"/></svg>
<div style="left:274px;top:72px;width:1px;height:26px;background:#808080;"></div>
<div style="left:275px;top:72px;width:1px;height:26px;background:#ffffff;"></div>
<div style="left:191px;top:100px;width:1px;height:26px;background:#808080;"></div>
<div style="left:192px;top:100px;width:1px;height:26px;background:#ffffff;"></div>
<div style="left:195px;top:102px;width:3px;height:1px;background:#ffffff;"></div>
<div style="left:195px;top:102px;width:1px;height:22px;background:#ffffff;"></div>
<div style="left:195px;top:123px;width:3px;height:1px;background:#808080;"></div>
<div style="left:197px;top:102px;width:1px;height:22px;background:#808080;"></div>
<svg style="left:203px;top:105px" width="13" height="13" viewBox="0 0 13 13" shape-rendering="crispEdges" ><rect x="2" y="4" width="6" height="1" fill="#808080"/><rect x="2" y="5" width="7" height="1" fill="#808080"/><rect x="11" y="5" width="1" height="1" fill="#808080"/><rect x="3" y="6" width="3" height="1" fill="#fff"/><rect x="6" y="6" width="3" height="1" fill="#808080"/><rect x="9" y="6" width="1" height="1" fill="#fff"/><rect x="10" y="6" width="2" height="1" fill="#808080"/><rect x="12" y="6" width="1" height="1" fill="#fff"/><rect x="7" y="7" width="5" height="1" fill="#808080"/><rect x="12" y="7" width="1" height="1" fill="#fff"/><rect x="6" y="8" width="6" height="1" fill="#808080"/><rect x="12" y="8" width="1" height="1" fill="#fff"/><rect x="5" y="9" width="7" height="1" fill="#808080"/><rect x="12" y="9" width="1" height="1" fill="#fff"/><rect x="4" y="10" width="8" height="1" fill="#808080"/><rect x="12" y="10" width="1" height="1" fill="#fff"/><rect x="3" y="11" width="9" height="1" fill="#808080"/><rect x="12" y="11" width="1" height="1" fill="#fff"/><rect x="4" y="12" width="9" height="1" fill="#fff"/></svg>
<div style="left:225px;top:104px;width:1px;height:18px;background:#808080;"></div>
<div style="left:226px;top:104px;width:1px;height:18px;background:#ffffff;"></div>
<div style="left:229px;top:103px;width:200px;height:21px;background:#d1cfbe;"></div>
<div style="left:229px;top:103px;width:200px;height:1px;background:#808080;"></div>
<div style="left:229px;top:103px;width:1px;height:21px;background:#808080;"></div>
<div style="left:229px;top:123px;width:200px;height:1px;background:#ffffff;"></div>
<div style="left:428px;top:103px;width:1px;height:21px;background:#ffffff;"></div>
<div style="left:230px;top:104px;width:198px;height:1px;background:#404040;"></div>
<div style="left:230px;top:104px;width:1px;height:19px;background:#404040;"></div>
<div style="left:230px;top:122px;width:198px;height:1px;background:#d1cfbe;"></div>
<div style="left:427px;top:104px;width:1px;height:19px;background:#d1cfbe;"></div>
<div style="left:411px;top:105px;width:16px;height:17px;background:#d1cfbe;"></div>
<div style="left:411px;top:105px;width:15px;height:1px;background:#ffffff;"></div>
<div style="left:411px;top:105px;width:1px;height:16px;background:#ffffff;"></div>
<div style="left:411px;top:121px;width:16px;height:1px;background:#404040;"></div>
<div style="left:426px;top:105px;width:1px;height:17px;background:#404040;"></div>
<div style="left:412px;top:120px;width:14px;height:1px;background:#808080;"></div>
<div style="left:425px;top:106px;width:1px;height:15px;background:#808080;"></div>
<svg style="left:416px;top:112px" width="7" height="4" viewBox="0 0 7 4" shape-rendering="crispEdges" ><rect x="0" y="0" width="7" height="1" fill="#fff"/><rect x="1" y="1" width="5" height="1" fill="#fff"/><rect x="2" y="2" width="3" height="1" fill="#fff"/><rect x="3" y="3" width="1" height="1" fill="#fff"/></svg>
<svg style="left:415px;top:111px" width="7" height="4" viewBox="0 0 7 4" shape-rendering="crispEdges" ><rect x="0" y="0" width="7" height="1" fill="#808080"/><rect x="1" y="1" width="5" height="1" fill="#808080"/><rect x="2" y="2" width="3" height="1" fill="#808080"/><rect x="3" y="3" width="1" height="1" fill="#808080"/></svg>
<div style="left:431px;top:104px;width:1px;height:18px;background:#808080;"></div>
<div style="left:432px;top:104px;width:1px;height:18px;background:#ffffff;"></div>
<svg style="left:438px;top:105px" width="18" height="16" viewBox="0 0 18 16" shape-rendering="crispEdges" ><rect x="0" y="0" width="9" height="1" fill="#808080"/><rect x="11" y="0" width="1" height="1" fill="#d1cfbe"/><rect x="13" y="0" width="1" height="1" fill="#808080"/><rect x="0" y="1" width="10" height="1" fill="#808080"/><rect x="10" y="1" width="3" height="1" fill="#d1cfbe"/><rect x="13" y="1" width="2" height="1" fill="#808080"/><rect x="0" y="2" width="9" height="1" fill="#808080"/><rect x="9" y="2" width="3" height="1" fill="#d1cfbe"/><rect x="13" y="2" width="1" height="1" fill="#808080"/><rect x="14" y="2" width="2" height="1" fill="#fff"/><rect x="0" y="3" width="10" height="1" fill="#808080"/><rect x="10" y="3" width="1" height="1" fill="#d1cfbe"/><rect x="14" y="3" width="1" height="1" fill="#fff"/><rect x="0" y="4" width="9" height="1" fill="#808080"/><rect x="9" y="4" width="1" height="1" fill="#d1cfbe"/><rect x="10" y="4" width="1" height="1" fill="#808080"/><rect x="0" y="5" width="11" height="1" fill="#808080"/><rect x="11" y="5" width="1" height="1" fill="#fff"/><rect x="0" y="6" width="13" height="1" fill="#808080"/><rect x="0" y="7" width="10" height="1" fill="#808080"/><rect x="10" y="7" width="3" height="1" fill="#d1cfbe"/><rect x="13" y="7" width="1" height="1" fill="#808080"/><rect x="0" y="8" width="9" height="1" fill="#808080"/><rect x="9" y="8" width="5" height="1" fill="#d1cfbe"/><rect x="14" y="8" width="1" height="1" fill="#808080"/><rect x="0" y="9" width="9" height="1" fill="#808080"/><rect x="9" y="9" width="5" height="1" fill="#d1cfbe"/><rect x="14" y="9" width="1" height="1" fill="#808080"/><rect x="15" y="9" width="1" height="1" fill="#fff"/><rect x="0" y="10" width="9" height="1" fill="#808080"/><rect x="9" y="10" width="5" height="1" fill="#d1cfbe"/><rect x="14" y="10" width="1" height="1" fill="#808080"/><rect x="15" y="10" width="1" height="1" fill="#fff"/><rect x="0" y="11" width="10" height="1" fill="#808080"/><rect x="10" y="11" width="3" height="1" fill="#d1cfbe"/><rect x="13" y="11" width="1" height="1" fill="#808080"/><rect x="15" y="11" width="1" height="1" fill="#fff"/><rect x="0" y="12" width="15" height="1" fill="#808080"/><rect x="0" y="13" width="11" height="1" fill="#808080"/><rect x="11" y="13" width="3" height="1" fill="#fff"/><rect x="14" y="13" width="2" height="1" fill="#808080"/><rect x="0" y="14" width="11" height="1" fill="#808080"/><rect x="11" y="14" width="1" height="1" fill="#fff"/><rect x="15" y="14" width="2" height="1" fill="#808080"/><rect x="1" y="15" width="11" height="1" fill="#fff"/><rect x="16" y="15" width="2" height="1" fill="#fff"/></svg>
<svg style="left:461px;top:105px" width="18" height="16" viewBox="0 0 18 16" shape-rendering="crispEdges" ><rect x="0" y="0" width="9" height="1" fill="#808080"/><rect x="0" y="1" width="10" height="1" fill="#808080"/><rect x="0" y="2" width="11" height="1" fill="#808080"/><rect x="0" y="3" width="11" height="1" fill="#808080"/><rect x="11" y="3" width="1" height="1" fill="#fff"/><rect x="0" y="4" width="11" height="1" fill="#808080"/><rect x="11" y="4" width="1" height="1" fill="#fff"/><rect x="0" y="5" width="11" height="1" fill="#808080"/><rect x="11" y="5" width="1" height="1" fill="#fff"/><rect x="0" y="6" width="13" height="1" fill="#808080"/><rect x="0" y="7" width="10" height="1" fill="#808080"/><rect x="10" y="7" width="3" height="1" fill="#d1cfbe"/><rect x="13" y="7" width="1" height="1" fill="#808080"/><rect x="0" y="8" width="9" height="1" fill="#808080"/><rect x="9" y="8" width="5" height="1" fill="#d1cfbe"/><rect x="14" y="8" width="1" height="1" fill="#808080"/><rect x="0" y="9" width="9" height="1" fill="#808080"/><rect x="9" y="9" width="5" height="1" fill="#d1cfbe"/><rect x="14" y="9" width="1" height="1" fill="#808080"/><rect x="15" y="9" width="1" height="1" fill="#fff"/><rect x="0" y="10" width="9" height="1" fill="#808080"/><rect x="9" y="10" width="5" height="1" fill="#d1cfbe"/><rect x="14" y="10" width="1" height="1" fill="#808080"/><rect x="15" y="10" width="1" height="1" fill="#fff"/><rect x="0" y="11" width="10" height="1" fill="#808080"/><rect x="10" y="11" width="3" height="1" fill="#d1cfbe"/><rect x="13" y="11" width="1" height="1" fill="#808080"/><rect x="15" y="11" width="1" height="1" fill="#fff"/><rect x="0" y="12" width="15" height="1" fill="#808080"/><rect x="0" y="13" width="11" height="1" fill="#808080"/><rect x="11" y="13" width="3" height="1" fill="#fff"/><rect x="14" y="13" width="2" height="1" fill="#808080"/><rect x="0" y="14" width="11" height="1" fill="#808080"/><rect x="11" y="14" width="1" height="1" fill="#fff"/><rect x="15" y="14" width="2" height="1" fill="#808080"/><rect x="1" y="15" width="11" height="1" fill="#fff"/><rect x="16" y="15" width="2" height="1" fill="#fff"/></svg>
<svg style="left:484px;top:105px" width="18" height="16" viewBox="0 0 18 16" shape-rendering="crispEdges" ><rect x="0" y="0" width="9" height="1" fill="#808080"/><rect x="0" y="1" width="10" height="1" fill="#808080"/><rect x="0" y="2" width="11" height="1" fill="#808080"/><rect x="0" y="3" width="5" height="1" fill="#808080"/><rect x="5" y="3" width="1" height="1" fill="#d1cfbe"/><rect x="6" y="3" width="5" height="1" fill="#808080"/><rect x="11" y="3" width="1" height="1" fill="#fff"/><rect x="0" y="4" width="5" height="1" fill="#808080"/><rect x="5" y="4" width="1" height="1" fill="#d1cfbe"/><rect x="6" y="4" width="5" height="1" fill="#808080"/><rect x="11" y="4" width="1" height="1" fill="#fff"/><rect x="0" y="5" width="4" height="1" fill="#808080"/><rect x="4" y="5" width="1" height="1" fill="#d1cfbe"/><rect x="5" y="5" width="1" height="1" fill="#808080"/><rect x="6" y="5" width="1" height="1" fill="#d1cfbe"/><rect x="7" y="5" width="4" height="1" fill="#808080"/><rect x="11" y="5" width="1" height="1" fill="#fff"/><rect x="0" y="6" width="4" height="1" fill="#808080"/><rect x="4" y="6" width="1" height="1" fill="#d1cfbe"/><rect x="5" y="6" width="1" height="1" fill="#808080"/><rect x="6" y="6" width="1" height="1" fill="#d1cfbe"/><rect x="7" y="6" width="6" height="1" fill="#808080"/><rect x="0" y="7" width="3" height="1" fill="#808080"/><rect x="3" y="7" width="5" height="1" fill="#d1cfbe"/><rect x="8" y="7" width="2" height="1" fill="#808080"/><rect x="10" y="7" width="3" height="1" fill="#d1cfbe"/><rect x="13" y="7" width="1" height="1" fill="#808080"/><rect x="0" y="8" width="3" height="1" fill="#808080"/><rect x="3" y="8" width="1" height="1" fill="#d1cfbe"/><rect x="4" y="8" width="3" height="1" fill="#808080"/><rect x="7" y="8" width="1" height="1" fill="#d1cfbe"/><rect x="8" y="8" width="1" height="1" fill="#808080"/><rect x="9" y="8" width="5" height="1" fill="#d1cfbe"/><rect x="14" y="8" width="1" height="1" fill="#808080"/><rect x="0" y="9" width="3" height="1" fill="#808080"/><rect x="3" y="9" width="1" height="1" fill="#d1cfbe"/><rect x="4" y="9" width="3" height="1" fill="#808080"/><rect x="7" y="9" width="1" height="1" fill="#d1cfbe"/><rect x="8" y="9" width="1" height="1" fill="#808080"/><rect x="9" y="9" width="5" height="1" fill="#d1cfbe"/><rect x="14" y="9" width="1" height="1" fill="#808080"/><rect x="15" y="9" width="1" height="1" fill="#fff"/><rect x="0" y="10" width="9" height="1" fill="#808080"/><rect x="9" y="10" width="5" height="1" fill="#d1cfbe"/><rect x="14" y="10" width="1" height="1" fill="#808080"/><rect x="15" y="10" width="1" height="1" fill="#fff"/><rect x="0" y="11" width="10" height="1" fill="#808080"/><rect x="10" y="11" width="3" height="1" fill="#d1cfbe"/><rect x="13" y="11" width="1" height="1" fill="#808080"/><rect x="15" y="11" width="1" height="1" fill="#fff"/><rect x="0" y="12" width="15" height="1" fill="#808080"/><rect x="0" y="13" width="11" height="1" fill="#808080"/><rect x="11" y="13" width="3" height="1" fill="#fff"/><rect x="14" y="13" width="2" height="1" fill="#808080"/><rect x="0" y="14" width="11" height="1" fill="#808080"/><rect x="11" y="14" width="1" height="1" fill="#fff"/><rect x="15" y="14" width="2" height="1" fill="#808080"/><rect x="1" y="15" width="11" height="1" fill="#fff"/><rect x="16" y="15" width="2" height="1" fill="#fff"/></svg>
<svg style="left:507px;top:105px" width="18" height="16" viewBox="0 0 18 16" shape-rendering="crispEdges" ><rect x="0" y="0" width="9" height="1" fill="#808080"/><rect x="0" y="1" width="10" height="1" fill="#808080"/><rect x="0" y="2" width="2" height="1" fill="#808080"/><rect x="2" y="2" width="1" height="1" fill="#d1cfbe"/><rect x="3" y="2" width="5" height="1" fill="#808080"/><rect x="8" y="2" width="1" height="1" fill="#d1cfbe"/><rect x="9" y="2" width="2" height="1" fill="#808080"/><rect x="0" y="3" width="3" height="1" fill="#808080"/><rect x="3" y="3" width="1" height="1" fill="#d1cfbe"/><rect x="4" y="3" width="3" height="1" fill="#808080"/><rect x="7" y="3" width="1" height="1" fill="#d1cfbe"/><rect x="8" y="3" width="3" height="1" fill="#808080"/><rect x="11" y="3" width="1" height="1" fill="#fff"/><rect x="0" y="4" width="4" height="1" fill="#808080"/><rect x="4" y="4" width="1" height="1" fill="#d1cfbe"/><rect x="5" y="4" width="1" height="1" fill="#808080"/><rect x="6" y="4" width="1" height="1" fill="#d1cfbe"/><rect x="7" y="4" width="4" height="1" fill="#808080"/><rect x="11" y="4" width="1" height="1" fill="#fff"/><rect x="0" y="5" width="5" height="1" fill="#808080"/><rect x="5" y="5" width="1" height="1" fill="#d1cfbe"/><rect x="6" y="5" width="5" height="1" fill="#808080"/><rect x="11" y="5" width="1" height="1" fill="#fff"/><rect x="0" y="6" width="4" height="1" fill="#808080"/><rect x="4" y="6" width="1" height="1" fill="#d1cfbe"/><rect x="5" y="6" width="1" height="1" fill="#808080"/><rect x="6" y="6" width="1" height="1" fill="#d1cfbe"/><rect x="7" y="6" width="6" height="1" fill="#808080"/><rect x="0" y="7" width="3" height="1" fill="#808080"/><rect x="3" y="7" width="1" height="1" fill="#d1cfbe"/><rect x="4" y="7" width="3" height="1" fill="#808080"/><rect x="7" y="7" width="1" height="1" fill="#d1cfbe"/><rect x="8" y="7" width="2" height="1" fill="#808080"/><rect x="10" y="7" width="3" height="1" fill="#d1cfbe"/><rect x="13" y="7" width="1" height="1" fill="#808080"/><rect x="0" y="8" width="2" height="1" fill="#808080"/><rect x="2" y="8" width="1" height="1" fill="#d1cfbe"/><rect x="3" y="8" width="6" height="1" fill="#808080"/><rect x="9" y="8" width="5" height="1" fill="#d1cfbe"/><rect x="14" y="8" width="1" height="1" fill="#808080"/><rect x="0" y="9" width="2" height="1" fill="#808080"/><rect x="2" y="9" width="1" height="1" fill="#d1cfbe"/><rect x="3" y="9" width="6" height="1" fill="#808080"/><rect x="9" y="9" width="5" height="1" fill="#d1cfbe"/><rect x="14" y="9" width="1" height="1" fill="#808080"/><rect x="15" y="9" width="1" height="1" fill="#fff"/><rect x="0" y="10" width="9" height="1" fill="#808080"/><rect x="9" y="10" width="5" height="1" fill="#d1cfbe"/><rect x="14" y="10" width="1" height="1" fill="#808080"/><rect x="15" y="10" width="1" height="1" fill="#fff"/><rect x="0" y="11" width="10" height="1" fill="#808080"/><rect x="10" y="11" width="3" height="1" fill="#d1cfbe"/><rect x="13" y="11" width="1" height="1" fill="#808080"/><rect x="15" y="11" width="1" height="1" fill="#fff"/><rect x="0" y="12" width="15" height="1" fill="#808080"/><rect x="0" y="13" width="11" height="1" fill="#808080"/><rect x="11" y="13" width="3" height="1" fill="#fff"/><rect x="14" y="13" width="2" height="1" fill="#808080"/><rect x="0" y="14" width="11" height="1" fill="#808080"/><rect x="11" y="14" width="1" height="1" fill="#fff"/><rect x="15" y="14" width="2" height="1" fill="#808080"/><rect x="1" y="15" width="11" height="1" fill="#fff"/><rect x="16" y="15" width="2" height="1" fill="#fff"/></svg>
<svg style="left:530px;top:105px" width="18" height="16" viewBox="0 0 18 16" shape-rendering="crispEdges" ><rect x="0" y="0" width="9" height="1" fill="#808080"/><rect x="0" y="1" width="10" height="1" fill="#808080"/><rect x="0" y="2" width="11" height="1" fill="#808080"/><rect x="0" y="3" width="3" height="1" fill="#808080"/><rect x="3" y="3" width="4" height="1" fill="#d1cfbe"/><rect x="7" y="3" width="4" height="1" fill="#808080"/><rect x="11" y="3" width="1" height="1" fill="#fff"/><rect x="0" y="4" width="2" height="1" fill="#808080"/><rect x="2" y="4" width="2" height="1" fill="#d1cfbe"/><rect x="4" y="4" width="2" height="1" fill="#808080"/><rect x="6" y="4" width="2" height="1" fill="#d1cfbe"/><rect x="8" y="4" width="3" height="1" fill="#808080"/><rect x="11" y="4" width="1" height="1" fill="#fff"/><rect x="0" y="5" width="2" height="1" fill="#808080"/><rect x="2" y="5" width="2" height="1" fill="#d1cfbe"/><rect x="4" y="5" width="7" height="1" fill="#808080"/><rect x="11" y="5" width="1" height="1" fill="#fff"/><rect x="0" y="6" width="2" height="1" fill="#808080"/><rect x="2" y="6" width="2" height="1" fill="#d1cfbe"/><rect x="4" y="6" width="9" height="1" fill="#808080"/><rect x="0" y="7" width="2" height="1" fill="#808080"/><rect x="2" y="7" width="2" height="1" fill="#d1cfbe"/><rect x="4" y="7" width="6" height="1" fill="#808080"/><rect x="10" y="7" width="3" height="1" fill="#d1cfbe"/><rect x="13" y="7" width="1" height="1" fill="#808080"/><rect x="0" y="8" width="2" height="1" fill="#808080"/><rect x="2" y="8" width="2" height="1" fill="#d1cfbe"/><rect x="4" y="8" width="5" height="1" fill="#808080"/><rect x="9" y="8" width="5" height="1" fill="#d1cfbe"/><rect x="14" y="8" width="1" height="1" fill="#808080"/><rect x="0" y="9" width="2" height="1" fill="#808080"/><rect x="2" y="9" width="2" height="1" fill="#d1cfbe"/><rect x="4" y="9" width="5" height="1" fill="#808080"/><rect x="9" y="9" width="5" height="1" fill="#d1cfbe"/><rect x="14" y="9" width="1" height="1" fill="#808080"/><rect x="15" y="9" width="1" height="1" fill="#fff"/><rect x="0" y="10" width="2" height="1" fill="#808080"/><rect x="2" y="10" width="2" height="1" fill="#d1cfbe"/><rect x="4" y="10" width="2" height="1" fill="#808080"/><rect x="6" y="10" width="2" height="1" fill="#d1cfbe"/><rect x="8" y="10" width="1" height="1" fill="#808080"/><rect x="9" y="10" width="5" height="1" fill="#d1cfbe"/><rect x="14" y="10" width="1" height="1" fill="#808080"/><rect x="15" y="10" width="1" height="1" fill="#fff"/><rect x="0" y="11" width="3" height="1" fill="#808080"/><rect x="3" y="11" width="4" height="1" fill="#d1cfbe"/><rect x="7" y="11" width="3" height="1" fill="#808080"/><rect x="10" y="11" width="3" height="1" fill="#d1cfbe"/><rect x="13" y="11" width="1" height="1" fill="#808080"/><rect x="15" y="11" width="1" height="1" fill="#fff"/><rect x="0" y="12" width="15" height="1" fill="#808080"/><rect x="0" y="13" width="11" height="1" fill="#808080"/><rect x="11" y="13" width="3" height="1" fill="#fff"/><rect x="14" y="13" width="2" height="1" fill="#808080"/><rect x="0" y="14" width="11" height="1" fill="#808080"/><rect x="11" y="14" width="1" height="1" fill="#fff"/><rect x="15" y="14" width="2" height="1" fill="#808080"/><rect x="1" y="15" width="11" height="1" fill="#fff"/><rect x="16" y="15" width="2" height="1" fill="#fff"/></svg>
<div style="left:552px;top:104px;width:1px;height:18px;background:#808080;"></div>
<div style="left:553px;top:104px;width:1px;height:18px;background:#ffffff;"></div>
<svg style="left:559px;top:105px" width="18" height="16" viewBox="0 0 18 16" shape-rendering="crispEdges" ><rect x="0" y="0" width="9" height="1" fill="#808080"/><rect x="0" y="1" width="1" height="1" fill="#808080"/><rect x="1" y="1" width="7" height="1" fill="#fff"/><rect x="8" y="1" width="2" height="1" fill="#808080"/><rect x="0" y="2" width="1" height="1" fill="#808080"/><rect x="1" y="2" width="1" height="1" fill="#fff"/><rect x="9" y="2" width="1" height="1" fill="#fff"/><rect x="10" y="2" width="1" height="1" fill="#808080"/><rect x="0" y="3" width="1" height="1" fill="#808080"/><rect x="1" y="3" width="1" height="1" fill="#fff"/><rect x="3" y="3" width="4" height="1" fill="#808080"/><rect x="10" y="3" width="1" height="1" fill="#808080"/><rect x="11" y="3" width="1" height="1" fill="#fff"/><rect x="0" y="4" width="1" height="1" fill="#808080"/><rect x="1" y="4" width="1" height="1" fill="#fff"/><rect x="2" y="4" width="2" height="1" fill="#808080"/><rect x="4" y="4" width="2" height="1" fill="#fff"/><rect x="6" y="4" width="2" height="1" fill="#808080"/><rect x="10" y="4" width="1" height="1" fill="#808080"/><rect x="11" y="4" width="1" height="1" fill="#fff"/><rect x="0" y="5" width="1" height="1" fill="#808080"/><rect x="1" y="5" width="1" height="1" fill="#fff"/><rect x="2" y="5" width="2" height="1" fill="#808080"/><rect x="4" y="5" width="1" height="1" fill="#fff"/><rect x="6" y="5" width="2" height="1" fill="#808080"/><rect x="8" y="5" width="1" height="1" fill="#fff"/><rect x="10" y="5" width="1" height="1" fill="#808080"/><rect x="11" y="5" width="1" height="1" fill="#fff"/><rect x="0" y="6" width="1" height="1" fill="#808080"/><rect x="1" y="6" width="1" height="1" fill="#fff"/><rect x="3" y="6" width="2" height="1" fill="#fff"/><rect x="5" y="6" width="3" height="1" fill="#808080"/><rect x="8" y="6" width="1" height="1" fill="#fff"/><rect x="10" y="6" width="3" height="1" fill="#808080"/><rect x="0" y="7" width="1" height="1" fill="#808080"/><rect x="1" y="7" width="1" height="1" fill="#fff"/><rect x="4" y="7" width="3" height="1" fill="#808080"/><rect x="7" y="7" width="2" height="1" fill="#fff"/><rect x="9" y="7" width="1" height="1" fill="#808080"/><rect x="10" y="7" width="3" height="1" fill="#d1cfbe"/><rect x="13" y="7" width="1" height="1" fill="#808080"/><rect x="0" y="8" width="1" height="1" fill="#808080"/><rect x="1" y="8" width="1" height="1" fill="#fff"/><rect x="4" y="8" width="2" height="1" fill="#808080"/><rect x="6" y="8" width="2" height="1" fill="#fff"/><rect x="8" y="8" width="1" height="1" fill="#808080"/><rect x="9" y="8" width="5" height="1" fill="#d1cfbe"/><rect x="14" y="8" width="1" height="1" fill="#808080"/><rect x="0" y="9" width="1" height="1" fill="#808080"/><rect x="1" y="9" width="1" height="1" fill="#fff"/><rect x="4" y="9" width="2" height="1" fill="#808080"/><rect x="6" y="9" width="1" height="1" fill="#fff"/><rect x="8" y="9" width="1" height="1" fill="#808080"/><rect x="9" y="9" width="5" height="1" fill="#d1cfbe"/><rect x="14" y="9" width="1" height="1" fill="#808080"/><rect x="15" y="9" width="1" height="1" fill="#fff"/><rect x="0" y="10" width="1" height="1" fill="#808080"/><rect x="1" y="10" width="1" height="1" fill="#fff"/><rect x="5" y="10" width="2" height="1" fill="#fff"/><rect x="8" y="10" width="1" height="1" fill="#808080"/><rect x="9" y="10" width="5" height="1" fill="#d1cfbe"/><rect x="14" y="10" width="1" height="1" fill="#808080"/><rect x="15" y="10" width="1" height="1" fill="#fff"/><rect x="0" y="11" width="1" height="1" fill="#808080"/><rect x="1" y="11" width="1" height="1" fill="#fff"/><rect x="4" y="11" width="2" height="1" fill="#808080"/><rect x="9" y="11" width="1" height="1" fill="#808080"/><rect x="10" y="11" width="3" height="1" fill="#d1cfbe"/><rect x="13" y="11" width="1" height="1" fill="#808080"/><rect x="15" y="11" width="1" height="1" fill="#fff"/><rect x="0" y="12" width="1" height="1" fill="#808080"/><rect x="1" y="12" width="1" height="1" fill="#fff"/><rect x="4" y="12" width="2" height="1" fill="#808080"/><rect x="6" y="12" width="1" height="1" fill="#fff"/><rect x="10" y="12" width="5" height="1" fill="#808080"/><rect x="0" y="13" width="1" height="1" fill="#808080"/><rect x="1" y="13" width="1" height="1" fill="#fff"/><rect x="5" y="13" width="2" height="1" fill="#fff"/><rect x="10" y="13" width="1" height="1" fill="#808080"/><rect x="11" y="13" width="3" height="1" fill="#fff"/><rect x="14" y="13" width="2" height="1" fill="#808080"/><rect x="0" y="14" width="11" height="1" fill="#808080"/><rect x="11" y="14" width="1" height="1" fill="#fff"/><rect x="15" y="14" width="2" height="1" fill="#808080"/><rect x="1" y="15" width="11" height="1" fill="#fff"/><rect x="16" y="15" width="2" height="1" fill="#fff"/></svg>
<svg style="left:582px;top:105px" width="17" height="16" viewBox="0 0 17 16" shape-rendering="crispEdges" ><rect x="0" y="0" width="9" height="1" fill="#808080"/><rect x="0" y="1" width="1" height="1" fill="#808080"/><rect x="1" y="1" width="7" height="1" fill="#fff"/><rect x="8" y="1" width="2" height="1" fill="#808080"/><rect x="0" y="2" width="1" height="1" fill="#808080"/><rect x="1" y="2" width="1" height="1" fill="#fff"/><rect x="9" y="2" width="1" height="1" fill="#fff"/><rect x="10" y="2" width="1" height="1" fill="#808080"/><rect x="0" y="3" width="1" height="1" fill="#808080"/><rect x="1" y="3" width="1" height="1" fill="#fff"/><rect x="3" y="3" width="4" height="1" fill="#808080"/><rect x="10" y="3" width="1" height="1" fill="#808080"/><rect x="11" y="3" width="1" height="1" fill="#fff"/><rect x="0" y="4" width="1" height="1" fill="#808080"/><rect x="1" y="4" width="1" height="1" fill="#fff"/><rect x="2" y="4" width="2" height="1" fill="#808080"/><rect x="4" y="4" width="2" height="1" fill="#fff"/><rect x="6" y="4" width="2" height="1" fill="#808080"/><rect x="10" y="4" width="1" height="1" fill="#808080"/><rect x="11" y="4" width="1" height="1" fill="#fff"/><rect x="0" y="5" width="1" height="1" fill="#808080"/><rect x="1" y="5" width="1" height="1" fill="#fff"/><rect x="2" y="5" width="2" height="1" fill="#808080"/><rect x="4" y="5" width="1" height="1" fill="#fff"/><rect x="6" y="5" width="2" height="1" fill="#808080"/><rect x="8" y="5" width="1" height="1" fill="#fff"/><rect x="10" y="5" width="1" height="1" fill="#808080"/><rect x="11" y="5" width="1" height="1" fill="#fff"/><rect x="0" y="6" width="1" height="1" fill="#808080"/><rect x="1" y="6" width="1" height="1" fill="#fff"/><rect x="3" y="6" width="2" height="1" fill="#fff"/><rect x="5" y="6" width="3" height="1" fill="#808080"/><rect x="8" y="6" width="1" height="1" fill="#fff"/><rect x="10" y="6" width="1" height="1" fill="#808080"/><rect x="11" y="6" width="1" height="1" fill="#fff"/><rect x="0" y="7" width="1" height="1" fill="#808080"/><rect x="1" y="7" width="1" height="1" fill="#fff"/><rect x="4" y="7" width="3" height="1" fill="#808080"/><rect x="7" y="7" width="2" height="1" fill="#fff"/><rect x="10" y="7" width="1" height="1" fill="#808080"/><rect x="11" y="7" width="1" height="1" fill="#fff"/><rect x="0" y="8" width="1" height="1" fill="#808080"/><rect x="1" y="8" width="1" height="1" fill="#fff"/><rect x="4" y="8" width="2" height="1" fill="#808080"/><rect x="6" y="8" width="2" height="1" fill="#fff"/><rect x="10" y="8" width="1" height="1" fill="#808080"/><rect x="11" y="8" width="1" height="1" fill="#fff"/><rect x="0" y="9" width="1" height="1" fill="#808080"/><rect x="1" y="9" width="1" height="1" fill="#fff"/><rect x="4" y="9" width="2" height="1" fill="#808080"/><rect x="6" y="9" width="1" height="1" fill="#fff"/><rect x="10" y="9" width="2" height="1" fill="#808080"/><rect x="15" y="9" width="1" height="1" fill="#808080"/><rect x="0" y="10" width="1" height="1" fill="#808080"/><rect x="1" y="10" width="1" height="1" fill="#fff"/><rect x="5" y="10" width="2" height="1" fill="#fff"/><rect x="10" y="10" width="1" height="1" fill="#808080"/><rect x="11" y="10" width="1" height="1" fill="#fff"/><rect x="12" y="10" width="1" height="1" fill="#808080"/><rect x="14" y="10" width="1" height="1" fill="#808080"/><rect x="16" y="10" width="1" height="1" fill="#fff"/><rect x="0" y="11" width="1" height="1" fill="#808080"/><rect x="1" y="11" width="1" height="1" fill="#fff"/><rect x="4" y="11" width="2" height="1" fill="#808080"/><rect x="10" y="11" width="1" height="1" fill="#808080"/><rect x="11" y="11" width="1" height="1" fill="#fff"/><rect x="13" y="11" width="1" height="1" fill="#808080"/><rect x="15" y="11" width="1" height="1" fill="#fff"/><rect x="0" y="12" width="1" height="1" fill="#808080"/><rect x="1" y="12" width="1" height="1" fill="#fff"/><rect x="4" y="12" width="2" height="1" fill="#808080"/><rect x="6" y="12" width="1" height="1" fill="#fff"/><rect x="10" y="12" width="1" height="1" fill="#808080"/><rect x="11" y="12" width="1" height="1" fill="#fff"/><rect x="12" y="12" width="1" height="1" fill="#808080"/><rect x="14" y="12" width="1" height="1" fill="#808080"/><rect x="0" y="13" width="1" height="1" fill="#808080"/><rect x="1" y="13" width="1" height="1" fill="#fff"/><rect x="5" y="13" width="2" height="1" fill="#fff"/><rect x="10" y="13" width="2" height="1" fill="#808080"/><rect x="13" y="13" width="1" height="1" fill="#fff"/><rect x="15" y="13" width="1" height="1" fill="#808080"/><rect x="0" y="14" width="11" height="1" fill="#808080"/><rect x="11" y="14" width="2" height="1" fill="#fff"/><rect x="16" y="14" width="1" height="1" fill="#fff"/><rect x="1" y="15" width="11" height="1" fill="#fff"/></svg>
<div style="left:604px;top:104px;width:1px;height:18px;background:#808080;"></div>
<div style="left:605px;top:104px;width:1px;height:18px;background:#ffffff;"></div>
<svg style="left:611px;top:105px" width="18" height="16" viewBox="0 0 18 16" shape-rendering="crispEdges" ><rect x="0" y="0" width="9" height="1" fill="#808080"/><rect x="0" y="1" width="1" height="1" fill="#808080"/><rect x="1" y="1" width="7" height="1" fill="#fff"/><rect x="8" y="1" width="2" height="1" fill="#808080"/><rect x="0" y="2" width="1" height="1" fill="#808080"/><rect x="1" y="2" width="1" height="1" fill="#fff"/><rect x="2" y="2" width="1" height="1" fill="#808080"/><rect x="5" y="2" width="1" height="1" fill="#808080"/><rect x="9" y="2" width="1" height="1" fill="#fff"/><rect x="10" y="2" width="1" height="1" fill="#808080"/><rect x="0" y="3" width="1" height="1" fill="#808080"/><rect x="1" y="3" width="1" height="1" fill="#fff"/><rect x="2" y="3" width="1" height="1" fill="#808080"/><rect x="3" y="3" width="1" height="1" fill="#fff"/><rect x="4" y="3" width="1" height="1" fill="#808080"/><rect x="6" y="3" width="1" height="1" fill="#fff"/><rect x="10" y="3" width="1" height="1" fill="#808080"/><rect x="11" y="3" width="1" height="1" fill="#fff"/><rect x="0" y="4" width="1" height="1" fill="#808080"/><rect x="1" y="4" width="1" height="1" fill="#fff"/><rect x="2" y="4" width="2" height="1" fill="#808080"/><rect x="5" y="4" width="1" height="1" fill="#fff"/><rect x="6" y="4" width="1" height="1" fill="#808080"/><rect x="10" y="4" width="1" height="1" fill="#808080"/><rect x="11" y="4" width="1" height="1" fill="#fff"/><rect x="0" y="5" width="1" height="1" fill="#808080"/><rect x="1" y="5" width="1" height="1" fill="#fff"/><rect x="2" y="5" width="1" height="1" fill="#808080"/><rect x="3" y="5" width="2" height="1" fill="#fff"/><rect x="5" y="5" width="2" height="1" fill="#808080"/><rect x="7" y="5" width="1" height="1" fill="#fff"/><rect x="10" y="5" width="1" height="1" fill="#808080"/><rect x="11" y="5" width="1" height="1" fill="#fff"/><rect x="0" y="6" width="1" height="1" fill="#808080"/><rect x="1" y="6" width="1" height="1" fill="#fff"/><rect x="2" y="6" width="1" height="1" fill="#808080"/><rect x="3" y="6" width="1" height="1" fill="#fff"/><rect x="4" y="6" width="1" height="1" fill="#808080"/><rect x="6" y="6" width="1" height="1" fill="#808080"/><rect x="7" y="6" width="1" height="1" fill="#fff"/><rect x="10" y="6" width="3" height="1" fill="#808080"/><rect x="0" y="7" width="1" height="1" fill="#808080"/><rect x="1" y="7" width="1" height="1" fill="#fff"/><rect x="2" y="7" width="2" height="1" fill="#808080"/><rect x="5" y="7" width="1" height="1" fill="#fff"/><rect x="6" y="7" width="1" height="1" fill="#808080"/><rect x="7" y="7" width="1" height="1" fill="#fff"/><rect x="9" y="7" width="1" height="1" fill="#808080"/><rect x="10" y="7" width="3" height="1" fill="#d1cfbe"/><rect x="13" y="7" width="1" height="1" fill="#808080"/><rect x="0" y="8" width="1" height="1" fill="#808080"/><rect x="1" y="8" width="1" height="1" fill="#fff"/><rect x="2" y="8" width="1" height="1" fill="#808080"/><rect x="3" y="8" width="2" height="1" fill="#fff"/><rect x="5" y="8" width="1" height="1" fill="#808080"/><rect x="7" y="8" width="1" height="1" fill="#fff"/><rect x="8" y="8" width="1" height="1" fill="#808080"/><rect x="9" y="8" width="5" height="1" fill="#d1cfbe"/><rect x="14" y="8" width="1" height="1" fill="#808080"/><rect x="0" y="9" width="1" height="1" fill="#808080"/><rect x="1" y="9" width="1" height="1" fill="#fff"/><rect x="2" y="9" width="1" height="1" fill="#808080"/><rect x="3" y="9" width="1" height="1" fill="#fff"/><rect x="4" y="9" width="1" height="1" fill="#808080"/><rect x="6" y="9" width="1" height="1" fill="#fff"/><rect x="8" y="9" width="1" height="1" fill="#808080"/><rect x="9" y="9" width="5" height="1" fill="#d1cfbe"/><rect x="14" y="9" width="1" height="1" fill="#808080"/><rect x="15" y="9" width="1" height="1" fill="#fff"/><rect x="0" y="10" width="1" height="1" fill="#808080"/><rect x="1" y="10" width="1" height="1" fill="#fff"/><rect x="2" y="10" width="2" height="1" fill="#808080"/><rect x="5" y="10" width="1" height="1" fill="#808080"/><rect x="8" y="10" width="1" height="1" fill="#808080"/><rect x="9" y="10" width="5" height="1" fill="#d1cfbe"/><rect x="14" y="10" width="1" height="1" fill="#808080"/><rect x="15" y="10" width="1" height="1" fill="#fff"/><rect x="0" y="11" width="1" height="1" fill="#808080"/><rect x="1" y="11" width="1" height="1" fill="#fff"/><rect x="2" y="11" width="1" height="1" fill="#808080"/><rect x="3" y="11" width="2" height="1" fill="#fff"/><rect x="5" y="11" width="2" height="1" fill="#808080"/><rect x="9" y="11" width="1" height="1" fill="#808080"/><rect x="10" y="11" width="3" height="1" fill="#d1cfbe"/><rect x="13" y="11" width="1" height="1" fill="#808080"/><rect x="15" y="11" width="1" height="1" fill="#fff"/><rect x="0" y="12" width="1" height="1" fill="#808080"/><rect x="1" y="12" width="1" height="1" fill="#fff"/><rect x="2" y="12" width="1" height="1" fill="#808080"/><rect x="3" y="12" width="1" height="1" fill="#fff"/><rect x="4" y="12" width="1" height="1" fill="#808080"/><rect x="6" y="12" width="2" height="1" fill="#fff"/><rect x="10" y="12" width="5" height="1" fill="#808080"/><rect x="0" y="13" width="1" height="1" fill="#808080"/><rect x="1" y="13" width="1" height="1" fill="#fff"/><rect x="3" y="13" width="1" height="1" fill="#fff"/><rect x="5" y="13" width="1" height="1" fill="#fff"/><rect x="10" y="13" width="1" height="1" fill="#808080"/><rect x="11" y="13" width="3" height="1" fill="#fff"/><rect x="14" y="13" width="2" height="1" fill="#808080"/><rect x="0" y="14" width="11" height="1" fill="#808080"/><rect x="11" y="14" width="1" height="1" fill="#fff"/><rect x="15" y="14" width="2" height="1" fill="#808080"/><rect x="1" y="15" width="11" height="1" fill="#fff"/><rect x="16" y="15" width="2" height="1" fill="#fff"/></svg>
<svg style="left:633px;top:104px" width="20" height="18" shape-rendering="crispEdges"><defs><pattern id="dz631" width="2" height="2" patternUnits="userSpaceOnUse"><rect width="2" height="2" fill="#d1cfbe"/><rect width="1" height="1" fill="#fff"/><rect x="1" y="1" width="1" height="1" fill="#fff"/></pattern></defs><rect width="20" height="18" fill="url(#dz631)"/></svg>
<svg style="left:635px;top:106px" width="18" height="16" viewBox="0 0 18 16" shape-rendering="crispEdges" ><rect x="0" y="0" width="9" height="1" fill="#808080"/><rect x="0" y="1" width="1" height="1" fill="#808080"/><rect x="1" y="1" width="7" height="1" fill="#fff"/><rect x="8" y="1" width="2" height="1" fill="#808080"/><rect x="0" y="2" width="1" height="1" fill="#808080"/><rect x="1" y="2" width="1" height="1" fill="#fff"/><rect x="8" y="2" width="3" height="1" fill="#808080"/><rect x="0" y="3" width="1" height="1" fill="#808080"/><rect x="1" y="3" width="1" height="1" fill="#fff"/><rect x="7" y="3" width="4" height="1" fill="#808080"/><rect x="11" y="3" width="1" height="1" fill="#fff"/><rect x="0" y="4" width="1" height="1" fill="#808080"/><rect x="1" y="4" width="1" height="1" fill="#fff"/><rect x="6" y="4" width="5" height="1" fill="#808080"/><rect x="11" y="4" width="1" height="1" fill="#fff"/><rect x="0" y="5" width="1" height="1" fill="#808080"/><rect x="1" y="5" width="1" height="1" fill="#fff"/><rect x="5" y="5" width="6" height="1" fill="#808080"/><rect x="11" y="5" width="1" height="1" fill="#fff"/><rect x="0" y="6" width="1" height="1" fill="#808080"/><rect x="1" y="6" width="1" height="1" fill="#fff"/><rect x="4" y="6" width="9" height="1" fill="#808080"/><rect x="0" y="7" width="1" height="1" fill="#808080"/><rect x="1" y="7" width="1" height="1" fill="#fff"/><rect x="3" y="7" width="7" height="1" fill="#808080"/><rect x="10" y="7" width="3" height="1" fill="#d1cfbe"/><rect x="13" y="7" width="1" height="1" fill="#808080"/><rect x="0" y="8" width="1" height="1" fill="#808080"/><rect x="1" y="8" width="1" height="1" fill="#fff"/><rect x="2" y="8" width="7" height="1" fill="#808080"/><rect x="9" y="8" width="5" height="1" fill="#d1cfbe"/><rect x="14" y="8" width="1" height="1" fill="#808080"/><rect x="0" y="9" width="9" height="1" fill="#808080"/><rect x="9" y="9" width="5" height="1" fill="#d1cfbe"/><rect x="14" y="9" width="1" height="1" fill="#808080"/><rect x="15" y="9" width="1" height="1" fill="#fff"/><rect x="0" y="10" width="3" height="1" fill="#808080"/><rect x="3" y="10" width="4" height="1" fill="#fff"/><rect x="7" y="10" width="2" height="1" fill="#808080"/><rect x="9" y="10" width="5" height="1" fill="#d1cfbe"/><rect x="14" y="10" width="1" height="1" fill="#808080"/><rect x="15" y="10" width="1" height="1" fill="#fff"/><rect x="0" y="11" width="10" height="1" fill="#808080"/><rect x="10" y="11" width="3" height="1" fill="#d1cfbe"/><rect x="13" y="11" width="1" height="1" fill="#808080"/><rect x="15" y="11" width="1" height="1" fill="#fff"/><rect x="0" y="12" width="3" height="1" fill="#808080"/><rect x="3" y="12" width="5" height="1" fill="#fff"/><rect x="8" y="12" width="7" height="1" fill="#808080"/><rect x="0" y="13" width="11" height="1" fill="#808080"/><rect x="11" y="13" width="3" height="1" fill="#fff"/><rect x="14" y="13" width="2" height="1" fill="#808080"/><rect x="0" y="14" width="11" height="1" fill="#808080"/><rect x="11" y="14" width="1" height="1" fill="#fff"/><rect x="15" y="14" width="2" height="1" fill="#808080"/><rect x="1" y="15" width="11" height="1" fill="#fff"/><rect x="16" y="15" width="2" height="1" fill="#fff"/></svg>
<div style="left:656px;top:104px;width:1px;height:18px;background:#808080;"></div>
<div style="left:657px;top:104px;width:1px;height:18px;background:#ffffff;"></div>
<svg style="left:663px;top:105px" width="15" height="15" viewBox="0 0 15 15" shape-rendering="crispEdges" ><rect x="1" y="0" width="11" height="1" fill="#000"/><rect x="1" y="1" width="1" height="1" fill="#000"/><rect x="2" y="1" width="9" height="1" fill="#fff"/><rect x="11" y="1" width="2" height="1" fill="#000"/><rect x="1" y="2" width="1" height="1" fill="#000"/><rect x="2" y="2" width="6" height="1" fill="#fff"/><rect x="8" y="2" width="1" height="1" fill="#008000"/><rect x="9" y="2" width="2" height="1" fill="#fff"/><rect x="11" y="2" width="1" height="1" fill="#000"/><rect x="12" y="2" width="1" height="1" fill="#fff"/><rect x="13" y="2" width="1" height="1" fill="#000"/><rect x="1" y="3" width="1" height="1" fill="#000"/><rect x="2" y="3" width="4" height="1" fill="#fff"/><rect x="6" y="3" width="4" height="1" fill="#008000"/><rect x="10" y="3" width="1" height="1" fill="#fff"/><rect x="11" y="3" width="4" height="1" fill="#000"/><rect x="1" y="4" width="1" height="1" fill="#000"/><rect x="2" y="4" width="3" height="1" fill="#fff"/><rect x="5" y="4" width="2" height="1" fill="#008000"/><rect x="7" y="4" width="1" height="1" fill="#fff"/><rect x="8" y="4" width="3" height="1" fill="#008000"/><rect x="11" y="4" width="3" height="1" fill="#fff"/><rect x="14" y="4" width="1" height="1" fill="#000"/><rect x="1" y="5" width="1" height="1" fill="#000"/><rect x="2" y="5" width="2" height="1" fill="#fff"/><rect x="4" y="5" width="2" height="1" fill="#008000"/><rect x="6" y="5" width="3" height="1" fill="#fff"/><rect x="9" y="5" width="1" height="1" fill="#008000"/><rect x="10" y="5" width="4" height="1" fill="#fff"/><rect x="14" y="5" width="1" height="1" fill="#000"/><rect x="1" y="6" width="1" height="1" fill="#000"/><rect x="2" y="6" width="2" height="1" fill="#fff"/><rect x="4" y="6" width="2" height="1" fill="#008000"/><rect x="6" y="6" width="8" height="1" fill="#fff"/><rect x="14" y="6" width="1" height="1" fill="#000"/><rect x="1" y="7" width="1" height="1" fill="#000"/><rect x="2" y="7" width="2" height="1" fill="#fff"/><rect x="4" y="7" width="2" height="1" fill="#008000"/><rect x="6" y="7" width="4" height="1" fill="#fff"/><rect x="10" y="7" width="2" height="1" fill="#008000"/><rect x="12" y="7" width="2" height="1" fill="#fff"/><rect x="14" y="7" width="1" height="1" fill="#000"/><rect x="1" y="8" width="1" height="1" fill="#000"/><rect x="2" y="8" width="8" height="1" fill="#fff"/><rect x="10" y="8" width="2" height="1" fill="#008000"/><rect x="12" y="8" width="2" height="1" fill="#fff"/><rect x="14" y="8" width="1" height="1" fill="#000"/><rect x="1" y="9" width="1" height="1" fill="#000"/><rect x="2" y="9" width="4" height="1" fill="#fff"/><rect x="6" y="9" width="1" height="1" fill="#008000"/><rect x="7" y="9" width="3" height="1" fill="#fff"/><rect x="10" y="9" width="2" height="1" fill="#008000"/><rect x="12" y="9" width="2" height="1" fill="#fff"/><rect x="14" y="9" width="1" height="1" fill="#000"/><rect x="1" y="10" width="1" height="1" fill="#000"/><rect x="2" y="10" width="3" height="1" fill="#fff"/><rect x="5" y="10" width="3" height="1" fill="#008000"/><rect x="8" y="10" width="1" height="1" fill="#fff"/><rect x="9" y="10" width="2" height="1" fill="#008000"/><rect x="11" y="10" width="3" height="1" fill="#fff"/><rect x="14" y="10" width="1" height="1" fill="#000"/><rect x="1" y="11" width="1" height="1" fill="#000"/><rect x="2" y="11" width="4" height="1" fill="#fff"/><rect x="6" y="11" width="4" height="1" fill="#008000"/><rect x="10" y="11" width="4" height="1" fill="#fff"/><rect x="14" y="11" width="1" height="1" fill="#000"/><rect x="1" y="12" width="1" height="1" fill="#000"/><rect x="2" y="12" width="4" height="1" fill="#fff"/><rect x="6" y="12" width="1" height="1" fill="#008000"/><rect x="7" y="12" width="7" height="1" fill="#fff"/><rect x="14" y="12" width="1" height="1" fill="#000"/><rect x="1" y="13" width="1" height="1" fill="#000"/><rect x="2" y="13" width="12" height="1" fill="#fff"/><rect x="14" y="13" width="1" height="1" fill="#000"/><rect x="1" y="14" width="14" height="1" fill="#000"/></svg>
<div style="left:683px;top:100px;width:1px;height:26px;background:#808080;"></div>
<div style="left:684px;top:100px;width:1px;height:26px;background:#ffffff;"></div>
<div style="left:8px;top:134px;width:295px;height:1px;background:#ffffff;"></div>
<div style="left:8px;top:134px;width:1px;height:3px;background:#ffffff;"></div>
<div style="left:8px;top:136px;width:296px;height:1px;background:#808080;"></div>
<div style="left:303px;top:134px;width:1px;height:3px;background:#808080;"></div>
<div style="left:8px;top:138px;width:295px;height:1px;background:#ffffff;"></div>
<div style="left:8px;top:138px;width:1px;height:3px;background:#ffffff;"></div>
<div style="left:8px;top:140px;width:296px;height:1px;background:#808080;"></div>
<div style="left:303px;top:138px;width:1px;height:3px;background:#808080;"></div>
<div style="left:306px;top:131px;width:12px;height:12px;background:#d1cfbe;"></div>
<div style="left:306px;top:131px;width:11px;height:1px;background:#ffffff;"></div>
<div style="left:306px;top:131px;width:1px;height:11px;background:#ffffff;"></div>
<div style="left:306px;top:142px;width:12px;height:1px;background:#404040;"></div>
<div style="left:317px;top:131px;width:1px;height:12px;background:#404040;"></div>
<div style="left:307px;top:141px;width:10px;height:1px;background:#808080;"></div>
<div style="left:316px;top:132px;width:1px;height:10px;background:#808080;"></div>
<svg style="left:308px;top:136px" width="7" height="4" viewBox="0 0 7 4" shape-rendering="crispEdges" ><rect x="3" y="0" width="1" height="1" fill="#808080"/><rect x="2" y="1" width="3" height="1" fill="#808080"/><rect x="1" y="2" width="5" height="1" fill="#808080"/><rect x="0" y="3" width="7" height="1" fill="#808080"/></svg>
<div style="left:320px;top:131px;width:12px;height:12px;background:#d1cfbe;"></div>
<div style="left:320px;top:131px;width:11px;height:1px;background:#ffffff;"></div>
<div style="left:320px;top:131px;width:1px;height:11px;background:#ffffff;"></div>
<div style="left:320px;top:142px;width:12px;height:1px;background:#404040;"></div>
<div style="left:331px;top:131px;width:1px;height:12px;background:#404040;"></div>
<div style="left:321px;top:141px;width:10px;height:1px;background:#808080;"></div>
<div style="left:330px;top:132px;width:1px;height:10px;background:#808080;"></div>
<svg style="left:323px;top:134px" width="6" height="5" viewBox="0 0 6 5" shape-rendering="crispEdges" ><rect x="0" y="0" width="2" height="1" fill="#000"/><rect x="4" y="0" width="2" height="1" fill="#000"/><rect x="1" y="1" width="4" height="1" fill="#000"/><rect x="2" y="2" width="2" height="1" fill="#000"/><rect x="1" y="3" width="4" height="1" fill="#000"/><rect x="0" y="4" width="2" height="1" fill="#000"/><rect x="4" y="4" width="2" height="1" fill="#000"/></svg>
<div style="left:10px;top:147px;width:1px;height:470px;background:#ffffff;"></div>
<div style="left:10px;top:147px;width:320px;height:1px;background:#ffffff;"></div>
<div style="left:329px;top:148px;width:1px;height:449px;background:#808080;"></div>
<div style="left:330px;top:147px;width:1px;height:451px;background:#404040;"></div>
<div style="left:11px;top:148px;width:318px;height:448px;background:#fff;"></div>
<div style="left:11px;top:148px;width:318px;height:1px;background:#808080;"></div>
<div style="left:11px;top:148px;width:1px;height:448px;background:#808080;"></div>
<div style="left:11px;top:595px;width:318px;height:1px;background:#ffffff;"></div>
<div style="left:328px;top:148px;width:1px;height:448px;background:#ffffff;"></div>
<div style="left:12px;top:149px;width:316px;height:1px;background:#404040;"></div>
<div style="left:12px;top:149px;width:1px;height:446px;background:#404040;"></div>
<div style="left:12px;top:594px;width:316px;height:1px;background:#d1cfbe;"></div>
<div style="left:327px;top:149px;width:1px;height:446px;background:#d1cfbe;"></div>
<div style="left:22px;top:159px;width:1px;height:1px;background:#808080;"></div>
<div style="left:24px;top:159px;width:1px;height:1px;background:#808080;"></div>
<div style="left:26px;top:159px;width:1px;height:1px;background:#808080;"></div>
<div style="left:28px;top:159px;width:1px;height:1px;background:#808080;"></div>
<div style="left:30px;top:159px;width:1px;height:1px;background:#808080;"></div>
<div style="left:32px;top:159px;width:1px;height:1px;background:#808080;"></div>
<svg style="left:33px;top:151px" width="15" height="14" viewBox="0 0 15 14" shape-rendering="crispEdges" ><rect x="2" y="1" width="5" height="1" fill="#808080"/><rect x="1" y="2" width="1" height="1" fill="#808080"/><rect x="2" y="2" width="5" height="1" fill="#eeec88"/><rect x="7" y="2" width="1" height="1" fill="#808080"/><rect x="0" y="3" width="1" height="1" fill="#808080"/><rect x="1" y="3" width="7" height="1" fill="#eeec88"/><rect x="8" y="3" width="7" height="1" fill="#808080"/><rect x="0" y="4" width="1" height="1" fill="#808080"/><rect x="1" y="4" width="12" height="1" fill="#eeec88"/><rect x="13" y="4" width="2" height="1" fill="#000"/><rect x="0" y="5" width="1" height="1" fill="#808080"/><rect x="1" y="5" width="10" height="1" fill="#eeec88"/><rect x="11" y="5" width="1" height="1" fill="#000"/><rect x="12" y="5" width="1" height="1" fill="#eeec88"/><rect x="13" y="5" width="2" height="1" fill="#000"/><rect x="0" y="6" width="1" height="1" fill="#808080"/><rect x="1" y="6" width="9" height="1" fill="#eeec88"/><rect x="10" y="6" width="2" height="1" fill="#000"/><rect x="12" y="6" width="1" height="1" fill="#eeec88"/><rect x="13" y="6" width="2" height="1" fill="#000"/><rect x="0" y="7" width="1" height="1" fill="#808080"/><rect x="1" y="7" width="1" height="1" fill="#eeec88"/><rect x="2" y="7" width="3" height="1" fill="#000"/><rect x="5" y="7" width="3" height="1" fill="#eeec88"/><rect x="8" y="7" width="3" height="1" fill="#000"/><rect x="11" y="7" width="2" height="1" fill="#eeec88"/><rect x="13" y="7" width="2" height="1" fill="#000"/><rect x="0" y="8" width="1" height="1" fill="#808080"/><rect x="1" y="8" width="2" height="1" fill="#eeec88"/><rect x="3" y="8" width="7" height="1" fill="#000"/><rect x="10" y="8" width="3" height="1" fill="#eeec88"/><rect x="13" y="8" width="2" height="1" fill="#000"/><rect x="0" y="9" width="1" height="1" fill="#808080"/><rect x="1" y="9" width="3" height="1" fill="#eeec88"/><rect x="4" y="9" width="5" height="1" fill="#000"/><rect x="9" y="9" width="4" height="1" fill="#eeec88"/><rect x="13" y="9" width="2" height="1" fill="#000"/><rect x="0" y="10" width="1" height="1" fill="#808080"/><rect x="1" y="10" width="4" height="1" fill="#eeec88"/><rect x="5" y="10" width="3" height="1" fill="#000"/><rect x="8" y="10" width="5" height="1" fill="#eeec88"/><rect x="13" y="10" width="2" height="1" fill="#000"/><rect x="0" y="11" width="1" height="1" fill="#808080"/><rect x="1" y="11" width="12" height="1" fill="#eeec88"/><rect x="13" y="11" width="2" height="1" fill="#000"/><rect x="0" y="12" width="1" height="1" fill="#808080"/><rect x="1" y="12" width="14" height="1" fill="#000"/><rect x="1" y="13" width="14" height="1" fill="#000"/></svg>
<div style="left:52px;top:151px;width:24px;height:16px;background:#d1cfbe;"></div>
<div class="t s" style="left:54px;top:152.69px;font:11px/13px 'Liberation Sans',sans-serif;color:#000;white-space:pre;transform:scale(1.0415,1.0900);transform-origin:0 10.31px;">mvc</div>
<div style="left:87px;top:596px;width:243px;height:1px;background:#808080;"></div>
<div style="left:87px;top:597px;width:244px;height:1px;background:#404040;"></div>
<div style="left:10px;top:597px;width:1px;height:19px;background:#ffffff;"></div>
<div style="left:11px;top:616px;width:1px;height:1px;background:#ffffff;"></div>
<div style="left:12px;top:616px;width:74px;height:1px;background:#808080;"></div>
<div style="left:12px;top:617px;width:74px;height:1px;background:#404040;"></div>
<div style="left:85px;top:597px;width:1px;height:19px;background:#808080;"></div>
<div style="left:86px;top:597px;width:1px;height:20px;background:#404040;"></div>
<svg style="left:19px;top:602px" width="15" height="13" viewBox="0 0 15 13" shape-rendering="crispEdges" ><rect x="2" y="0" width="5" height="1" fill="#848c14"/><rect x="1" y="1" width="1" height="1" fill="#848c14"/><rect x="2" y="1" width="5" height="1" fill="#eeec88"/><rect x="7" y="1" width="1" height="1" fill="#848c14"/><rect x="0" y="2" width="1" height="1" fill="#848c14"/><rect x="1" y="2" width="7" height="1" fill="#eeec88"/><rect x="8" y="2" width="6" height="1" fill="#848c14"/><rect x="0" y="3" width="1" height="1" fill="#848c14"/><rect x="1" y="3" width="12" height="1" fill="#eeec88"/><rect x="13" y="3" width="1" height="1" fill="#ffff00"/><rect x="14" y="3" width="1" height="1" fill="#000"/><rect x="0" y="4" width="1" height="1" fill="#848c14"/><rect x="1" y="4" width="12" height="1" fill="#eeec88"/><rect x="13" y="4" width="1" height="1" fill="#ffff00"/><rect x="14" y="4" width="1" height="1" fill="#000"/><rect x="0" y="5" width="1" height="1" fill="#848c14"/><rect x="1" y="5" width="12" height="1" fill="#eeec88"/><rect x="13" y="5" width="1" height="1" fill="#ffff00"/><rect x="14" y="5" width="1" height="1" fill="#000"/><rect x="0" y="6" width="1" height="1" fill="#848c14"/><rect x="1" y="6" width="12" height="1" fill="#eeec88"/><rect x="13" y="6" width="1" height="1" fill="#ffff00"/><rect x="14" y="6" width="1" height="1" fill="#000"/><rect x="0" y="7" width="1" height="1" fill="#848c14"/><rect x="1" y="7" width="12" height="1" fill="#eeec88"/><rect x="13" y="7" width="1" height="1" fill="#ffff00"/><rect x="14" y="7" width="1" height="1" fill="#000"/><rect x="0" y="8" width="1" height="1" fill="#848c14"/><rect x="1" y="8" width="12" height="1" fill="#eeec88"/><rect x="13" y="8" width="1" height="1" fill="#ffff00"/><rect x="14" y="8" width="1" height="1" fill="#000"/><rect x="0" y="9" width="1" height="1" fill="#848c14"/><rect x="1" y="9" width="12" height="1" fill="#eeec88"/><rect x="13" y="9" width="1" height="1" fill="#ffff00"/><rect x="14" y="9" width="1" height="1" fill="#000"/><rect x="0" y="10" width="1" height="1" fill="#848c14"/><rect x="1" y="10" width="12" height="1" fill="#eeec88"/><rect x="13" y="10" width="1" height="1" fill="#ffff00"/><rect x="14" y="10" width="1" height="1" fill="#000"/><rect x="0" y="11" width="14" height="1" fill="#848c14"/><rect x="14" y="11" width="1" height="1" fill="#000"/><rect x="1" y="12" width="14" height="1" fill="#000"/></svg>
<div class="t s" style="left:41px;top:602.69px;font:11px/13px 'Liberation Sans',sans-serif;color:#000;white-space:pre;transform:scale(0.9501,1.0900);transform-origin:0 10.31px;">Modules</div>
<div style="left:87px;top:598px;width:1px;height:17px;background:#404040;"></div>
<div style="left:88px;top:615px;width:66px;height:1px;background:#808080;"></div>
<div style="left:89px;top:616px;width:65px;height:1px;background:#404040;"></div>
<div style="left:153px;top:598px;width:1px;height:17px;background:#808080;"></div>
<div style="left:154px;top:598px;width:1px;height:18px;background:#404040;"></div>
<svg style="left:93px;top:600px" width="15" height="14" viewBox="0 0 15 14" shape-rendering="crispEdges" ><rect x="4" y="0" width="9" height="1" fill="#808080"/><rect x="3" y="1" width="1" height="1" fill="#808080"/><rect x="4" y="1" width="8" height="1" fill="#c0c0c0"/><rect x="12" y="1" width="1" height="1" fill="#808080"/><rect x="13" y="1" width="1" height="1" fill="#000"/><rect x="3" y="2" width="1" height="1" fill="#808080"/><rect x="4" y="2" width="1" height="1" fill="#c0c0c0"/><rect x="5" y="2" width="6" height="1" fill="#000"/><rect x="11" y="2" width="1" height="1" fill="#c0c0c0"/><rect x="12" y="2" width="1" height="1" fill="#808080"/><rect x="13" y="2" width="1" height="1" fill="#000"/><rect x="3" y="3" width="1" height="1" fill="#808080"/><rect x="4" y="3" width="1" height="1" fill="#c0c0c0"/><rect x="5" y="3" width="1" height="1" fill="#000"/><rect x="6" y="3" width="3" height="1" fill="#008080"/><rect x="9" y="3" width="1" height="1" fill="#00ffff"/><rect x="10" y="3" width="1" height="1" fill="#000"/><rect x="11" y="3" width="1" height="1" fill="#c0c0c0"/><rect x="12" y="3" width="1" height="1" fill="#808080"/><rect x="13" y="3" width="1" height="1" fill="#000"/><rect x="3" y="4" width="1" height="1" fill="#808080"/><rect x="4" y="4" width="1" height="1" fill="#c0c0c0"/><rect x="5" y="4" width="1" height="1" fill="#000"/><rect x="6" y="4" width="3" height="1" fill="#008080"/><rect x="9" y="4" width="1" height="1" fill="#00ffff"/><rect x="10" y="4" width="1" height="1" fill="#000"/><rect x="11" y="4" width="1" height="1" fill="#c0c0c0"/><rect x="12" y="4" width="1" height="1" fill="#808080"/><rect x="13" y="4" width="1" height="1" fill="#000"/><rect x="3" y="5" width="1" height="1" fill="#808080"/><rect x="4" y="5" width="1" height="1" fill="#c0c0c0"/><rect x="5" y="5" width="1" height="1" fill="#000"/><rect x="6" y="5" width="3" height="1" fill="#008080"/><rect x="9" y="5" width="1" height="1" fill="#00ffff"/><rect x="10" y="5" width="1" height="1" fill="#000"/><rect x="11" y="5" width="1" height="1" fill="#c0c0c0"/><rect x="12" y="5" width="1" height="1" fill="#808080"/><rect x="13" y="5" width="1" height="1" fill="#000"/><rect x="3" y="6" width="1" height="1" fill="#808080"/><rect x="4" y="6" width="1" height="1" fill="#c0c0c0"/><rect x="5" y="6" width="6" height="1" fill="#000"/><rect x="11" y="6" width="1" height="1" fill="#c0c0c0"/><rect x="12" y="6" width="1" height="1" fill="#808080"/><rect x="13" y="6" width="1" height="1" fill="#000"/><rect x="3" y="7" width="1" height="1" fill="#808080"/><rect x="4" y="7" width="8" height="1" fill="#c0c0c0"/><rect x="12" y="7" width="1" height="1" fill="#808080"/><rect x="13" y="7" width="1" height="1" fill="#000"/><rect x="4" y="8" width="8" height="1" fill="#808080"/><rect x="12" y="8" width="1" height="1" fill="#000"/><rect x="3" y="9" width="11" height="1" fill="#000"/><rect x="2" y="10" width="1" height="1" fill="#808080"/><rect x="3" y="10" width="10" height="1" fill="#c0c0c0"/><rect x="13" y="10" width="2" height="1" fill="#000"/><rect x="1" y="11" width="1" height="1" fill="#808080"/><rect x="2" y="11" width="1" height="1" fill="#c0c0c0"/><rect x="3" y="11" width="1" height="1" fill="#000"/><rect x="4" y="11" width="1" height="1" fill="#c0c0c0"/><rect x="5" y="11" width="1" height="1" fill="#000"/><rect x="6" y="11" width="1" height="1" fill="#c0c0c0"/><rect x="7" y="11" width="1" height="1" fill="#000"/><rect x="8" y="11" width="1" height="1" fill="#c0c0c0"/><rect x="9" y="11" width="1" height="1" fill="#000"/><rect x="10" y="11" width="1" height="1" fill="#c0c0c0"/><rect x="11" y="11" width="1" height="1" fill="#000"/><rect x="12" y="11" width="1" height="1" fill="#c0c0c0"/><rect x="13" y="11" width="1" height="1" fill="#000"/><rect x="0" y="12" width="1" height="1" fill="#808080"/><rect x="1" y="12" width="12" height="1" fill="#c0c0c0"/><rect x="13" y="12" width="1" height="1" fill="#000"/><rect x="0" y="13" width="13" height="1" fill="#000"/></svg>
<div class="t s" style="left:115px;top:600.69px;font:11px/13px 'Liberation Sans',sans-serif;color:#000;white-space:pre;transform:scale(0.9384,1.0900);transform-origin:0 10.31px;">Explore</div>
<div style="left:337px;top:127px;width:1px;height:498px;background:#ffffff;"></div>
<div style="left:4px;top:624px;width:337px;height:1px;background:#808080;"></div>
<div style="left:341px;top:126px;width:687px;height:500px;background:#fff;"></div>
<div style="left:341px;top:126px;width:687px;height:1px;background:#808080;"></div>
<div style="left:341px;top:126px;width:1px;height:500px;background:#808080;"></div>
<div style="left:341px;top:625px;width:687px;height:1px;background:#ffffff;"></div>
<div style="left:1027px;top:126px;width:1px;height:500px;background:#ffffff;"></div>
<div style="left:342px;top:127px;width:685px;height:1px;background:#404040;"></div>
<div style="left:342px;top:127px;width:1px;height:498px;background:#404040;"></div>
<div style="left:342px;top:624px;width:685px;height:1px;background:#d1cfbe;"></div>
<div style="left:1026px;top:127px;width:1px;height:498px;background:#d1cfbe;"></div>
<div style="left:442px;top:144px;width:40px;height:2px;background:#0000c0;"></div>
<div style="left:510px;top:144px;width:40px;height:2px;background:#0000c0;"></div>
<div style="left:495px;top:157px;width:2px;height:40px;background:#0000c0;"></div>
<div style="left:495px;top:221px;width:2px;height:8px;background:#0000c0;"></div>
<div style="left:575px;top:158px;width:2px;height:7px;background:#0000c0;"></div>
<div style="left:602px;top:177px;width:40px;height:1px;background:#000;"></div>
<div style="left:530px;top:237px;width:26px;height:1px;background:#000;"></div>
<div style="left:555px;top:237px;width:1px;height:5px;background:#000;"></div>
<div style="left:555px;top:241px;width:15px;height:1px;background:#000;"></div>
<div style="left:530px;top:244px;width:15px;height:1px;background:#000;"></div>
<div style="left:544px;top:244px;width:1px;height:30px;background:#000;"></div>
<div style="left:544px;top:273px;width:26px;height:1px;background:#000;"></div>
<div style="left:350px;top:135px;width:94px;height:24px;background:#a00000;border-radius:3px;"></div>
<div style="left:349px;top:134px;width:94px;height:24px;background:#a00000;border-radius:3px;"></div>
<div style="left:348px;top:133px;width:94px;height:24px;background:#fff;border:1px solid #b81c1c;border-radius:3px;"></div>
<div class="t" style="left:351.5px;top:138.38px;font:bold 13.33px/16px 'Liberation Sans',sans-serif;color:#000;white-space:pre;transform:scale(1.0365,1.0700);transform-origin:0 12.62px;">ListView.java</div>
<div style="left:482px;top:133px;width:28px;height:24px;background:#fff;border:1px solid #0000a0;"></div>
<div class="t" style="left:485.5px;top:138.38px;font:bold 13.33px/16px 'Liberation Sans',sans-serif;color:#000;white-space:pre;transform:scale(0.9877,1.0700);transform-origin:0 12.62px;">1.1</div>
<div style="left:552px;top:135px;width:57px;height:24px;background:#000090;border-radius:3px;"></div>
<div style="left:551px;top:134px;width:57px;height:24px;background:#000090;border-radius:3px;"></div>
<div style="left:550px;top:133px;width:57px;height:24px;background:#fff;border:1px solid #0000c0;border-radius:3px;"></div>
<div class="t" style="left:553.5px;top:138.38px;font:bold 13.33px/16px 'Liberation Sans',sans-serif;color:#000;white-space:pre;transform:scale(1.0230,1.0700);transform-origin:0 12.62px;">SYGMA</div>
<div style="left:550px;top:165px;width:52px;height:24px;background:#fff;border:1px solid #0000a0;"></div>
<div class="t" style="left:553.5px;top:170.38px;font:bold 13.33px/16px 'Liberation Sans',sans-serif;color:#000;white-space:pre;transform:scale(1.0722,1.0700);transform-origin:0 12.62px;">1.1.1.1</div>
<div style="left:644px;top:167px;width:68px;height:24px;background:#808080;border-radius:3px;"></div>
<div style="left:643px;top:166px;width:68px;height:24px;background:#808080;border-radius:3px;"></div>
<div style="left:642px;top:165px;width:68px;height:24px;background:#fff;border:1px solid #000;border-radius:3px;"></div>
<div class="t" style="left:645.5px;top:170.38px;font:bold 13.33px/16px 'Liberation Sans',sans-serif;color:#000;white-space:pre;transform:scale(1.0377,1.0700);transform-origin:0 12.62px;">MVC_1_0</div>
<div style="left:482px;top:197px;width:28px;height:24px;background:#fff;border:1px solid #0000a0;"></div>
<div class="t" style="left:485.5px;top:202.38px;font:bold 13.33px/16px 'Liberation Sans',sans-serif;color:#000;white-space:pre;transform:scale(1.0417,1.0700);transform-origin:0 12.62px;">1.2</div>
<div style="left:482px;top:229px;width:48px;height:24px;background:#fff;border:1px solid #0000a0;"></div>
<div class="t" style="left:505.5px;top:234.38px;font:bold 13.33px/16px 'Liberation Sans',sans-serif;color:#000;white-space:pre;transform:scale(1.0525,1.0700);transform-origin:0 12.62px;">1.3</div>
<svg style="left:485px;top:233px" width="12" height="15" viewBox="0 0 12 15" shape-rendering="crispEdges" ><rect x="0" y="0" width="9" height="1" fill="#808080"/><rect x="0" y="1" width="1" height="1" fill="#808080"/><rect x="1" y="1" width="7" height="1" fill="#fff"/><rect x="8" y="1" width="2" height="1" fill="#808080"/><rect x="0" y="2" width="1" height="1" fill="#808080"/><rect x="1" y="2" width="7" height="1" fill="#fff"/><rect x="8" y="2" width="1" height="1" fill="#808080"/><rect x="9" y="2" width="1" height="1" fill="#fff"/><rect x="10" y="2" width="1" height="1" fill="#808080"/><rect x="0" y="3" width="1" height="1" fill="#808080"/><rect x="1" y="3" width="1" height="1" fill="#fff"/><rect x="2" y="3" width="5" height="1" fill="#000"/><rect x="7" y="3" width="1" height="1" fill="#fff"/><rect x="8" y="3" width="3" height="1" fill="#808080"/><rect x="11" y="3" width="1" height="1" fill="#000"/><rect x="0" y="4" width="1" height="1" fill="#808080"/><rect x="1" y="4" width="10" height="1" fill="#fff"/><rect x="11" y="4" width="1" height="1" fill="#000"/><rect x="0" y="5" width="1" height="1" fill="#808080"/><rect x="1" y="5" width="1" height="1" fill="#fff"/><rect x="2" y="5" width="8" height="1" fill="#000"/><rect x="10" y="5" width="1" height="1" fill="#fff"/><rect x="11" y="5" width="1" height="1" fill="#000"/><rect x="0" y="6" width="1" height="1" fill="#808080"/><rect x="1" y="6" width="10" height="1" fill="#fff"/><rect x="11" y="6" width="1" height="1" fill="#000"/><rect x="0" y="7" width="1" height="1" fill="#808080"/><rect x="1" y="7" width="1" height="1" fill="#fff"/><rect x="2" y="7" width="8" height="1" fill="#000"/><rect x="10" y="7" width="1" height="1" fill="#fff"/><rect x="11" y="7" width="1" height="1" fill="#000"/><rect x="0" y="8" width="1" height="1" fill="#808080"/><rect x="1" y="8" width="10" height="1" fill="#fff"/><rect x="11" y="8" width="1" height="1" fill="#000"/><rect x="0" y="9" width="1" height="1" fill="#808080"/><rect x="1" y="9" width="1" height="1" fill="#fff"/><rect x="2" y="9" width="8" height="1" fill="#000"/><rect x="10" y="9" width="1" height="1" fill="#fff"/><rect x="11" y="9" width="1" height="1" fill="#000"/><rect x="0" y="10" width="1" height="1" fill="#808080"/><rect x="1" y="10" width="10" height="1" fill="#fff"/><rect x="11" y="10" width="1" height="1" fill="#000"/><rect x="0" y="11" width="1" height="1" fill="#808080"/><rect x="1" y="11" width="1" height="1" fill="#fff"/><rect x="2" y="11" width="8" height="1" fill="#000"/><rect x="10" y="11" width="1" height="1" fill="#fff"/><rect x="11" y="11" width="1" height="1" fill="#000"/><rect x="0" y="12" width="1" height="1" fill="#808080"/><rect x="1" y="12" width="10" height="1" fill="#fff"/><rect x="11" y="12" width="1" height="1" fill="#000"/><rect x="0" y="13" width="1" height="1" fill="#808080"/><rect x="1" y="13" width="10" height="1" fill="#fff"/><rect x="11" y="13" width="1" height="1" fill="#000"/><rect x="0" y="14" width="1" height="1" fill="#808080"/><rect x="1" y="14" width="11" height="1" fill="#000"/></svg>
<div style="left:572px;top:231px;width:97px;height:24px;background:#808080;border-radius:3px;"></div>
<div style="left:571px;top:230px;width:97px;height:24px;background:#808080;border-radius:3px;"></div>
<div style="left:570px;top:229px;width:97px;height:24px;background:#fff;border:1px solid #000;border-radius:3px;"></div>
<div class="t" style="left:573.5px;top:234.38px;font:bold 13.33px/16px 'Liberation Sans',sans-serif;color:#000;white-space:pre;transform:scale(0.9936,1.0700);transform-origin:0 12.62px;">CodigoFuente</div>
<div style="left:572px;top:263px;width:184px;height:24px;background:#808080;border-radius:3px;"></div>
<div style="left:571px;top:262px;width:184px;height:24px;background:#808080;border-radius:3px;"></div>
<div style="left:570px;top:261px;width:184px;height:24px;background:#fff;border:1px solid #000;border-radius:3px;"></div>
<div class="t" style="left:573.5px;top:266.38px;font:bold 13.33px/16px 'Liberation Sans',sans-serif;color:#000;white-space:pre;transform:scale(1.0170,1.0700);transform-origin:0 12.62px;">CODIGOFUENTE_MVC_1_0</div>
<div style="left:4px;top:625px;width:1024px;height:1px;background:#ffffff;"></div>
<div style="left:4px;top:626px;width:1024px;height:3px;background:#d7d4ca;"></div>
<div style="left:4px;top:629px;width:1024px;height:1px;background:#808080;"></div>
<div style="left:6px;top:633px;width:12px;height:12px;background:#d1cfbe;"></div>
<div style="left:6px;top:633px;width:11px;height:1px;background:#ffffff;"></div>
<div style="left:6px;top:633px;width:1px;height:11px;background:#ffffff;"></div>
<div style="left:6px;top:644px;width:12px;height:1px;background:#404040;"></div>
<div style="left:17px;top:633px;width:1px;height:12px;background:#404040;"></div>
<div style="left:7px;top:643px;width:10px;height:1px;background:#808080;"></div>
<div style="left:16px;top:634px;width:1px;height:10px;background:#808080;"></div>
<svg style="left:9px;top:636px" width="6" height="5" viewBox="0 0 6 5" shape-rendering="crispEdges" ><rect x="0" y="0" width="2" height="1" fill="#000"/><rect x="4" y="0" width="2" height="1" fill="#000"/><rect x="1" y="1" width="4" height="1" fill="#000"/><rect x="2" y="2" width="2" height="1" fill="#000"/><rect x="1" y="3" width="4" height="1" fill="#000"/><rect x="0" y="4" width="2" height="1" fill="#000"/><rect x="4" y="4" width="2" height="1" fill="#000"/></svg>
<div style="left:6px;top:647px;width:12px;height:12px;background:#d1cfbe;"></div>
<div style="left:6px;top:647px;width:11px;height:1px;background:#ffffff;"></div>
<div style="left:6px;top:647px;width:1px;height:11px;background:#ffffff;"></div>
<div style="left:6px;top:658px;width:12px;height:1px;background:#404040;"></div>
<div style="left:17px;top:647px;width:1px;height:12px;background:#404040;"></div>
<div style="left:7px;top:657px;width:10px;height:1px;background:#808080;"></div>
<div style="left:16px;top:648px;width:1px;height:10px;background:#808080;"></div>
<svg style="left:10px;top:649px" width="4" height="7" viewBox="0 0 4 7" shape-rendering="crispEdges" ><rect x="3" y="0" width="1" height="1" fill="#808080"/><rect x="2" y="1" width="2" height="1" fill="#808080"/><rect x="1" y="2" width="3" height="1" fill="#808080"/><rect x="0" y="3" width="4" height="1" fill="#808080"/><rect x="1" y="4" width="3" height="1" fill="#808080"/><rect x="2" y="5" width="2" height="1" fill="#808080"/><rect x="3" y="6" width="1" height="1" fill="#808080"/></svg>
<div style="left:8px;top:663px;width:1px;height:57px;background:#ffffff;"></div>
<div style="left:8px;top:663px;width:3px;height:1px;background:#ffffff;"></div>
<div style="left:10px;top:663px;width:1px;height:57px;background:#808080;"></div>
<div style="left:8px;top:719px;width:3px;height:1px;background:#808080;"></div>
<div style="left:12px;top:663px;width:1px;height:57px;background:#ffffff;"></div>
<div style="left:12px;top:663px;width:3px;height:1px;background:#ffffff;"></div>
<div style="left:14px;top:663px;width:1px;height:57px;background:#808080;"></div>
<div style="left:12px;top:719px;width:3px;height:1px;background:#808080;"></div>
<div style="left:23px;top:636px;width:1000px;height:82px;background:#fff;"></div>
<div style="left:23px;top:636px;width:1000px;height:1px;background:#808080;"></div>
<div style="left:23px;top:636px;width:1px;height:82px;background:#808080;"></div>
<div style="left:23px;top:717px;width:1000px;height:1px;background:#ffffff;"></div>
<div style="left:1022px;top:636px;width:1px;height:82px;background:#ffffff;"></div>
<div style="left:24px;top:637px;width:998px;height:1px;background:#404040;"></div>
<div style="left:24px;top:637px;width:1px;height:80px;background:#404040;"></div>
<div style="left:24px;top:716px;width:998px;height:1px;background:#d1cfbe;"></div>
<div style="left:1021px;top:637px;width:1px;height:80px;background:#d1cfbe;"></div>
<div class="t s" style="left:35px;top:656.45px;font:13.33px/16px 'Liberation Mono',monospace;color:#111;white-space:pre;transform:scale(1.0000,0.9000);transform-origin:0 11.55px;">*****CVS exited normally with code 0*****</div>
<svg style="left:1005px;top:638px" width="16" height="78" shape-rendering="crispEdges"><defs><pattern id="sbd" width="2" height="2" patternUnits="userSpaceOnUse"><rect width="2" height="2" fill="#d1cfbe"/><rect width="1" height="1" fill="#fff"/><rect x="1" y="1" width="1" height="1" fill="#fff"/></pattern></defs><rect width="16" height="78" fill="url(#sbd)"/></svg>
<div style="left:1005px;top:638px;width:16px;height:16px;background:#d1cfbe;"></div>
<div style="left:1005px;top:638px;width:15px;height:1px;background:#ffffff;"></div>
<div style="left:1005px;top:638px;width:1px;height:15px;background:#ffffff;"></div>
<div style="left:1005px;top:653px;width:16px;height:1px;background:#404040;"></div>
<div style="left:1020px;top:638px;width:1px;height:16px;background:#404040;"></div>
<div style="left:1006px;top:652px;width:14px;height:1px;background:#808080;"></div>
<div style="left:1019px;top:639px;width:1px;height:14px;background:#808080;"></div>
<svg style="left:1009px;top:644px" width="7" height="4" viewBox="0 0 7 4" shape-rendering="crispEdges" ><rect x="3" y="0" width="1" height="1" fill="#000"/><rect x="2" y="1" width="3" height="1" fill="#000"/><rect x="1" y="2" width="5" height="1" fill="#000"/><rect x="0" y="3" width="7" height="1" fill="#000"/></svg>
<div style="left:1005px;top:700px;width:16px;height:16px;background:#d1cfbe;"></div>
<div style="left:1005px;top:700px;width:15px;height:1px;background:#ffffff;"></div>
<div style="left:1005px;top:700px;width:1px;height:15px;background:#ffffff;"></div>
<div style="left:1005px;top:715px;width:16px;height:1px;background:#404040;"></div>
<div style="left:1020px;top:700px;width:1px;height:16px;background:#404040;"></div>
<div style="left:1006px;top:714px;width:14px;height:1px;background:#808080;"></div>
<div style="left:1019px;top:701px;width:1px;height:14px;background:#808080;"></div>
<svg style="left:1009px;top:706px" width="7" height="4" viewBox="0 0 7 4" shape-rendering="crispEdges" ><rect x="0" y="0" width="7" height="1" fill="#000"/><rect x="1" y="1" width="5" height="1" fill="#000"/><rect x="2" y="2" width="3" height="1" fill="#000"/><rect x="3" y="3" width="1" height="1" fill="#000"/></svg>
<div style="left:1005px;top:692px;width:16px;height:8px;background:#d1cfbe;"></div>
<div style="left:1005px;top:692px;width:15px;height:1px;background:#ffffff;"></div>
<div style="left:1005px;top:692px;width:1px;height:7px;background:#ffffff;"></div>
<div style="left:1005px;top:699px;width:16px;height:1px;background:#404040;"></div>
<div style="left:1020px;top:692px;width:1px;height:8px;background:#404040;"></div>
<div style="left:1006px;top:698px;width:14px;height:1px;background:#808080;"></div>
<div style="left:1019px;top:693px;width:1px;height:6px;background:#808080;"></div>
<div style="left:4px;top:724px;width:1024px;height:1px;background:#808080;"></div>
<div style="left:4px;top:725px;width:1024px;height:1px;background:#ffffff;"></div>
<div class="t s" style="left:7px;top:729.69px;font:11px/13px 'Liberation Sans',sans-serif;color:#000;white-space:pre;transform:scale(0.9332,1.0900);transform-origin:0 10.31px;">For Help, press F1</div>
<div style="left:824px;top:728px;width:106px;height:1px;background:#808080;"></div>
<div style="left:824px;top:728px;width:1px;height:16px;background:#808080;"></div>
<div style="left:824px;top:743px;width:106px;height:1px;background:#ffffff;"></div>
<div style="left:929px;top:728px;width:1px;height:16px;background:#ffffff;"></div>
<div style="left:932px;top:728px;width:27px;height:1px;background:#808080;"></div>
<div style="left:932px;top:728px;width:1px;height:16px;background:#808080;"></div>
<div style="left:932px;top:743px;width:27px;height:1px;background:#ffffff;"></div>
<div style="left:958px;top:728px;width:1px;height:16px;background:#ffffff;"></div>
<div style="left:961px;top:728px;width:31px;height:1px;background:#808080;"></div>
<div style="left:961px;top:728px;width:1px;height:16px;background:#808080;"></div>
<div style="left:961px;top:743px;width:31px;height:1px;background:#ffffff;"></div>
<div style="left:991px;top:728px;width:1px;height:16px;background:#ffffff;"></div>
<div style="left:994px;top:728px;width:34px;height:1px;background:#808080;"></div>
<div style="left:994px;top:728px;width:1px;height:16px;background:#808080;"></div>
<div style="left:994px;top:743px;width:34px;height:1px;background:#ffffff;"></div>
<div style="left:1027px;top:728px;width:1px;height:16px;background:#ffffff;"></div>
<div class="t s" style="left:964px;top:729.69px;font:11px/13px 'Liberation Sans',sans-serif;color:#000;white-space:pre;transform:scale(0.9980,1.0900);transform-origin:0 10.31px;">NUM</div>
<div style="left:4px;top:745px;width:1024px;height:1px;background:#ffffff;"></div>
</body></html>
